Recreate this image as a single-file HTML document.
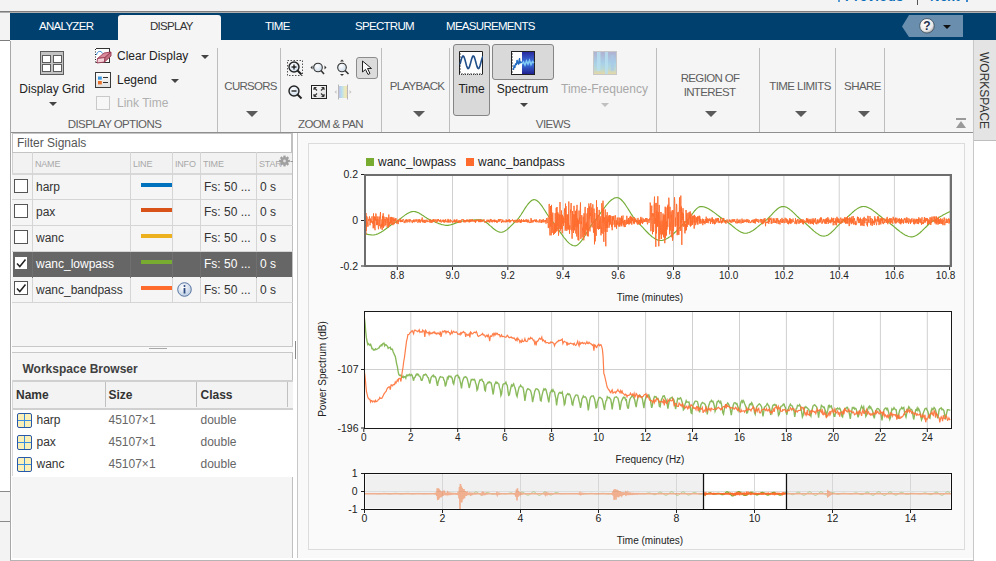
<!DOCTYPE html>
<html><head><meta charset="utf-8"><style>
html,body{margin:0;padding:0;width:996px;height:561px;overflow:hidden;background:#f5f5f5;}
body{position:relative;font-family:"Liberation Sans",sans-serif;}
.r{position:absolute;}
.t{position:absolute;white-space:nowrap;line-height:1.149;}
</style></head><body>
<div class="r" style="left:0px;top:0px;width:996px;height:11px;background:#f3f3f3;"></div>
<div class="t" style="left:836px;top:-9.8px;font-size:13px;color:#0b6fb8;font-weight:700;letter-spacing:0.5px">&lsaquo; Previous</div>
<div class="r" style="left:917px;top:0px;width:1px;height:5px;background:#555;"></div>
<div class="r" style="left:838px;top:0px;width:2px;height:2px;background:#5a9ad0;"></div>
<div class="r" style="left:966px;top:0px;width:2px;height:2px;background:#3a86c8;"></div>
<div class="t" style="left:930px;top:-9.8px;font-size:13px;color:#0b6fb8;font-weight:700;letter-spacing:0.5px">Next &rsaquo;</div>
<div class="r" style="left:0px;top:11px;width:996px;height:1px;background:#7d7d7d;"></div>
<div class="r" style="left:0px;top:12px;width:996px;height:1px;background:#b0b0b0;"></div>
<div class="r" style="left:0px;top:13px;width:10px;height:28px;background:#f3f3f3;"></div>
<div class="r" style="left:10px;top:13px;width:986px;height:27px;background:#00406f;"></div>
<div class="r" style="left:0px;top:40px;width:10px;height:1px;background:#7d7d7d;"></div>
<div class="r" style="left:0px;top:41px;width:10px;height:450px;background:#ffffff;"></div>
<div class="r" style="left:118px;top:15px;width:103px;height:26px;background:#f5f5f5;border-radius:3px 3px 0 0;"></div>
<div class="t" style="left:39px;top:19.6px;font-size:11.5px;color:#ffffff;font-weight:400;letter-spacing:-0.7px">ANALYZER</div>
<div class="t" style="left:150px;top:19.6px;font-size:11.5px;color:#333;font-weight:400;letter-spacing:-0.7px">DISPLAY</div>
<div class="t" style="left:265px;top:19.6px;font-size:11.5px;color:#ffffff;font-weight:400;letter-spacing:-0.7px">TIME</div>
<div class="t" style="left:355px;top:19.6px;font-size:11.5px;color:#ffffff;font-weight:400;letter-spacing:-0.7px">SPECTRUM</div>
<div class="t" style="left:446px;top:19.6px;font-size:11.5px;color:#ffffff;font-weight:400;letter-spacing:-0.7px">MEASUREMENTS</div>
<svg class="r" style="left:900px;top:13px" width="70" height="27"><polygon points="2,13.5 9,2 63,2 63,24 9,24" fill="#6a8fae"/><defs><radialGradient id="hg" cx="40%" cy="35%" r="70%"><stop offset="0" stop-color="#ffffff"/><stop offset="0.7" stop-color="#e8e8e8"/><stop offset="1" stop-color="#9a9a9a"/></radialGradient></defs><circle cx="27" cy="12.8" r="7.3" fill="url(#hg)" stroke="#3a4a5a" stroke-width="0.8"/><text x="27" y="17.3" text-anchor="middle" font-family="Liberation Sans" font-weight="700" font-size="12" fill="#1f3050">?</text><polygon points="43,12 51,12 47,16" fill="#111"/></svg>
<div class="r" style="left:10px;top:40px;width:963px;height:92px;background:#f5f5f5;"></div>
<div class="r" style="left:10px;top:41px;width:1px;height:520px;background:#a8a8a8;"></div>
<div class="r" style="left:11px;top:132px;width:962px;height:1px;background:#8f8f8f;"></div>
<div class="r" style="left:217px;top:48px;width:1px;height:84px;background:#bdbdbd;"></div>
<div class="r" style="left:280px;top:48px;width:1px;height:84px;background:#bdbdbd;"></div>
<div class="r" style="left:381px;top:48px;width:1px;height:84px;background:#bdbdbd;"></div>
<div class="r" style="left:449px;top:48px;width:1px;height:84px;background:#bdbdbd;"></div>
<div class="r" style="left:656px;top:48px;width:1px;height:84px;background:#bdbdbd;"></div>
<div class="r" style="left:759px;top:48px;width:1px;height:84px;background:#bdbdbd;"></div>
<div class="r" style="left:835px;top:48px;width:1px;height:84px;background:#bdbdbd;"></div>
<div class="r" style="left:884px;top:48px;width:1px;height:84px;background:#bdbdbd;"></div>
<svg class="r" style="left:40px;top:51px" width="24" height="24"><rect x="0.5" y="0.5" width="23" height="23" fill="#c2c2c2" stroke="#5c5c5c"/><rect x="2.5" y="4.5" width="8" height="7" fill="#fff" stroke="#5c5c5c"/><rect x="13.5" y="4.5" width="8" height="7" fill="#fff" stroke="#5c5c5c"/><rect x="2.5" y="13.5" width="8" height="7" fill="#fff" stroke="#5c5c5c"/><rect x="13.5" y="13.5" width="8" height="7" fill="#fff" stroke="#5c5c5c"/></svg>
<div class="t" style="left:-148px;width:400px;text-align:center;top:82.8px;font-size:12px;color:#222;font-weight:400;">Display Grid</div>
<div class="r" style="left:49.0px;top:102px;width:0;height:0;border-left:4.0px solid transparent;border-right:4.0px solid transparent;border-top:4px solid #444;"></div>
<svg class="r" style="left:95px;top:48px" width="17" height="17"><rect x="0.5" y="0.5" width="14" height="14" fill="#fff" stroke="#333"/><line x1="0.5" y1="0" x2="0.5" y2="15" stroke="#fff" stroke-width="1"/><line x1="0.5" y1="1" x2="0.5" y2="15" stroke="#222" stroke-dasharray="1,1.5"/><path d="M1.5,7 C2,3 6,2 7.5,5.5" fill="none" stroke="#3a8ad8" stroke-width="1"/><polygon points="9,5 16,4 10,9.5 2.5,10.5" fill="#d88a9a" stroke="#9a3a55" stroke-width="0.9" stroke-linejoin="round"/><polygon points="2.5,10.5 10,9.5 9.5,14 2,15" fill="#f4d0d8" stroke="#9a3a55" stroke-width="0.9" stroke-linejoin="round"/><polygon points="10,9.5 16,4 16,8 9.5,14" fill="#c07080" stroke="#9a3a55" stroke-width="0.9" stroke-linejoin="round"/></svg>
<div class="t" style="left:117px;top:50.3px;font-size:12px;color:#222;font-weight:400;">Clear Display</div>
<div class="r" style="left:201.0px;top:55px;width:0;height:0;border-left:4.0px solid transparent;border-right:4.0px solid transparent;border-top:4px solid #444;"></div>
<svg class="r" style="left:95px;top:72px" width="16" height="16"><defs><linearGradient id="lgg" x1="0" x2="0" y1="0" y2="1"><stop offset="0" stop-color="#ffffff"/><stop offset="1" stop-color="#e0e0e0"/></linearGradient></defs><rect x="0.5" y="0.5" width="15" height="15" fill="url(#lgg)" stroke="#3a3a3a"/><rect x="3" y="4.5" width="3.8" height="3.2" fill="#3d9ae0"/><rect x="3" y="9" width="3.8" height="3.4" fill="#e8702a"/><rect x="8" y="5" width="5" height="1" fill="#333"/><rect x="8" y="10" width="5" height="1" fill="#333"/></svg>
<div class="t" style="left:117px;top:74.0px;font-size:12px;color:#222;font-weight:400;">Legend</div>
<div class="r" style="left:171.0px;top:79px;width:0;height:0;border-left:4.0px solid transparent;border-right:4.0px solid transparent;border-top:4px solid #444;"></div>
<div class="r" style="left:96px;top:96px;width:14px;height:14px;background:#f7f7f7;border:1px solid #c9c9c9;box-sizing:border-box;"></div>
<div class="t" style="left:117px;top:97.0px;font-size:12px;color:#b0b0b0;font-weight:400;">Link Time</div>
<div class="t" style="left:-85.5px;width:400px;text-align:center;top:117.9px;font-size:11.5px;color:#5e5e5e;font-weight:400;letter-spacing:-0.6px">DISPLAY OPTIONS</div>
<div class="t" style="left:50.5px;width:400px;text-align:center;top:79.7px;font-size:11.5px;color:#5e5e5e;font-weight:400;letter-spacing:-0.75px">CURSORS</div>
<div class="r" style="left:246.0px;top:111px;width:0;height:0;border-left:6.0px solid transparent;border-right:6.0px solid transparent;border-top:6px solid #5a5a5a;"></div>
<svg class="r" style="left:287px;top:60px" width="17" height="17"><rect x="0.5" y="0.5" width="15" height="15" fill="none" stroke="#555" stroke-dasharray="1.5,1.5"/></svg>
<svg class="r" style="left:287px;top:60px" width="17" height="17"><defs><radialGradient id="mg28760" cx="40%" cy="35%" r="70%"><stop offset="0" stop-color="#ffffff"/><stop offset="1" stop-color="#c8d8e8"/></radialGradient></defs><circle cx="7" cy="7" r="5" fill="url(#mg28760)" stroke="#222" stroke-width="1.4"/><line x1="10.5" y1="10.5" x2="14.5" y2="14.5" stroke="#222" stroke-width="2"/><line x1="4.5" y1="7" x2="9.5" y2="7" stroke="#111" stroke-width="1.3"/><line x1="7" y1="4.5" x2="7" y2="9.5" stroke="#111" stroke-width="1.3"/></svg>
<svg class="r" style="left:310px;top:60px" width="17" height="17"><defs><radialGradient id="mgx" cx="40%" cy="35%" r="70%"><stop offset="0" stop-color="#ffffff"/><stop offset="1" stop-color="#c8d8e8"/></radialGradient></defs><circle cx="8" cy="7.5" r="4.3" fill="url(#mgx)" stroke="#333" stroke-width="1.1"/><line x1="11" y1="10.5" x2="14" y2="14" stroke="#333" stroke-width="1.6"/><polygon points="0.5,7.5 2.5,5.5 2.5,9.5" fill="#333"/><polygon points="16.5,7.5 14.5,5.5 14.5,9.5" fill="#333"/></svg>
<svg class="r" style="left:334px;top:59px" width="17" height="18"><defs><radialGradient id="mgy" cx="40%" cy="35%" r="70%"><stop offset="0" stop-color="#ffffff"/><stop offset="1" stop-color="#c8d8e8"/></radialGradient></defs><circle cx="8" cy="8.5" r="4.3" fill="url(#mgy)" stroke="#333" stroke-width="1.1"/><line x1="11" y1="11.5" x2="14.5" y2="15" stroke="#333" stroke-width="1.6"/><polygon points="8,0.5 6,2.5 10,2.5" fill="#333"/><polygon points="8,17 6,15 10,15" fill="#333"/></svg>
<div class="r" style="left:356px;top:57px;width:22px;height:22px;background:#dcdcdc;border:1px solid #8c8c8c;border-radius:3px;box-sizing:border-box"></div>
<svg class="r" style="left:361px;top:60px" width="14" height="16"><path d="M1.5,1 L1.5,12 L4.5,9.5 L7,14.5 L9,13.5 L6.5,8.5 L10.5,8.5 Z" fill="#fafafa" stroke="#222" stroke-width="1"/></svg>
<svg class="r" style="left:287px;top:84px" width="17" height="17"><defs><radialGradient id="mg28784" cx="40%" cy="35%" r="70%"><stop offset="0" stop-color="#ffffff"/><stop offset="1" stop-color="#c8d8e8"/></radialGradient></defs><circle cx="7" cy="7" r="5" fill="url(#mg28784)" stroke="#222" stroke-width="1.4"/><line x1="10.5" y1="10.5" x2="14.5" y2="14.5" stroke="#222" stroke-width="2"/><line x1="4.5" y1="7" x2="9.5" y2="7" stroke="#111" stroke-width="1.3"/></svg>
<svg class="r" style="left:311px;top:85px" width="16" height="14"><defs><linearGradient id="fitg" x1="0" x2="1" y1="0" y2="1"><stop offset="0" stop-color="#ffffff"/><stop offset="1" stop-color="#dcdcdc"/></linearGradient></defs><rect x="0.5" y="0.5" width="15" height="13" fill="url(#fitg)" stroke="#222"/><path d="M6,5.5 L3,2.5 M3,2.5 L3,5 M3,2.5 L5.5,2.5 M10,5.5 L13,2.5 M13,2.5 L10.5,2.5 M13,2.5 L13,5 M6,8.5 L3,11.5 M3,11.5 L3,9 M3,11.5 L5.5,11.5 M10,8.5 L13,11.5 M13,11.5 L13,9 M13,11.5 L10.5,11.5" stroke="#333" stroke-width="1.1"/></svg>
<svg class="r" style="left:334px;top:84px" width="18" height="16"><defs><linearGradient id="tfg" x1="0" x2="1"><stop offset="0" stop-color="#b8b0e0"/><stop offset="0.35" stop-color="#a8d8f0"/><stop offset="0.7" stop-color="#e8e8b0"/><stop offset="1" stop-color="#f0d8a0"/></linearGradient></defs><rect x="4.5" y="2" width="9" height="12" fill="url(#tfg)" opacity="0.8"/><line x1="4.5" y1="0.5" x2="4.5" y2="15.5" stroke="#b8b8b8"/><line x1="13.5" y1="0.5" x2="13.5" y2="15.5" stroke="#b8b8b8"/><polygon points="0.5,8 2.5,6 2.5,10" fill="#c8c8c8"/><polygon points="17.5,8 15.5,6 15.5,10" fill="#c8c8c8"/></svg>
<div class="t" style="left:130.5px;width:400px;text-align:center;top:117.9px;font-size:11.5px;color:#5e5e5e;font-weight:400;letter-spacing:-0.65px">ZOOM &amp; PAN</div>
<div class="t" style="left:217px;width:400px;text-align:center;top:79.7px;font-size:11.5px;color:#5e5e5e;font-weight:400;letter-spacing:-0.65px">PLAYBACK</div>
<div class="r" style="left:413.0px;top:111px;width:0;height:0;border-left:6.0px solid transparent;border-right:6.0px solid transparent;border-top:6px solid #5a5a5a;"></div>
<div class="r" style="left:453px;top:44px;width:37px;height:72px;background:#d9d9d9;border:1px solid #858585;border-radius:3px;box-sizing:border-box"></div>
<svg class="r" style="left:459px;top:51px" width="24" height="24"><rect x="0.5" y="0.5" width="23" height="23" fill="#fff"/><path d="M0.5,23.5 L0.5,0.5 L23.5,0.5 L23.5,23.5" fill="none" stroke="#222"/><line x1="0" y1="23.5" x2="24" y2="23.5" stroke="#444" stroke-dasharray="1,1"/><line x1="0.5" y1="3" x2="2" y2="3" stroke="#222" stroke-width="0.8"/><line x1="0.5" y1="6" x2="2" y2="6" stroke="#222" stroke-width="0.8"/><line x1="0.5" y1="9" x2="2" y2="9" stroke="#222" stroke-width="0.8"/><line x1="0.5" y1="12" x2="2" y2="12" stroke="#222" stroke-width="0.8"/><line x1="0.5" y1="15" x2="2" y2="15" stroke="#222" stroke-width="0.8"/><line x1="0.5" y1="18" x2="2" y2="18" stroke="#222" stroke-width="0.8"/><line x1="0.5" y1="21" x2="2" y2="21" stroke="#222" stroke-width="0.8"/><line x1="3" y1="23.5" x2="3" y2="22" stroke="#222" stroke-width="0.8"/><line x1="6" y1="23.5" x2="6" y2="22" stroke="#222" stroke-width="0.8"/><line x1="9" y1="23.5" x2="9" y2="22" stroke="#222" stroke-width="0.8"/><line x1="12" y1="23.5" x2="12" y2="22" stroke="#222" stroke-width="0.8"/><line x1="15" y1="23.5" x2="15" y2="22" stroke="#222" stroke-width="0.8"/><line x1="18" y1="23.5" x2="18" y2="22" stroke="#222" stroke-width="0.8"/><line x1="21" y1="23.5" x2="21" y2="22" stroke="#222" stroke-width="0.8"/><path d="M1.00,13.39 L1.50,11.49 L2.00,9.58 L2.50,7.82 L3.00,6.39 L3.50,5.43 L4.00,5.01 L4.50,5.19 L5.00,5.94 L5.50,7.20 L6.00,8.84 L6.50,10.72 L7.00,12.65 L7.50,14.45 L8.00,15.96 L8.50,17.02 L9.00,17.55 L9.50,17.49 L10.00,16.85 L10.50,15.69 L11.00,14.11 L11.50,12.27 L12.00,10.33 L12.50,8.49 L13.00,6.91 L13.50,5.75 L14.00,5.11 L14.50,5.05 L15.00,5.58 L15.50,6.64 L16.00,8.15 L16.50,9.95 L17.00,11.88 L17.50,13.76 L18.00,15.40 L18.50,16.66 L19.00,17.41 L19.50,17.59 L20.00,17.17 L20.50,16.21 L21.00,14.78 L21.50,13.02 L22.00,11.11 L22.50,9.21 L23.00,7.50 L23.50,6.16 L24.00,5.30" fill="none" stroke="#1f4e8a" stroke-width="1.6"/></svg>
<div class="t" style="left:271.5px;width:400px;text-align:center;top:82.6px;font-size:12px;color:#222;font-weight:400;">Time</div>
<div class="r" style="left:492px;top:44px;width:62px;height:36px;background:#d9d9d9;border:1px solid #858585;border-radius:3px;box-sizing:border-box"></div>
<svg class="r" style="left:511px;top:51px" width="24" height="24"><defs><linearGradient id="spg" x1="0" x2="0" y1="0" y2="1"><stop offset="0" stop-color="#2a2aa0"/><stop offset="0.45" stop-color="#3a70d8"/><stop offset="0.55" stop-color="#3a70d8"/><stop offset="1" stop-color="#202090"/></linearGradient></defs><rect x="0.5" y="0.5" width="23" height="23" fill="#fff" stroke="#222"/><rect x="11" y="1" width="12" height="22" fill="url(#spg)"/><path d="M11,13 L12.5,11 L14,14 L15.5,10 L17,13 L18.5,9.5 L20,13.5 L21.5,10.5 L23,12" stroke="#8ad8f8" stroke-width="1.6" fill="none" opacity="0.85"/><line x1="0.5" y1="3" x2="2" y2="3" stroke="#222" stroke-width="0.8"/><line x1="0.5" y1="6" x2="2" y2="6" stroke="#222" stroke-width="0.8"/><line x1="0.5" y1="9" x2="2" y2="9" stroke="#222" stroke-width="0.8"/><line x1="0.5" y1="12" x2="2" y2="12" stroke="#222" stroke-width="0.8"/><line x1="0.5" y1="15" x2="2" y2="15" stroke="#222" stroke-width="0.8"/><line x1="0.5" y1="18" x2="2" y2="18" stroke="#222" stroke-width="0.8"/><line x1="0.5" y1="21" x2="2" y2="21" stroke="#222" stroke-width="0.8"/><path d="M2.5,19 L3,15 L4,16 L4.5,13 L5.5,13.5 L6,9 L7,12.5 L7.5,13 L8.5,7 L9,12 L10,11 L11,11.5" fill="none" stroke="#1f6ac0" stroke-width="1.3"/></svg>
<div class="t" style="left:322.5px;width:400px;text-align:center;top:83.0px;font-size:12px;color:#222;font-weight:400;">Spectrum</div>
<div class="r" style="left:520.0px;top:103px;width:0;height:0;border-left:4.0px solid transparent;border-right:4.0px solid transparent;border-top:4px solid #444;"></div>
<svg class="r" style="left:593px;top:51px" width="24" height="24"><defs><linearGradient id="tfv" x1="0" x2="0" y1="0" y2="1"><stop offset="0" stop-color="#b0b0d0"/><stop offset="0.5" stop-color="#a8d0e8"/><stop offset="0.75" stop-color="#b8d8d8"/><stop offset="1" stop-color="#e8d8a0"/></linearGradient></defs><rect x="0.5" y="0.5" width="23" height="23" fill="url(#tfv)" stroke="#c8c8c8"/><rect x="4" y="1" width="3.5" height="19" fill="#b8e0f0" opacity="0.8"/><rect x="12" y="1" width="3" height="22" fill="#b8e0f0" opacity="0.8"/><rect x="18" y="4" width="3" height="16" fill="#a8c8e8" opacity="0.6"/></svg>
<div class="t" style="left:404.5px;width:400px;text-align:center;top:83.0px;font-size:12px;color:#a8a8a8;font-weight:400;">Time-Frequency</div>
<div class="r" style="left:601.0px;top:103px;width:0;height:0;border-left:4.0px solid transparent;border-right:4.0px solid transparent;border-top:4px solid #c0c0c0;"></div>
<div class="t" style="left:353px;width:400px;text-align:center;top:117.9px;font-size:11.5px;color:#5e5e5e;font-weight:400;letter-spacing:-0.55px">VIEWS</div>
<div class="t" style="left:510px;width:400px;text-align:center;top:72.4px;font-size:11.5px;color:#5e5e5e;font-weight:400;letter-spacing:-0.65px">REGION OF</div>
<div class="t" style="left:509.5px;width:400px;text-align:center;top:86.4px;font-size:11.5px;color:#5e5e5e;font-weight:400;letter-spacing:-0.65px">INTEREST</div>
<div class="r" style="left:705.0px;top:111px;width:0;height:0;border-left:6.0px solid transparent;border-right:6.0px solid transparent;border-top:6px solid #5a5a5a;"></div>
<div class="t" style="left:600px;width:400px;text-align:center;top:79.7px;font-size:11.5px;color:#5e5e5e;font-weight:400;letter-spacing:-0.55px">TIME LIMITS</div>
<div class="r" style="left:795.0px;top:111px;width:0;height:0;border-left:6.0px solid transparent;border-right:6.0px solid transparent;border-top:6px solid #5a5a5a;"></div>
<div class="t" style="left:662.5px;width:400px;text-align:center;top:79.7px;font-size:11.5px;color:#5e5e5e;font-weight:400;letter-spacing:-0.55px">SHARE</div>
<div class="r" style="left:858.0px;top:111px;width:0;height:0;border-left:6.0px solid transparent;border-right:6.0px solid transparent;border-top:6px solid #5a5a5a;"></div>
<div class="r" style="left:956px;top:118px;width:10px;height:2px;background:#9a9a9a;"></div>
<div class="r" style="left:956px;top:121px;width:0;height:0;border-left:5px solid transparent;border-right:5px solid transparent;border-bottom:7px solid #9a9a9a"></div>
<div class="r" style="left:973px;top:40px;width:23px;height:100px;background:#e4e4e4;border-left:1px solid #c8c8c8;box-sizing:border-box"></div>
<div class="r" style="left:973px;top:140px;width:23px;height:421px;background:#ffffff;border-left:1px solid #c8c8c8;box-sizing:border-box"></div>
<div class="r" style="left:974px;top:140px;width:22px;height:1px;background:#bdbdbd;"></div>
<div class="t" style="left:976px;top:52px;font-size:12px;color:#333;writing-mode:vertical-rl;letter-spacing:0px">WORKSPACE</div>
<div class="r" style="left:11px;top:133px;width:286px;height:428px;background:#f5f5f5;"></div>
<div class="r" style="left:11px;top:133px;width:1px;height:426px;background:#ffffff;"></div>
<div class="r" style="left:12px;top:133px;width:281px;height:20px;background:#ffffff;border:1px solid #c4c4c4;border-right:2px solid #c0c0c0;box-sizing:border-box"></div>
<div class="t" style="left:17px;top:136.8px;font-size:12px;color:#555;font-weight:400;">Filter Signals</div>
<div class="r" style="left:12px;top:153px;width:281px;height:21px;background:#f2f2f2;border-left:1px solid #d0d0d0;box-sizing:border-box"></div>
<div class="r" style="left:12px;top:173px;width:281px;height:2px;background:#d8d8d8;"></div>
<div class="r" style="left:32px;top:152px;width:1px;height:151px;background:#d5d5d5;"></div>
<div class="r" style="left:130px;top:152px;width:1px;height:151px;background:#d5d5d5;"></div>
<div class="r" style="left:172px;top:152px;width:1px;height:151px;background:#d5d5d5;"></div>
<div class="r" style="left:200px;top:152px;width:1px;height:151px;background:#d5d5d5;"></div>
<div class="r" style="left:256px;top:152px;width:1px;height:151px;background:#d5d5d5;"></div>
<div class="r" style="left:292px;top:133px;width:1px;height:427px;background:#c0c0c0;"></div>
<div class="t" style="left:35px;top:158.9px;font-size:9px;color:#a8a8a8;font-weight:400;letter-spacing:-0.2px">NAME</div>
<div class="t" style="left:133px;top:158.9px;font-size:9px;color:#a8a8a8;font-weight:400;letter-spacing:-0.2px">LINE</div>
<div class="t" style="left:175px;top:158.9px;font-size:9px;color:#a8a8a8;font-weight:400;letter-spacing:-0.2px">INFO</div>
<div class="t" style="left:203px;top:158.9px;font-size:9px;color:#a8a8a8;font-weight:400;letter-spacing:-0.2px">TIME</div>
<div class="t" style="left:259px;top:158.9px;font-size:9px;color:#a8a8a8;font-weight:400;letter-spacing:-0.2px">STAR</div>
<svg class="r" style="left:279px;top:155px" width="15" height="13"><g fill="#a0a0a0"><circle cx="5.5" cy="6" r="3.8"/><rect x="4.3" y="0.6" width="2.4" height="2.6" transform="rotate(0 5.5 6)"/><rect x="4.3" y="0.6" width="2.4" height="2.6" transform="rotate(45 5.5 6)"/><rect x="4.3" y="0.6" width="2.4" height="2.6" transform="rotate(90 5.5 6)"/><rect x="4.3" y="0.6" width="2.4" height="2.6" transform="rotate(135 5.5 6)"/><rect x="4.3" y="0.6" width="2.4" height="2.6" transform="rotate(180 5.5 6)"/><rect x="4.3" y="0.6" width="2.4" height="2.6" transform="rotate(225 5.5 6)"/><rect x="4.3" y="0.6" width="2.4" height="2.6" transform="rotate(270 5.5 6)"/><rect x="4.3" y="0.6" width="2.4" height="2.6" transform="rotate(315 5.5 6)"/></g><circle cx="5.5" cy="6" r="1.4" fill="#e0e0e0"/><line x1="11.5" y1="6.5" x2="14" y2="6.5" stroke="#999"/></svg>
<div class="r" style="left:13px;top:175px;width:279px;height:24px;background:#f5f5f5;"></div>
<div class="r" style="left:12px;top:199px;width:281px;height:1px;background:#d5d5d5;"></div>
<div class="r" style="left:32px;top:175px;width:1px;height:25px;background:#d5d5d5;"></div>
<div class="r" style="left:130px;top:175px;width:1px;height:25px;background:#d5d5d5;"></div>
<div class="r" style="left:172px;top:175px;width:1px;height:25px;background:#d5d5d5;"></div>
<div class="r" style="left:200px;top:175px;width:1px;height:25px;background:#d5d5d5;"></div>
<div class="r" style="left:256px;top:175px;width:1px;height:25px;background:#d5d5d5;"></div>
<div class="r" style="left:14px;top:179px;width:14px;height:14px;background:#ffffff;border:1px solid #555;box-sizing:border-box"></div>
<div class="t" style="left:36px;top:180.7px;font-size:12px;color:#333;font-weight:400;">harp</div>
<div class="r" style="left:141px;top:183px;width:31px;height:4px;background:#0072bd;"></div>
<div class="t" style="left:204px;top:181.2px;font-size:12px;color:#333;font-weight:400;">Fs: 50 ...</div>
<div class="t" style="left:260px;top:181.2px;font-size:12px;color:#333;font-weight:400;">0 s</div>
<div class="r" style="left:13px;top:200px;width:279px;height:25px;background:#f5f5f5;"></div>
<div class="r" style="left:12px;top:225px;width:281px;height:1px;background:#d5d5d5;"></div>
<div class="r" style="left:32px;top:200px;width:1px;height:26px;background:#d5d5d5;"></div>
<div class="r" style="left:130px;top:200px;width:1px;height:26px;background:#d5d5d5;"></div>
<div class="r" style="left:172px;top:200px;width:1px;height:26px;background:#d5d5d5;"></div>
<div class="r" style="left:200px;top:200px;width:1px;height:26px;background:#d5d5d5;"></div>
<div class="r" style="left:256px;top:200px;width:1px;height:26px;background:#d5d5d5;"></div>
<div class="r" style="left:14px;top:204px;width:14px;height:14px;background:#ffffff;border:1px solid #555;box-sizing:border-box"></div>
<div class="t" style="left:36px;top:205.7px;font-size:12px;color:#333;font-weight:400;">pax</div>
<div class="r" style="left:141px;top:208px;width:31px;height:4px;background:#d95319;"></div>
<div class="t" style="left:204px;top:206.2px;font-size:12px;color:#333;font-weight:400;">Fs: 50 ...</div>
<div class="t" style="left:260px;top:206.2px;font-size:12px;color:#333;font-weight:400;">0 s</div>
<div class="r" style="left:13px;top:226px;width:279px;height:25px;background:#f5f5f5;"></div>
<div class="r" style="left:12px;top:251px;width:281px;height:1px;background:#d5d5d5;"></div>
<div class="r" style="left:32px;top:226px;width:1px;height:26px;background:#d5d5d5;"></div>
<div class="r" style="left:130px;top:226px;width:1px;height:26px;background:#d5d5d5;"></div>
<div class="r" style="left:172px;top:226px;width:1px;height:26px;background:#d5d5d5;"></div>
<div class="r" style="left:200px;top:226px;width:1px;height:26px;background:#d5d5d5;"></div>
<div class="r" style="left:256px;top:226px;width:1px;height:26px;background:#d5d5d5;"></div>
<div class="r" style="left:14px;top:230px;width:14px;height:14px;background:#ffffff;border:1px solid #555;box-sizing:border-box"></div>
<div class="t" style="left:36px;top:231.7px;font-size:12px;color:#333;font-weight:400;">wanc</div>
<div class="r" style="left:141px;top:234px;width:31px;height:4px;background:#edb120;"></div>
<div class="t" style="left:204px;top:232.2px;font-size:12px;color:#333;font-weight:400;">Fs: 50 ...</div>
<div class="t" style="left:260px;top:232.2px;font-size:12px;color:#333;font-weight:400;">0 s</div>
<div class="r" style="left:13px;top:252px;width:279px;height:25px;background:#666666;"></div>
<div class="r" style="left:32px;top:252px;width:1px;height:26px;background:#707070;"></div>
<div class="r" style="left:130px;top:252px;width:1px;height:26px;background:#707070;"></div>
<div class="r" style="left:172px;top:252px;width:1px;height:26px;background:#707070;"></div>
<div class="r" style="left:200px;top:252px;width:1px;height:26px;background:#707070;"></div>
<div class="r" style="left:256px;top:252px;width:1px;height:26px;background:#707070;"></div>
<div class="r" style="left:14px;top:256px;width:14px;height:14px;background:#ffffff;border:1px solid #666;box-sizing:border-box"></div>
<svg class="r" style="left:15px;top:257px" width="12" height="12"><path d="M2,6.5 L4.8,9.5 L10.5,2.5" fill="none" stroke="#222" stroke-width="1.5"/></svg>
<div class="t" style="left:36px;top:257.7px;font-size:12px;color:#ffffff;font-weight:400;">wanc_lowpass</div>
<div class="r" style="left:141px;top:260px;width:31px;height:4px;background:#77ac30;"></div>
<div class="t" style="left:204px;top:258.2px;font-size:12px;color:#ffffff;font-weight:400;">Fs: 50 ...</div>
<div class="t" style="left:260px;top:258.2px;font-size:12px;color:#ffffff;font-weight:400;">0 s</div>
<div class="r" style="left:13px;top:278px;width:279px;height:24px;background:#f5f5f5;"></div>
<div class="r" style="left:12px;top:302px;width:281px;height:1px;background:#d5d5d5;"></div>
<div class="r" style="left:32px;top:278px;width:1px;height:25px;background:#d5d5d5;"></div>
<div class="r" style="left:130px;top:278px;width:1px;height:25px;background:#d5d5d5;"></div>
<div class="r" style="left:172px;top:278px;width:1px;height:25px;background:#d5d5d5;"></div>
<div class="r" style="left:200px;top:278px;width:1px;height:25px;background:#d5d5d5;"></div>
<div class="r" style="left:256px;top:278px;width:1px;height:25px;background:#d5d5d5;"></div>
<div class="r" style="left:14px;top:281px;width:14px;height:14px;background:#ffffff;border:1px solid #555;box-sizing:border-box"></div>
<svg class="r" style="left:15px;top:282px" width="12" height="12"><path d="M2,6.5 L4.8,9.5 L10.5,2.5" fill="none" stroke="#222" stroke-width="1.5"/></svg>
<div class="t" style="left:36px;top:283.7px;font-size:12px;color:#333;font-weight:400;">wanc_bandpass</div>
<div class="r" style="left:141px;top:286px;width:31px;height:4px;background:#ff6b2c;"></div>
<div class="t" style="left:204px;top:284.2px;font-size:12px;color:#333;font-weight:400;">Fs: 50 ...</div>
<div class="t" style="left:260px;top:284.2px;font-size:12px;color:#333;font-weight:400;">0 s</div>
<svg class="r" style="left:177px;top:282px" width="15" height="15"><defs><radialGradient id="ig" cx="40%" cy="35%" r="70%"><stop offset="0" stop-color="#ffffff"/><stop offset="1" stop-color="#b8c8e0"/></radialGradient></defs><circle cx="7.5" cy="7.5" r="6.8" fill="url(#ig)" stroke="#4a6a9a" stroke-width="0.9"/><rect x="6.6" y="6" width="1.8" height="5.5" fill="#2a4a80"/><circle cx="7.5" cy="4" r="1" fill="#2a4a80"/></svg>
<div class="r" style="left:12px;top:346px;width:281px;height:1px;background:#c8c8c8;"></div>
<div class="r" style="left:12px;top:347px;width:281px;height:5px;background:#f9f9f9;"></div>
<div class="r" style="left:12px;top:352px;width:281px;height:1px;background:#c8c8c8;"></div>
<div class="r" style="left:149px;top:348px;width:18px;height:1px;background:#a8a8a8;"></div>
<div class="r" style="left:293px;top:133px;width:4px;height:427px;background:#ffffff;"></div>
<div class="r" style="left:297px;top:133px;width:1px;height:428px;background:#c8c8c8;"></div>
<div class="r" style="left:295px;top:341px;width:1px;height:18px;background:#888;"></div>
<div class="t" style="left:22.5px;top:363.3px;font-size:12px;color:#404040;font-weight:700;">Workspace Browser</div>
<div class="r" style="left:12px;top:380px;width:281px;height:30px;background:#f3f3f3;border-top:2px solid #d0d0d0;border-bottom:2px solid #d0d0d0;box-sizing:border-box"></div>
<div class="r" style="left:105px;top:382px;width:1px;height:25px;background:#c0c0c0;"></div>
<div class="r" style="left:196px;top:382px;width:1px;height:25px;background:#c0c0c0;"></div>
<div class="r" style="left:287px;top:382px;width:1px;height:25px;background:#c0c0c0;"></div>
<div class="t" style="left:16px;top:388.7px;font-size:12px;color:#333;font-weight:700;">Name</div>
<div class="t" style="left:108.5px;top:388.7px;font-size:12px;color:#333;font-weight:700;">Size</div>
<div class="t" style="left:200.5px;top:388.7px;font-size:12px;color:#333;font-weight:700;">Class</div>
<div class="r" style="left:12px;top:410px;width:281px;height:67px;background:#ffffff;"></div>
<div class="r" style="left:12px;top:380px;width:1px;height:96px;background:#d8d8d8;"></div>
<svg class="r" style="left:17px;top:413px" width="15" height="15"><rect x="0.5" y="0.5" width="14" height="14" rx="1.5" fill="#fbf1b8" stroke="#2a58a8"/><line x1="7.5" y1="1" x2="7.5" y2="14" stroke="#3a8ee0"/><line x1="1" y1="7.5" x2="14" y2="7.5" stroke="#3a8ee0"/></svg>
<div class="t" style="left:36.5px;top:414.0px;font-size:12px;color:#333;font-weight:400;">harp</div>
<div class="t" style="left:108.5px;top:414.0px;font-size:12px;color:#666;font-weight:400;">45107×1</div>
<div class="t" style="left:200.5px;top:414.0px;font-size:12px;color:#666;font-weight:400;">double</div>
<svg class="r" style="left:17px;top:435px" width="15" height="15"><rect x="0.5" y="0.5" width="14" height="14" rx="1.5" fill="#fbf1b8" stroke="#2a58a8"/><line x1="7.5" y1="1" x2="7.5" y2="14" stroke="#3a8ee0"/><line x1="1" y1="7.5" x2="14" y2="7.5" stroke="#3a8ee0"/></svg>
<div class="t" style="left:36.5px;top:436.0px;font-size:12px;color:#333;font-weight:400;">pax</div>
<div class="t" style="left:108.5px;top:436.0px;font-size:12px;color:#666;font-weight:400;">45107×1</div>
<div class="t" style="left:200.5px;top:436.0px;font-size:12px;color:#666;font-weight:400;">double</div>
<svg class="r" style="left:17px;top:457px" width="15" height="15"><rect x="0.5" y="0.5" width="14" height="14" rx="1.5" fill="#fbf1b8" stroke="#2a58a8"/><line x1="7.5" y1="1" x2="7.5" y2="14" stroke="#3a8ee0"/><line x1="1" y1="7.5" x2="14" y2="7.5" stroke="#3a8ee0"/></svg>
<div class="t" style="left:36.5px;top:458.0px;font-size:12px;color:#333;font-weight:400;">wanc</div>
<div class="t" style="left:108.5px;top:458.0px;font-size:12px;color:#666;font-weight:400;">45107×1</div>
<div class="t" style="left:200.5px;top:458.0px;font-size:12px;color:#666;font-weight:400;">double</div>
<div class="r" style="left:0px;top:491px;width:10px;height:1px;background:#8a8a8a;"></div>
<div class="r" style="left:0px;top:492px;width:10px;height:29px;background:#f3f3f3;"></div>
<div class="r" style="left:0px;top:521px;width:10px;height:1px;background:#8a8a8a;"></div>
<div class="r" style="left:0px;top:522px;width:10px;height:39px;background:#f3f3f3;"></div>
<div class="r" style="left:298px;top:133px;width:675px;height:426px;background:#f9f9f9;"></div>
<div class="r" style="left:308px;top:143px;width:657px;height:407px;background:#fafafa;border:1px solid #dcdcdc;box-sizing:border-box"></div>
<div class="r" style="left:11px;top:558px;width:962px;height:2px;background:#ffffff;"></div>
<div class="r" style="left:10px;top:560px;width:964px;height:1px;background:#b5b5b5;"></div>
<svg class="r" style="left:0;top:0" width="996" height="561" font-family="Liberation Sans"><rect x="366" y="158" width="8" height="8" fill="#77ac30"/><text x="378" y="166" font-size="12" fill="#222">wanc_lowpass</text><rect x="466" y="158" width="8" height="8" fill="#ff6b2c"/><text x="478" y="166" font-size="12" fill="#222">wanc_bandpass</text><rect x="365" y="175" width="586" height="91" fill="#fff"/><line x1="397.3" y1="175" x2="397.3" y2="266" stroke="#d0d0d0" stroke-width="1"/><line x1="397.3" y1="266" x2="397.3" y2="270" stroke="#222" stroke-width="1"/><text x="397.3" y="279" font-size="10" text-anchor="middle" fill="#222">8.8</text><line x1="452.5" y1="175" x2="452.5" y2="266" stroke="#d0d0d0" stroke-width="1"/><line x1="452.5" y1="266" x2="452.5" y2="270" stroke="#222" stroke-width="1"/><text x="452.5" y="279" font-size="10" text-anchor="middle" fill="#222">9.0</text><line x1="507.8" y1="175" x2="507.8" y2="266" stroke="#d0d0d0" stroke-width="1"/><line x1="507.8" y1="266" x2="507.8" y2="270" stroke="#222" stroke-width="1"/><text x="507.8" y="279" font-size="10" text-anchor="middle" fill="#222">9.2</text><line x1="563.0" y1="175" x2="563.0" y2="266" stroke="#d0d0d0" stroke-width="1"/><line x1="563.0" y1="266" x2="563.0" y2="270" stroke="#222" stroke-width="1"/><text x="563.0" y="279" font-size="10" text-anchor="middle" fill="#222">9.4</text><line x1="618.2" y1="175" x2="618.2" y2="266" stroke="#d0d0d0" stroke-width="1"/><line x1="618.2" y1="266" x2="618.2" y2="270" stroke="#222" stroke-width="1"/><text x="618.2" y="279" font-size="10" text-anchor="middle" fill="#222">9.6</text><line x1="673.5" y1="175" x2="673.5" y2="266" stroke="#d0d0d0" stroke-width="1"/><line x1="673.5" y1="266" x2="673.5" y2="270" stroke="#222" stroke-width="1"/><text x="673.5" y="279" font-size="10" text-anchor="middle" fill="#222">9.8</text><line x1="728.7" y1="175" x2="728.7" y2="266" stroke="#d0d0d0" stroke-width="1"/><line x1="728.7" y1="266" x2="728.7" y2="270" stroke="#222" stroke-width="1"/><text x="728.7" y="279" font-size="10" text-anchor="middle" fill="#222">10.0</text><line x1="783.9" y1="175" x2="783.9" y2="266" stroke="#d0d0d0" stroke-width="1"/><line x1="783.9" y1="266" x2="783.9" y2="270" stroke="#222" stroke-width="1"/><text x="783.9" y="279" font-size="10" text-anchor="middle" fill="#222">10.2</text><line x1="839.2" y1="175" x2="839.2" y2="266" stroke="#d0d0d0" stroke-width="1"/><line x1="839.2" y1="266" x2="839.2" y2="270" stroke="#222" stroke-width="1"/><text x="839.2" y="279" font-size="10" text-anchor="middle" fill="#222">10.4</text><line x1="894.4" y1="175" x2="894.4" y2="266" stroke="#d0d0d0" stroke-width="1"/><line x1="894.4" y1="266" x2="894.4" y2="270" stroke="#222" stroke-width="1"/><text x="894.4" y="279" font-size="10" text-anchor="middle" fill="#222">10.6</text><line x1="949.6" y1="175" x2="949.6" y2="266" stroke="#d0d0d0" stroke-width="1"/><line x1="949.6" y1="266" x2="949.6" y2="270" stroke="#222" stroke-width="1"/><text x="945.6" y="279" font-size="10" text-anchor="middle" fill="#222">10.8</text><defs><clipPath id="c1"><rect x="365" y="175" width="586" height="91"/></clipPath><clipPath id="c2"><rect x="364.5" y="311.5" width="587" height="117"/></clipPath><clipPath id="c3"><rect x="364.5" y="473.5" width="587" height="36"/></clipPath></defs><g clip-path="url(#c1)"><path d="M365.0,233.3 L366.0,233.7 L367.0,234.1 L368.0,234.4 L369.0,234.6 L370.0,234.8 L371.0,234.9 L372.0,235.0 L373.0,235.0 L374.0,234.9 L375.0,234.7 L376.0,234.5 L377.0,234.1 L378.0,233.7 L379.0,233.2 L380.0,232.7 L381.0,232.2 L382.0,231.5 L383.0,230.9 L384.0,230.2 L385.0,229.5 L386.0,228.8 L387.0,228.0 L388.0,227.3 L389.0,226.5 L390.0,225.8 L391.0,225.0 L392.0,224.3 L393.0,223.6 L394.0,223.0 L395.0,222.4 L396.0,221.8 L397.0,221.1 L398.0,220.4 L399.0,219.7 L400.0,219.0 L401.0,218.2 L402.0,217.4 L403.0,216.6 L404.0,215.9 L405.0,215.1 L406.0,214.4 L407.0,213.8 L408.0,213.2 L409.0,212.7 L410.0,212.2 L411.0,211.9 L412.0,211.6 L413.0,211.5 L414.0,211.5 L415.0,211.6 L416.0,211.9 L417.0,212.2 L418.0,212.6 L419.0,213.1 L420.0,213.7 L421.0,214.3 L422.0,215.0 L423.0,215.6 L424.0,216.3 L425.0,217.0 L426.0,217.6 L427.0,218.3 L428.0,218.8 L429.0,219.4 L430.0,219.8 L431.0,220.2 L432.0,220.6 L433.0,221.1 L434.0,221.5 L435.0,221.9 L436.0,222.4 L437.0,222.8 L438.0,223.2 L439.0,223.6 L440.0,223.9 L441.0,224.3 L442.0,224.6 L443.0,224.8 L444.0,225.0 L445.0,225.2 L446.0,225.3 L447.0,225.3 L448.0,225.3 L449.0,225.1 L450.0,225.0 L451.0,224.7 L452.0,224.4 L453.0,224.1 L454.0,223.7 L455.0,223.4 L456.0,223.0 L457.0,222.6 L458.0,222.3 L459.0,221.9 L460.0,221.6 L461.0,221.4 L462.0,221.1 L463.0,221.0 L464.0,220.9 L465.0,220.8 L466.0,220.7 L467.0,220.6 L468.0,220.5 L469.0,220.4 L470.0,220.3 L471.0,220.2 L472.0,220.1 L473.0,220.1 L474.0,220.0 L475.0,219.9 L476.0,219.9 L477.0,219.8 L478.0,219.8 L479.0,219.8 L480.0,219.8 L481.0,219.9 L482.0,220.1 L483.0,220.5 L484.0,221.0 L485.0,221.6 L486.0,222.3 L487.0,223.0 L488.0,223.8 L489.0,224.7 L490.0,225.6 L491.0,226.4 L492.0,227.3 L493.0,228.2 L494.0,229.0 L495.0,229.7 L496.0,230.4 L497.0,231.0 L498.0,231.5 L499.0,231.9 L500.0,232.1 L501.0,232.2 L502.0,232.1 L503.0,231.9 L504.0,231.5 L505.0,230.9 L506.0,230.3 L507.0,229.6 L508.0,228.7 L509.0,227.8 L510.0,226.9 L511.0,225.9 L512.0,224.9 L513.0,223.9 L514.0,222.9 L515.0,221.9 L516.0,221.0 L517.0,220.0 L518.0,218.9 L519.0,217.6 L520.0,216.2 L521.0,214.7 L522.0,213.1 L523.0,211.6 L524.0,210.0 L525.0,208.4 L526.0,206.9 L527.0,205.5 L528.0,204.2 L529.0,203.0 L530.0,201.9 L531.0,201.0 L532.0,200.3 L533.0,199.9 L534.0,199.7 L535.0,199.8 L536.0,200.1 L537.0,200.7 L538.0,201.5 L539.0,202.4 L540.0,203.6 L541.0,204.8 L542.0,206.2 L543.0,207.7 L544.0,209.2 L545.0,210.8 L546.0,212.4 L547.0,214.0 L548.0,215.5 L549.0,217.0 L550.0,218.5 L551.0,219.8 L552.0,221.0 L553.0,222.2 L554.0,223.4 L555.0,224.8 L556.0,226.1 L557.0,227.5 L558.0,229.0 L559.0,230.4 L560.0,231.9 L561.0,233.3 L562.0,234.7 L563.0,236.1 L564.0,237.5 L565.0,238.7 L566.0,239.9 L567.0,241.1 L568.0,242.1 L569.0,243.1 L570.0,243.9 L571.0,244.6 L572.0,245.1 L573.0,245.5 L574.0,245.7 L575.0,245.8 L576.0,245.6 L577.0,245.2 L578.0,244.5 L579.0,243.7 L580.0,242.6 L581.0,241.5 L582.0,240.1 L583.0,238.7 L584.0,237.2 L585.0,235.5 L586.0,233.9 L587.0,232.2 L588.0,230.5 L589.0,228.8 L590.0,227.2 L591.0,225.6 L592.0,224.1 L593.0,222.7 L594.0,221.5 L595.0,220.3 L596.0,219.1 L597.0,217.8 L598.0,216.5 L599.0,215.2 L600.0,213.8 L601.0,212.4 L602.0,211.0 L603.0,209.6 L604.0,208.3 L605.0,207.0 L606.0,205.7 L607.0,204.5 L608.0,203.3 L609.0,202.2 L610.0,201.2 L611.0,200.3 L612.0,199.5 L613.0,198.9 L614.0,198.3 L615.0,197.9 L616.0,197.7 L617.0,197.6 L618.0,197.7 L619.0,198.1 L620.0,198.7 L621.0,199.5 L622.0,200.5 L623.0,201.6 L624.0,202.9 L625.0,204.2 L626.0,205.7 L627.0,207.2 L628.0,208.8 L629.0,210.4 L630.0,212.0 L631.0,213.6 L632.0,215.1 L633.0,216.6 L634.0,218.0 L635.0,219.2 L636.0,220.4 L637.0,221.4 L638.0,222.4 L639.0,223.4 L640.0,224.5 L641.0,225.6 L642.0,226.7 L643.0,227.7 L644.0,228.8 L645.0,229.9 L646.0,231.0 L647.0,232.0 L648.0,233.0 L649.0,234.0 L650.0,234.9 L651.0,235.8 L652.0,236.7 L653.0,237.4 L654.0,238.1 L655.0,238.7 L656.0,239.3 L657.0,239.7 L658.0,240.1 L659.0,240.3 L660.0,240.5 L661.0,240.5 L662.0,240.4 L663.0,240.2 L664.0,239.9 L665.0,239.6 L666.0,239.1 L667.0,238.6 L668.0,238.0 L669.0,237.3 L670.0,236.6 L671.0,235.8 L672.0,235.0 L673.0,234.1 L674.0,233.2 L675.0,232.3 L676.0,231.3 L677.0,230.3 L678.0,229.3 L679.0,228.3 L680.0,227.3 L681.0,226.3 L682.0,225.3 L683.0,224.3 L684.0,223.3 L685.0,222.4 L686.0,221.4 L687.0,220.5 L688.0,219.5 L689.0,218.3 L690.0,217.1 L691.0,215.7 L692.0,214.4 L693.0,213.0 L694.0,211.7 L695.0,210.5 L696.0,209.4 L697.0,208.4 L698.0,207.6 L699.0,207.0 L700.0,206.6 L701.0,206.5 L702.0,206.6 L703.0,206.7 L704.0,206.9 L705.0,207.2 L706.0,207.6 L707.0,208.0 L708.0,208.5 L709.0,209.1 L710.0,209.7 L711.0,210.3 L712.0,211.0 L713.0,211.7 L714.0,212.4 L715.0,213.1 L716.0,213.9 L717.0,214.7 L718.0,215.4 L719.0,216.2 L720.0,217.0 L721.0,217.7 L722.0,218.5 L723.0,219.2 L724.0,219.9 L725.0,220.5 L726.0,221.1 L727.0,221.8 L728.0,222.5 L729.0,223.2 L730.0,224.0 L731.0,224.8 L732.0,225.6 L733.0,226.5 L734.0,227.3 L735.0,228.1 L736.0,228.9 L737.0,229.6 L738.0,230.3 L739.0,231.0 L740.0,231.6 L741.0,232.1 L742.0,232.5 L743.0,232.9 L744.0,233.1 L745.0,233.2 L746.0,233.2 L747.0,233.1 L748.0,232.8 L749.0,232.5 L750.0,232.1 L751.0,231.6 L752.0,231.0 L753.0,230.4 L754.0,229.7 L755.0,229.0 L756.0,228.2 L757.0,227.4 L758.0,226.6 L759.0,225.8 L760.0,224.9 L761.0,224.1 L762.0,223.3 L763.0,222.5 L764.0,221.7 L765.0,221.0 L766.0,220.2 L767.0,219.4 L768.0,218.5 L769.0,217.5 L770.0,216.4 L771.0,215.4 L772.0,214.3 L773.0,213.2 L774.0,212.2 L775.0,211.2 L776.0,210.2 L777.0,209.3 L778.0,208.5 L779.0,207.8 L780.0,207.3 L781.0,206.9 L782.0,206.6 L783.0,206.5 L784.0,206.6 L785.0,206.8 L786.0,207.1 L787.0,207.6 L788.0,208.2 L789.0,208.8 L790.0,209.6 L791.0,210.4 L792.0,211.2 L793.0,212.2 L794.0,213.1 L795.0,214.1 L796.0,215.1 L797.0,216.1 L798.0,217.0 L799.0,218.0 L800.0,218.9 L801.0,219.8 L802.0,220.6 L803.0,221.3 L804.0,222.1 L805.0,222.9 L806.0,223.8 L807.0,224.7 L808.0,225.6 L809.0,226.5 L810.0,227.5 L811.0,228.4 L812.0,229.3 L813.0,230.2 L814.0,231.1 L815.0,231.9 L816.0,232.7 L817.0,233.4 L818.0,234.1 L819.0,234.7 L820.0,235.2 L821.0,235.6 L822.0,235.9 L823.0,236.0 L824.0,236.1 L825.0,236.0 L826.0,235.8 L827.0,235.4 L828.0,234.9 L829.0,234.2 L830.0,233.5 L831.0,232.7 L832.0,231.8 L833.0,230.8 L834.0,229.8 L835.0,228.8 L836.0,227.7 L837.0,226.7 L838.0,225.6 L839.0,224.6 L840.0,223.6 L841.0,222.7 L842.0,221.8 L843.0,221.0 L844.0,220.2 L845.0,219.4 L846.0,218.5 L847.0,217.6 L848.0,216.7 L849.0,215.7 L850.0,214.8 L851.0,213.8 L852.0,212.9 L853.0,212.0 L854.0,211.1 L855.0,210.3 L856.0,209.6 L857.0,208.9 L858.0,208.2 L859.0,207.7 L860.0,207.2 L861.0,206.9 L862.0,206.6 L863.0,206.5 L864.0,206.5 L865.0,206.6 L866.0,206.8 L867.0,207.1 L868.0,207.5 L869.0,208.0 L870.0,208.5 L871.0,209.1 L872.0,209.7 L873.0,210.4 L874.0,211.2 L875.0,211.9 L876.0,212.7 L877.0,213.5 L878.0,214.4 L879.0,215.2 L880.0,216.0 L881.0,216.8 L882.0,217.7 L883.0,218.4 L884.0,219.2 L885.0,219.9 L886.0,220.6 L887.0,221.3 L888.0,221.9 L889.0,222.6 L890.0,223.4 L891.0,224.2 L892.0,225.0 L893.0,225.8 L894.0,226.6 L895.0,227.5 L896.0,228.3 L897.0,229.2 L898.0,230.0 L899.0,230.8 L900.0,231.6 L901.0,232.3 L902.0,233.0 L903.0,233.7 L904.0,234.3 L905.0,234.9 L906.0,235.4 L907.0,235.8 L908.0,236.2 L909.0,236.5 L910.0,236.7 L911.0,236.8 L912.0,236.8 L913.0,236.7 L914.0,236.4 L915.0,236.0 L916.0,235.5 L917.0,234.9 L918.0,234.2 L919.0,233.5 L920.0,232.7 L921.0,231.8 L922.0,230.9 L923.0,229.9 L924.0,228.9 L925.0,227.9 L926.0,227.0 L927.0,226.0 L928.0,225.0 L929.0,224.1 L930.0,223.2 L931.0,222.4 L932.0,221.7 L933.0,221.0 L934.0,220.4 L935.0,219.8 L936.0,219.2 L937.0,218.6 L938.0,218.0 L939.0,217.4 L940.0,216.8 L941.0,216.2 L942.0,215.7 L943.0,215.1 L944.0,214.6 L945.0,214.1 L946.0,213.5 L947.0,213.0 L948.0,212.5 L949.0,212.0 L950.0,211.6 L951.0,211.1" fill="none" stroke="#74ad36" stroke-width="1.15"/><path d="M365.0,236.0 L365.2,233.0 L365.5,215.0 L365.8,235.0 L366.0,213.0 L366.2,231.0 L366.5,216.0 L366.8,227.0 L367.0,216.6 L367.2,221.7 L367.5,223.7 L367.8,223.6 L368.0,226.5 L368.2,221.7 L368.5,220.9 L368.8,219.2 L369.0,220.9 L369.2,217.8 L369.5,216.4 L369.8,220.6 L370.0,225.3 L370.2,223.5 L370.5,218.6 L370.8,223.0 L371.0,222.4 L371.2,220.7 L371.5,222.3 L371.8,218.7 L372.0,216.3 L372.2,220.6 L372.5,221.1 L372.8,223.8 L373.0,221.3 L373.2,228.3 L373.5,213.4 L373.8,227.6 L374.0,226.4 L374.2,221.1 L374.5,216.5 L374.8,228.1 L375.0,230.2 L375.2,217.0 L375.5,220.5 L375.8,213.5 L376.0,213.6 L376.2,215.9 L376.5,225.1 L376.8,219.5 L377.0,220.7 L377.2,216.4 L377.5,224.9 L377.8,219.1 L378.0,224.1 L378.2,226.3 L378.5,229.2 L378.8,224.5 L379.0,216.5 L379.2,226.1 L379.5,219.7 L379.8,217.5 L380.0,218.1 L380.2,215.3 L380.5,212.0 L380.8,228.6 L381.0,224.5 L381.2,227.1 L381.5,223.9 L381.8,226.3 L382.0,219.3 L382.2,229.9 L382.5,215.8 L382.8,225.9 L383.0,217.6 L383.2,213.3 L383.5,227.8 L383.8,216.4 L384.0,218.0 L384.2,217.8 L384.5,218.5 L384.8,226.3 L385.0,225.1 L385.2,219.0 L385.5,219.5 L385.8,225.1 L386.0,217.0 L386.2,218.3 L386.5,217.8 L386.8,223.6 L387.0,223.8 L387.2,227.3 L387.5,221.8 L387.8,217.6 L388.0,222.1 L388.2,219.4 L388.5,227.5 L388.8,214.5 L389.0,221.5 L389.2,225.7 L389.5,222.0 L389.8,224.9 L390.0,220.4 L390.2,217.3 L390.5,223.4 L390.8,220.1 L391.0,216.9 L391.2,223.5 L391.5,218.0 L391.8,217.0 L392.0,224.7 L392.2,220.4 L392.5,217.6 L392.8,218.1 L393.0,225.2 L393.2,219.1 L393.5,221.1 L393.8,217.5 L394.0,218.9 L394.2,224.2 L394.5,223.2 L394.8,219.1 L395.0,221.3 L395.2,218.4 L395.5,219.5 L395.8,220.7 L396.0,218.2 L396.2,223.1 L396.5,222.3 L396.8,223.6 L397.0,223.0 L397.2,223.1 L397.5,220.4 L397.8,219.8 L398.0,222.8 L398.2,224.1 L398.5,220.2 L398.8,222.0 L399.0,220.8 L399.2,220.9 L399.5,220.6 L399.8,219.1 L400.0,218.6 L400.2,219.6 L400.5,222.1 L400.8,219.5 L401.0,221.9 L401.2,220.2 L401.5,221.8 L401.8,221.6 L402.0,220.8 L402.2,220.4 L402.5,221.9 L402.8,219.5 L403.0,219.8 L403.2,219.1 L403.5,219.4 L403.8,220.7 L404.0,222.7 L404.2,222.1 L404.5,222.2 L404.8,221.4 L405.0,223.1 L405.2,219.8 L405.5,220.1 L405.8,221.5 L406.0,219.6 L406.2,221.3 L406.5,220.0 L406.8,219.3 L407.0,222.6 L407.2,220.5 L407.5,221.2 L407.8,220.0 L408.0,219.7 L408.2,221.9 L408.5,221.7 L408.8,221.6 L409.0,219.2 L409.2,219.3 L409.5,219.7 L409.8,222.4 L410.0,220.2 L410.2,219.3 L410.5,220.5 L410.8,220.9 L411.0,220.1 L411.2,221.6 L411.5,221.3 L411.8,221.3 L412.0,221.8 L412.2,223.0 L412.5,222.8 L412.8,220.4 L413.0,221.3 L413.2,220.1 L413.5,221.9 L413.8,219.5 L414.0,221.2 L414.2,222.3 L414.5,220.6 L414.8,220.8 L415.0,220.1 L415.2,219.4 L415.5,220.4 L415.8,221.7 L416.0,220.5 L416.2,221.3 L416.5,219.6 L416.8,220.5 L417.0,219.5 L417.2,221.6 L417.5,222.6 L417.8,222.2 L418.0,221.6 L418.2,219.5 L418.5,220.1 L418.8,222.4 L419.0,220.2 L419.2,219.2 L419.5,221.7 L419.8,219.7 L420.0,220.3 L420.2,222.8 L420.5,220.3 L420.8,219.8 L421.0,220.3 L421.2,221.5 L421.5,219.4 L421.8,219.7 L422.0,219.5 L422.2,217.5 L422.5,222.3 L422.8,220.1 L423.0,219.9 L423.2,220.3 L423.5,222.2 L423.8,221.2 L424.0,219.8 L424.2,222.9 L424.5,220.3 L424.8,220.6 L425.0,222.3 L425.2,222.9 L425.5,221.5 L425.8,219.8 L426.0,222.2 L426.2,221.9 L426.5,221.6 L426.8,220.1 L427.0,219.6 L427.2,221.8 L427.5,221.9 L427.8,220.7 L428.0,221.9 L428.2,221.8 L428.5,221.6 L428.8,221.4 L429.0,221.6 L429.2,219.7 L429.5,220.0 L429.8,222.5 L430.0,221.9 L430.2,219.3 L430.5,222.5 L430.8,221.6 L431.0,221.9 L431.2,222.0 L431.5,220.3 L431.8,223.0 L432.0,221.9 L432.2,220.3 L432.5,219.7 L432.8,222.2 L433.0,221.6 L433.2,219.7 L433.5,221.7 L433.8,219.0 L434.0,221.7 L434.2,220.0 L434.5,220.0 L434.8,219.8 L435.0,219.8 L435.2,220.6 L435.5,221.3 L435.8,219.4 L436.0,220.1 L436.2,222.4 L436.5,222.8 L436.8,220.7 L437.0,219.5 L437.2,220.0 L437.5,221.5 L437.8,221.9 L438.0,219.0 L438.2,220.1 L438.5,219.0 L438.8,221.0 L439.0,220.6 L439.2,220.4 L439.5,220.0 L439.8,221.7 L440.0,220.0 L440.2,222.2 L440.5,219.6 L440.8,219.7 L441.0,220.3 L441.2,221.4 L441.5,222.4 L441.8,221.3 L442.0,221.4 L442.2,219.9 L442.5,220.6 L442.8,221.7 L443.0,220.6 L443.2,219.6 L443.5,222.3 L443.8,220.0 L444.0,220.6 L444.2,221.5 L444.5,222.5 L444.8,219.9 L445.0,221.0 L445.2,222.2 L445.5,219.2 L445.8,219.6 L446.0,220.6 L446.2,221.9 L446.5,221.6 L446.8,220.9 L447.0,222.4 L447.2,222.2 L447.5,220.6 L447.8,221.6 L448.0,218.9 L448.2,222.7 L448.5,220.5 L448.8,221.9 L449.0,219.6 L449.2,221.6 L449.5,221.3 L449.8,221.4 L450.0,222.8 L450.2,222.1 L450.5,219.5 L450.8,221.2 L451.0,221.5 L451.2,221.0 L451.5,220.5 L451.8,220.6 L452.0,222.1 L452.2,221.7 L452.5,222.7 L452.8,221.5 L453.0,221.2 L453.2,221.0 L453.5,222.1 L453.8,222.3 L454.0,219.7 L454.2,221.2 L454.5,222.3 L454.8,219.5 L455.0,221.8 L455.2,220.8 L455.5,222.7 L455.8,220.9 L456.0,220.0 L456.2,220.8 L456.5,221.8 L456.8,219.2 L457.0,219.9 L457.2,222.2 L457.5,221.8 L457.8,222.2 L458.0,220.8 L458.2,220.5 L458.5,222.9 L458.8,220.7 L459.0,223.0 L459.2,220.9 L459.5,221.0 L459.8,220.3 L460.0,221.4 L460.2,222.7 L460.5,220.5 L460.8,221.5 L461.0,222.5 L461.2,221.2 L461.5,219.8 L461.8,219.3 L462.0,219.2 L462.2,219.8 L462.5,219.7 L462.8,219.4 L463.0,219.9 L463.2,219.2 L463.5,222.2 L463.8,222.0 L464.0,219.9 L464.2,221.8 L464.5,220.4 L464.8,220.5 L465.0,222.6 L465.2,220.2 L465.5,221.7 L465.8,220.9 L466.0,221.4 L466.2,220.6 L466.5,220.6 L466.8,219.5 L467.0,222.1 L467.2,220.1 L467.5,220.0 L467.8,219.7 L468.0,220.8 L468.2,221.5 L468.5,221.7 L468.8,220.1 L469.0,220.2 L469.2,222.4 L469.5,219.6 L469.8,222.1 L470.0,220.6 L470.2,219.7 L470.5,221.8 L470.8,219.6 L471.0,221.2 L471.2,220.6 L471.5,221.3 L471.8,221.7 L472.0,219.4 L472.2,220.8 L472.5,219.3 L472.8,221.5 L473.0,220.6 L473.2,220.3 L473.5,220.5 L473.8,221.5 L474.0,221.6 L474.2,219.9 L474.5,220.7 L474.8,221.8 L475.0,220.1 L475.2,222.1 L475.5,222.8 L475.8,220.1 L476.0,221.7 L476.2,221.2 L476.5,220.0 L476.8,219.5 L477.0,220.4 L477.2,220.2 L477.5,221.1 L477.8,219.9 L478.0,219.9 L478.2,219.8 L478.5,219.6 L478.8,222.1 L479.0,220.3 L479.2,222.1 L479.5,220.3 L479.8,221.6 L480.0,221.3 L480.2,219.0 L480.5,221.0 L480.8,222.2 L481.0,219.9 L481.2,221.8 L481.5,220.1 L481.8,220.0 L482.0,221.3 L482.2,220.2 L482.5,221.3 L482.8,221.8 L483.0,219.7 L483.2,220.2 L483.5,220.3 L483.8,220.0 L484.0,219.3 L484.2,220.4 L484.5,221.8 L484.8,222.7 L485.0,222.2 L485.2,222.3 L485.5,221.7 L485.8,221.0 L486.0,222.1 L486.2,221.3 L486.5,221.7 L486.8,220.2 L487.0,220.3 L487.2,219.7 L487.5,221.7 L487.8,221.9 L488.0,220.1 L488.2,221.1 L488.5,219.9 L488.8,221.8 L489.0,219.8 L489.2,222.4 L489.5,221.1 L489.8,222.4 L490.0,221.8 L490.2,219.2 L490.5,219.2 L490.8,221.3 L491.0,219.1 L491.2,221.2 L491.5,221.9 L491.8,220.5 L492.0,222.0 L492.2,222.4 L492.5,220.3 L492.8,220.1 L493.0,221.4 L493.2,220.2 L493.5,219.8 L493.8,221.3 L494.0,221.7 L494.2,220.0 L494.5,222.2 L494.8,219.6 L495.0,222.0 L495.2,220.4 L495.5,222.0 L495.8,221.2 L496.0,220.9 L496.2,220.3 L496.5,222.5 L496.8,220.7 L497.0,222.0 L497.2,222.4 L497.5,222.6 L497.8,220.7 L498.0,221.5 L498.2,219.9 L498.5,219.1 L498.8,221.7 L499.0,221.9 L499.2,221.8 L499.5,219.4 L499.8,221.1 L500.0,220.7 L500.2,219.4 L500.5,219.9 L500.8,220.0 L501.0,219.0 L501.2,221.9 L501.5,222.8 L501.8,221.3 L502.0,221.1 L502.2,222.1 L502.5,221.7 L502.8,219.6 L503.0,222.1 L503.2,221.6 L503.5,222.1 L503.8,222.2 L504.0,220.5 L504.2,221.3 L504.5,222.1 L504.8,222.0 L505.0,221.3 L505.2,221.1 L505.5,221.5 L505.8,222.4 L506.0,220.0 L506.2,219.4 L506.5,222.1 L506.8,220.4 L507.0,221.7 L507.2,221.4 L507.5,220.3 L507.8,222.1 L508.0,220.2 L508.2,220.4 L508.5,219.8 L508.8,221.6 L509.0,219.4 L509.2,219.9 L509.5,219.4 L509.8,222.5 L510.0,220.6 L510.2,220.0 L510.5,221.9 L510.8,222.1 L511.0,221.2 L511.2,220.3 L511.5,220.4 L511.8,220.9 L512.0,220.1 L512.2,220.2 L512.5,219.4 L512.8,220.7 L513.0,220.4 L513.2,220.0 L513.5,222.3 L513.8,220.9 L514.0,221.2 L514.2,220.3 L514.5,220.4 L514.8,221.7 L515.0,220.1 L515.2,219.8 L515.5,222.2 L515.8,221.3 L516.0,222.5 L516.2,222.5 L516.5,221.8 L516.8,221.6 L517.0,220.4 L517.2,222.6 L517.5,220.0 L517.8,219.1 L518.0,220.3 L518.2,222.2 L518.5,221.0 L518.8,220.1 L519.0,222.2 L519.2,221.9 L519.5,219.2 L519.8,219.7 L520.0,221.7 L520.2,222.7 L520.5,220.5 L520.8,222.8 L521.0,220.3 L521.2,222.4 L521.5,219.2 L521.8,221.5 L522.0,220.9 L522.2,221.2 L522.5,220.6 L522.8,220.3 L523.0,222.0 L523.2,221.9 L523.5,219.4 L523.8,220.0 L524.0,222.0 L524.2,220.3 L524.5,221.6 L524.8,220.5 L525.0,222.0 L525.2,219.9 L525.5,219.9 L525.8,219.8 L526.0,221.6 L526.2,219.5 L526.5,219.4 L526.8,222.1 L527.0,221.2 L527.2,220.7 L527.5,220.3 L527.8,222.4 L528.0,219.5 L528.2,222.3 L528.5,221.4 L528.8,220.3 L529.0,221.6 L529.2,222.6 L529.5,222.8 L529.8,221.9 L530.0,222.0 L530.2,223.0 L530.5,222.1 L530.8,221.6 L531.0,218.1 L531.2,222.5 L531.5,219.5 L531.8,220.6 L532.0,222.5 L532.2,220.6 L532.5,220.9 L532.8,221.5 L533.0,222.4 L533.2,220.0 L533.5,221.3 L533.8,220.1 L534.0,221.4 L534.2,219.9 L534.5,220.4 L534.8,219.5 L535.0,221.0 L535.2,220.8 L535.5,222.0 L535.8,219.7 L536.0,221.6 L536.2,222.3 L536.5,219.5 L536.8,221.2 L537.0,221.3 L537.2,220.7 L537.5,221.7 L537.8,221.3 L538.0,221.9 L538.2,222.5 L538.5,221.4 L538.8,220.5 L539.0,220.5 L539.2,220.5 L539.5,219.5 L539.8,222.5 L540.0,220.7 L540.2,219.8 L540.5,220.1 L540.8,219.7 L541.0,220.5 L541.2,223.0 L541.5,220.2 L541.8,221.1 L542.0,222.6 L542.2,220.1 L542.5,220.4 L542.8,221.8 L543.0,220.6 L543.2,219.0 L543.5,221.9 L543.8,222.1 L544.0,222.5 L544.2,220.7 L544.5,220.1 L544.8,220.5 L545.0,221.9 L545.2,220.0 L545.5,220.0 L545.8,222.3 L546.0,223.7 L546.2,222.0 L546.5,218.1 L546.8,219.7 L547.0,221.4 L547.2,222.5 L547.5,222.9 L547.8,221.3 L548.0,217.6 L548.2,227.9 L548.5,227.9 L548.8,222.0 L549.0,219.3 L549.2,203.9 L549.5,225.9 L549.8,229.7 L550.0,235.4 L550.2,219.8 L550.5,206.0 L550.8,226.9 L551.0,206.6 L551.2,235.3 L551.5,204.9 L551.8,222.0 L552.0,214.7 L552.2,232.9 L552.5,225.8 L552.8,212.6 L553.0,220.7 L553.2,228.2 L553.5,234.8 L553.8,226.9 L554.0,223.2 L554.2,228.1 L554.5,233.8 L554.8,223.4 L555.0,232.8 L555.2,213.1 L555.5,232.5 L555.8,224.3 L556.0,231.6 L556.2,207.8 L556.5,231.2 L556.8,224.5 L557.0,207.0 L557.2,226.3 L557.5,214.6 L557.8,212.2 L558.0,231.2 L558.2,213.5 L558.5,235.6 L558.8,231.3 L559.0,223.7 L559.2,214.5 L559.5,215.3 L559.8,228.9 L560.0,202.0 L560.2,223.6 L560.5,230.6 L560.8,217.8 L561.0,214.6 L561.2,227.8 L561.5,210.5 L561.8,229.0 L562.0,225.8 L562.2,233.3 L562.5,214.8 L562.8,224.0 L563.0,217.5 L563.2,216.5 L563.5,225.9 L563.8,218.2 L564.0,222.9 L564.2,215.0 L564.5,208.5 L564.8,214.1 L565.0,220.7 L565.2,230.7 L565.5,203.6 L565.8,229.0 L566.0,206.1 L566.2,213.2 L566.5,220.2 L566.8,230.9 L567.0,224.0 L567.2,214.4 L567.5,217.8 L567.8,229.6 L568.0,214.7 L568.2,227.3 L568.5,229.4 L568.8,201.5 L569.0,222.7 L569.2,224.2 L569.5,233.7 L569.8,225.4 L570.0,229.8 L570.2,228.2 L570.5,209.7 L570.8,212.7 L571.0,204.6 L571.2,203.0 L571.5,230.9 L571.8,230.9 L572.0,238.4 L572.2,238.7 L572.5,211.0 L572.8,228.0 L573.0,230.3 L573.2,214.3 L573.5,233.0 L573.8,229.8 L574.0,205.8 L574.2,213.3 L574.5,230.3 L574.8,214.5 L575.0,223.3 L575.2,226.5 L575.5,211.2 L575.8,233.5 L576.0,228.3 L576.2,210.3 L576.5,209.5 L576.8,236.5 L577.0,204.9 L577.2,227.1 L577.5,218.5 L577.8,232.0 L578.0,240.1 L578.2,239.2 L578.5,220.2 L578.8,240.5 L579.0,210.6 L579.2,220.0 L579.5,217.6 L579.8,223.8 L580.0,219.6 L580.2,208.5 L580.5,202.5 L580.8,238.9 L581.0,238.4 L581.2,221.5 L581.5,224.0 L581.8,215.1 L582.0,225.5 L582.2,237.5 L582.5,227.8 L582.8,230.5 L583.0,225.0 L583.2,216.7 L583.5,228.6 L583.8,240.3 L584.0,213.3 L584.2,222.0 L584.5,234.8 L584.8,216.9 L585.0,208.3 L585.2,206.9 L585.5,226.9 L585.8,235.6 L586.0,223.8 L586.2,228.4 L586.5,222.5 L586.8,230.3 L587.0,213.4 L587.2,227.6 L587.5,236.1 L587.8,208.0 L588.0,233.7 L588.2,236.4 L588.5,231.2 L588.8,203.5 L589.0,204.9 L589.2,218.8 L589.5,206.5 L589.8,227.0 L590.0,231.4 L590.2,213.1 L590.5,216.0 L590.8,203.0 L591.0,211.5 L591.2,218.3 L591.5,222.7 L591.8,207.5 L592.0,227.3 L592.2,227.4 L592.5,213.7 L592.8,204.3 L593.0,206.8 L593.2,225.4 L593.5,232.7 L593.8,223.3 L594.0,208.6 L594.2,219.3 L594.5,244.3 L594.8,213.0 L595.0,234.7 L595.2,241.4 L595.5,220.5 L595.8,222.1 L596.0,227.1 L596.2,235.8 L596.5,200.2 L596.8,220.6 L597.0,212.8 L597.2,207.1 L597.5,228.6 L597.8,228.8 L598.0,215.0 L598.2,220.7 L598.5,229.6 L598.8,225.5 L599.0,220.0 L599.2,209.9 L599.5,228.9 L599.8,220.0 L600.0,220.7 L600.2,228.5 L600.5,217.6 L600.8,216.3 L601.0,235.3 L601.2,227.6 L601.5,232.7 L601.8,203.2 L602.0,210.7 L602.2,208.8 L602.5,213.0 L602.8,233.7 L603.0,200.7 L603.2,222.6 L603.5,208.3 L603.8,241.8 L604.0,224.4 L604.2,219.4 L604.5,217.3 L604.8,226.8 L605.0,231.7 L605.2,209.4 L605.5,226.6 L605.8,246.3 L606.0,222.8 L606.2,215.3 L606.5,227.7 L606.8,220.6 L607.0,232.0 L607.2,212.2 L607.5,228.0 L607.8,218.1 L608.0,219.9 L608.2,220.0 L608.5,221.9 L608.8,215.6 L609.0,227.8 L609.2,215.7 L609.5,225.4 L609.8,215.2 L610.0,224.8 L610.2,215.5 L610.5,219.3 L610.8,223.8 L611.0,215.9 L611.2,218.9 L611.5,226.7 L611.8,224.2 L612.0,224.4 L612.2,230.2 L612.5,216.4 L612.8,225.1 L613.0,216.6 L613.2,220.1 L613.5,220.1 L613.8,215.9 L614.0,217.2 L614.2,224.2 L614.5,220.1 L614.8,227.2 L615.0,217.4 L615.2,215.2 L615.5,215.9 L615.8,219.9 L616.0,226.8 L616.2,220.2 L616.5,228.7 L616.8,223.0 L617.0,225.1 L617.2,217.6 L617.5,217.8 L617.8,223.9 L618.0,221.5 L618.2,225.2 L618.5,225.4 L618.8,226.5 L619.0,217.4 L619.2,224.2 L619.5,223.0 L619.8,226.6 L620.0,218.2 L620.2,223.7 L620.5,224.4 L620.8,222.5 L621.0,217.7 L621.2,225.7 L621.5,215.9 L621.8,226.3 L622.0,218.0 L622.2,223.4 L622.5,220.8 L622.8,218.3 L623.0,215.5 L623.2,224.2 L623.5,225.3 L623.8,220.7 L624.0,222.2 L624.2,227.1 L624.5,219.9 L624.8,221.3 L625.0,225.4 L625.2,227.0 L625.5,223.4 L625.8,221.4 L626.0,219.8 L626.2,224.5 L626.5,224.3 L626.8,215.8 L627.0,217.8 L627.2,219.5 L627.5,224.0 L627.8,220.4 L628.0,219.6 L628.2,222.7 L628.5,218.1 L628.8,224.3 L629.0,220.8 L629.2,224.3 L629.5,219.9 L629.8,217.2 L630.0,216.6 L630.2,223.3 L630.5,220.7 L630.8,215.8 L631.0,223.4 L631.2,221.9 L631.5,217.0 L631.8,224.7 L632.0,217.3 L632.2,218.7 L632.5,220.8 L632.8,217.8 L633.0,221.5 L633.2,221.4 L633.5,222.9 L633.8,219.1 L634.0,224.1 L634.2,217.1 L634.5,223.3 L634.8,220.4 L635.0,219.5 L635.2,221.8 L635.5,220.8 L635.8,218.5 L636.0,222.2 L636.2,221.0 L636.5,222.4 L636.8,220.1 L637.0,223.8 L637.2,223.7 L637.5,224.5 L637.8,218.8 L638.0,217.9 L638.2,219.8 L638.5,224.4 L638.8,219.9 L639.0,221.1 L639.2,224.0 L639.5,220.0 L639.8,223.4 L640.0,219.6 L640.2,219.7 L640.5,225.0 L640.8,216.9 L641.0,223.1 L641.2,219.0 L641.5,221.7 L641.8,222.7 L642.0,217.6 L642.2,221.8 L642.5,223.9 L642.8,220.7 L643.0,222.7 L643.2,220.0 L643.5,218.6 L643.8,219.6 L644.0,221.8 L644.2,219.5 L644.5,220.6 L644.8,221.9 L645.0,219.7 L645.2,221.8 L645.5,218.1 L645.8,219.6 L646.0,219.1 L646.2,218.8 L646.5,218.4 L646.8,222.0 L647.0,218.2 L647.2,222.8 L647.5,224.3 L647.8,222.6 L648.0,220.1 L648.2,219.0 L648.5,219.6 L648.8,221.2 L649.0,222.9 L649.2,222.2 L649.5,218.5 L649.8,220.0 L650.0,220.2 L650.2,202.6 L650.5,205.7 L650.8,231.2 L651.0,230.5 L651.2,224.2 L651.5,212.6 L651.8,205.6 L652.0,224.4 L652.2,226.5 L652.5,234.2 L652.8,213.1 L653.0,216.4 L653.2,213.6 L653.5,232.0 L653.8,229.8 L654.0,204.5 L654.2,203.7 L654.5,196.6 L654.8,223.9 L655.0,203.2 L655.2,223.2 L655.5,218.2 L655.8,246.8 L656.0,228.5 L656.2,202.9 L656.5,233.4 L656.8,210.7 L657.0,214.0 L657.2,219.5 L657.5,226.7 L657.8,196.3 L658.0,225.7 L658.2,217.8 L658.5,212.3 L658.8,246.3 L659.0,228.4 L659.2,204.9 L659.5,222.8 L659.8,239.4 L660.0,221.2 L660.2,234.4 L660.5,230.8 L660.8,212.1 L661.0,212.9 L661.2,212.4 L661.5,238.9 L661.8,223.8 L662.0,221.7 L662.2,220.4 L662.5,234.4 L662.8,220.3 L663.0,213.5 L663.2,226.4 L663.5,236.6 L663.8,215.5 L664.0,237.6 L664.2,214.6 L664.5,227.7 L664.8,243.2 L665.0,227.9 L665.2,206.7 L665.5,238.0 L665.8,213.0 L666.0,207.4 L666.2,217.1 L666.5,235.5 L666.8,221.1 L667.0,229.6 L667.2,215.4 L667.5,206.0 L667.8,227.0 L668.0,204.6 L668.2,209.1 L668.5,218.5 L668.8,197.7 L669.0,201.3 L669.2,209.7 L669.5,230.1 L669.8,234.4 L670.0,206.8 L670.2,230.7 L670.5,227.7 L670.8,220.5 L671.0,211.5 L671.2,217.6 L671.5,214.8 L671.8,237.3 L672.0,220.9 L672.2,210.1 L672.5,240.7 L672.8,239.8 L673.0,236.3 L673.2,210.2 L673.5,231.0 L673.8,221.7 L674.0,214.8 L674.2,206.1 L674.5,197.3 L674.8,201.4 L675.0,224.0 L675.2,226.9 L675.5,217.6 L675.8,225.9 L676.0,220.7 L676.2,210.8 L676.5,203.9 L676.8,205.5 L677.0,223.8 L677.2,235.2 L677.5,212.5 L677.8,234.0 L678.0,216.9 L678.2,226.0 L678.5,211.9 L678.8,234.9 L679.0,228.6 L679.2,214.4 L679.5,197.4 L679.8,211.5 L680.0,209.4 L680.2,231.0 L680.5,228.8 L680.8,195.6 L681.0,217.6 L681.2,223.1 L681.5,206.6 L681.8,244.9 L682.0,224.0 L682.2,219.3 L682.5,212.6 L682.8,220.1 L683.0,208.2 L683.2,226.7 L683.5,213.5 L683.8,224.1 L684.0,226.4 L684.2,226.6 L684.5,221.2 L684.8,233.0 L685.0,233.4 L685.2,228.8 L685.5,223.9 L685.8,230.8 L686.0,210.0 L686.2,213.6 L686.5,229.9 L686.8,213.3 L687.0,215.1 L687.2,227.0 L687.5,219.3 L687.8,224.2 L688.0,212.8 L688.2,218.3 L688.5,224.6 L688.8,220.1 L689.0,214.0 L689.2,212.1 L689.5,218.1 L689.8,215.5 L690.0,225.5 L690.2,211.4 L690.5,226.5 L690.8,220.8 L691.0,213.6 L691.2,225.7 L691.5,223.1 L691.8,217.4 L692.0,216.5 L692.2,217.9 L692.5,224.9 L692.8,215.9 L693.0,223.2 L693.2,215.5 L693.5,217.5 L693.8,217.1 L694.0,221.9 L694.2,228.6 L694.5,214.9 L694.8,222.0 L695.0,215.9 L695.2,225.2 L695.5,223.1 L695.8,219.8 L696.0,217.3 L696.2,218.9 L696.5,218.7 L696.8,222.5 L697.0,217.1 L697.2,224.5 L697.5,216.4 L697.8,224.0 L698.0,224.5 L698.2,221.4 L698.5,219.9 L698.8,216.5 L699.0,218.4 L699.2,215.7 L699.5,222.6 L699.8,216.3 L700.0,224.0 L700.2,218.8 L700.5,222.3 L700.8,219.3 L701.0,221.6 L701.2,221.0 L701.5,223.2 L701.8,223.4 L702.0,223.1 L702.2,219.3 L702.5,218.7 L702.8,225.2 L703.0,222.5 L703.2,219.6 L703.5,222.9 L703.8,219.2 L704.0,222.8 L704.2,223.3 L704.5,221.1 L704.8,223.2 L705.0,224.2 L705.2,222.9 L705.5,219.3 L705.8,220.6 L706.0,223.0 L706.2,216.7 L706.5,222.9 L706.8,219.3 L707.0,222.4 L707.2,222.7 L707.5,219.5 L707.8,218.3 L708.0,222.3 L708.2,223.2 L708.5,219.2 L708.8,220.9 L709.0,219.3 L709.2,219.4 L709.5,220.8 L709.8,218.3 L710.0,218.4 L710.2,222.4 L710.5,224.0 L710.8,219.3 L711.0,219.3 L711.2,222.2 L711.5,221.9 L711.8,221.2 L712.0,217.5 L712.2,221.8 L712.5,217.7 L712.8,224.0 L713.0,219.8 L713.2,219.1 L713.5,221.5 L713.8,223.2 L714.0,222.8 L714.2,219.6 L714.5,224.3 L714.8,222.3 L715.0,221.5 L715.2,223.9 L715.5,219.3 L715.8,218.4 L716.0,220.3 L716.2,219.1 L716.5,219.7 L716.8,222.5 L717.0,218.1 L717.2,218.5 L717.5,220.8 L717.8,218.2 L718.0,218.1 L718.2,222.4 L718.5,218.0 L718.8,220.9 L719.0,223.1 L719.2,222.5 L719.5,222.4 L719.8,221.1 L720.0,222.8 L720.2,222.0 L720.5,218.8 L720.8,218.1 L721.0,219.7 L721.2,220.8 L721.5,223.4 L721.8,220.9 L722.0,222.0 L722.2,222.3 L722.5,220.2 L722.8,222.6 L723.0,217.9 L723.2,218.9 L723.5,220.9 L723.8,218.2 L724.0,221.9 L724.2,222.1 L724.5,220.9 L724.8,222.4 L725.0,223.0 L725.2,223.0 L725.5,220.8 L725.8,222.8 L726.0,223.7 L726.2,220.6 L726.5,221.7 L726.8,220.7 L727.0,219.4 L727.2,219.7 L727.5,221.5 L727.8,222.2 L728.0,222.2 L728.2,222.0 L728.5,222.9 L728.8,222.0 L729.0,219.8 L729.2,220.5 L729.5,220.9 L729.8,219.5 L730.0,222.0 L730.2,220.5 L730.5,222.3 L730.8,221.4 L731.0,220.6 L731.2,222.5 L731.5,222.0 L731.8,222.5 L732.0,219.4 L732.2,221.3 L732.5,221.1 L732.8,219.7 L733.0,222.2 L733.2,219.3 L733.5,221.1 L733.8,220.7 L734.0,221.6 L734.2,219.5 L734.5,220.9 L734.8,219.3 L735.0,221.8 L735.2,221.0 L735.5,222.7 L735.8,222.1 L736.0,222.4 L736.2,223.4 L736.5,220.7 L736.8,219.7 L737.0,219.8 L737.2,218.8 L737.5,223.3 L737.8,222.2 L738.0,221.6 L738.2,223.0 L738.5,222.1 L738.8,219.7 L739.0,222.0 L739.2,223.2 L739.5,221.2 L739.8,220.0 L740.0,219.4 L740.2,219.7 L740.5,222.0 L740.8,222.7 L741.0,223.5 L741.2,222.1 L741.5,222.3 L741.8,220.9 L742.0,218.6 L742.2,221.2 L742.5,223.0 L742.8,220.1 L743.0,220.1 L743.2,220.4 L743.5,222.7 L743.8,222.2 L744.0,219.4 L744.2,220.0 L744.5,221.9 L744.8,222.1 L745.0,221.0 L745.2,221.9 L745.5,220.0 L745.8,219.7 L746.0,220.9 L746.2,222.0 L746.5,222.3 L746.8,219.2 L747.0,219.1 L747.2,222.0 L747.5,222.1 L747.8,220.3 L748.0,219.4 L748.2,221.3 L748.5,222.9 L748.8,220.8 L749.0,221.4 L749.2,219.9 L749.5,220.5 L749.8,221.5 L750.0,223.1 L750.2,221.8 L750.5,222.3 L750.8,222.9 L751.0,221.8 L751.2,222.2 L751.5,222.0 L751.8,220.2 L752.0,221.3 L752.2,221.6 L752.5,219.8 L752.8,220.8 L753.0,221.9 L753.2,222.9 L753.5,220.5 L753.8,222.9 L754.0,219.1 L754.2,219.2 L754.5,222.7 L754.8,221.2 L755.0,219.8 L755.2,223.6 L755.5,219.4 L755.8,219.6 L756.0,218.6 L756.2,220.3 L756.5,221.1 L756.8,219.0 L757.0,221.6 L757.2,222.0 L757.5,221.1 L757.8,221.8 L758.0,219.1 L758.2,220.0 L758.5,222.5 L758.8,222.8 L759.0,221.6 L759.2,221.6 L759.5,220.6 L759.8,220.3 L760.0,220.7 L760.2,219.0 L760.5,219.1 L760.8,222.2 L761.0,222.6 L761.2,221.0 L761.5,219.2 L761.8,222.5 L762.0,221.9 L762.2,223.6 L762.5,224.2 L762.8,219.4 L763.0,221.1 L763.2,223.7 L763.5,220.1 L763.8,220.1 L764.0,218.6 L764.2,220.4 L764.5,222.4 L764.8,219.0 L765.0,218.1 L765.2,220.7 L765.5,226.2 L765.8,222.9 L766.0,222.3 L766.2,222.5 L766.5,222.0 L766.8,222.9 L767.0,221.4 L767.2,223.1 L767.5,222.3 L767.8,222.2 L768.0,222.8 L768.2,218.6 L768.5,221.0 L768.8,223.8 L769.0,217.8 L769.2,220.8 L769.5,221.9 L769.8,218.1 L770.0,218.2 L770.2,219.7 L770.5,219.3 L770.8,219.8 L771.0,217.7 L771.2,223.6 L771.5,219.7 L771.8,223.5 L772.0,222.7 L772.2,223.1 L772.5,222.6 L772.8,221.4 L773.0,218.5 L773.2,219.6 L773.5,218.9 L773.8,222.9 L774.0,218.4 L774.2,219.2 L774.5,221.4 L774.8,222.7 L775.0,222.8 L775.2,221.4 L775.5,222.8 L775.8,220.6 L776.0,223.0 L776.2,218.2 L776.5,220.3 L776.8,219.6 L777.0,223.6 L777.2,218.3 L777.5,219.5 L777.8,218.6 L778.0,221.7 L778.2,220.3 L778.5,220.1 L778.8,224.1 L779.0,221.7 L779.2,220.7 L779.5,220.7 L779.8,223.0 L780.0,224.4 L780.2,222.5 L780.5,219.1 L780.8,222.1 L781.0,221.6 L781.2,221.9 L781.5,222.5 L781.8,221.1 L782.0,217.9 L782.2,223.0 L782.5,220.2 L782.8,222.3 L783.0,221.6 L783.2,219.1 L783.5,220.2 L783.8,222.3 L784.0,221.8 L784.2,223.2 L784.5,222.6 L784.8,218.8 L785.0,217.8 L785.2,218.3 L785.5,218.3 L785.8,221.4 L786.0,222.9 L786.2,220.7 L786.5,218.6 L786.8,222.1 L787.0,221.5 L787.2,219.3 L787.5,221.2 L787.8,224.0 L788.0,223.5 L788.2,220.9 L788.5,224.3 L788.8,221.8 L789.0,222.1 L789.2,219.8 L789.5,222.9 L789.8,218.1 L790.0,223.5 L790.2,218.8 L790.5,223.3 L790.8,219.3 L791.0,223.6 L791.2,219.4 L791.5,219.7 L791.8,222.2 L792.0,222.8 L792.2,220.4 L792.5,221.0 L792.8,221.3 L793.0,218.6 L793.2,221.8 L793.5,221.0 L793.8,221.1 L794.0,221.4 L794.2,222.3 L794.5,222.6 L794.8,223.2 L795.0,223.9 L795.2,223.0 L795.5,218.2 L795.8,221.8 L796.0,223.4 L796.2,220.4 L796.5,224.2 L796.8,223.6 L797.0,223.6 L797.2,221.0 L797.5,219.3 L797.8,220.6 L798.0,219.1 L798.2,222.4 L798.5,221.7 L798.8,221.6 L799.0,223.9 L799.2,220.5 L799.5,222.4 L799.8,222.6 L800.0,219.4 L800.2,220.2 L800.5,222.9 L800.8,220.0 L801.0,222.0 L801.2,220.3 L801.5,222.4 L801.8,219.1 L802.0,221.9 L802.2,222.4 L802.5,220.1 L802.8,224.1 L803.0,219.8 L803.2,219.3 L803.5,224.3 L803.8,221.2 L804.0,221.8 L804.2,222.2 L804.5,220.5 L804.8,221.1 L805.0,222.6 L805.2,222.7 L805.5,221.1 L805.8,221.0 L806.0,221.6 L806.2,220.1 L806.5,218.2 L806.8,222.7 L807.0,218.9 L807.2,219.2 L807.5,222.4 L807.8,218.4 L808.0,220.4 L808.2,219.7 L808.5,223.5 L808.8,219.9 L809.0,219.7 L809.2,222.3 L809.5,222.3 L809.8,219.1 L810.0,218.9 L810.2,224.1 L810.5,220.5 L810.8,223.4 L811.0,219.4 L811.2,222.1 L811.5,223.4 L811.8,221.6 L812.0,222.9 L812.2,218.5 L812.5,223.8 L812.8,221.8 L813.0,220.4 L813.2,221.1 L813.5,224.6 L813.8,218.4 L814.0,222.1 L814.2,220.3 L814.5,219.8 L814.8,222.5 L815.0,220.2 L815.2,220.0 L815.5,218.2 L815.8,223.6 L816.0,222.5 L816.2,223.4 L816.5,222.8 L816.8,224.3 L817.0,220.3 L817.2,219.7 L817.5,223.1 L817.8,219.4 L818.0,221.2 L818.2,223.5 L818.5,222.8 L818.8,220.7 L819.0,222.7 L819.2,219.7 L819.5,220.3 L819.8,222.3 L820.0,218.4 L820.2,222.4 L820.5,217.5 L820.8,218.1 L821.0,218.3 L821.2,220.4 L821.5,217.6 L821.8,220.7 L822.0,223.8 L822.2,220.7 L822.5,222.8 L822.8,221.9 L823.0,221.6 L823.2,219.1 L823.5,219.1 L823.8,221.3 L824.0,220.3 L824.2,222.4 L824.5,223.4 L824.8,219.4 L825.0,219.0 L825.2,219.1 L825.5,223.5 L825.8,221.4 L826.0,218.7 L826.2,224.0 L826.5,218.9 L826.8,218.2 L827.0,221.5 L827.2,220.1 L827.5,221.9 L827.8,217.2 L828.0,219.2 L828.2,223.9 L828.5,220.5 L828.8,218.6 L829.0,220.6 L829.2,222.8 L829.5,220.8 L829.8,220.2 L830.0,221.3 L830.2,220.2 L830.5,220.4 L830.8,223.2 L831.0,219.4 L831.2,222.2 L831.5,217.6 L831.8,217.8 L832.0,220.5 L832.2,221.8 L832.5,218.9 L832.8,218.5 L833.0,219.6 L833.2,225.3 L833.5,219.6 L833.8,217.9 L834.0,222.2 L834.2,221.9 L834.5,222.8 L834.8,221.1 L835.0,225.1 L835.2,224.6 L835.5,223.8 L835.8,218.3 L836.0,221.7 L836.2,219.6 L836.5,225.3 L836.8,222.4 L837.0,216.8 L837.2,221.3 L837.5,218.8 L837.8,222.5 L838.0,219.4 L838.2,218.4 L838.5,222.7 L838.8,220.6 L839.0,218.8 L839.2,222.6 L839.5,220.6 L839.8,221.0 L840.0,223.9 L840.2,219.4 L840.5,218.1 L840.8,217.6 L841.0,220.1 L841.2,223.5 L841.5,220.4 L841.8,218.7 L842.0,218.5 L842.2,218.5 L842.5,219.1 L842.8,222.9 L843.0,219.0 L843.2,220.3 L843.5,219.7 L843.8,218.7 L844.0,219.1 L844.2,218.9 L844.5,222.4 L844.8,217.2 L845.0,222.1 L845.2,217.6 L845.5,223.6 L845.8,221.7 L846.0,217.9 L846.2,221.6 L846.5,223.4 L846.8,221.2 L847.0,217.5 L847.2,223.3 L847.5,216.2 L847.8,223.6 L848.0,223.6 L848.2,220.3 L848.5,218.4 L848.8,218.9 L849.0,220.7 L849.2,226.1 L849.5,218.3 L849.8,217.4 L850.0,222.9 L850.2,217.8 L850.5,219.7 L850.8,221.7 L851.0,219.4 L851.2,224.2 L851.5,222.6 L851.8,216.6 L852.0,223.5 L852.2,219.2 L852.5,221.1 L852.8,222.9 L853.0,217.2 L853.2,216.0 L853.5,222.9 L853.8,224.6 L854.0,218.6 L854.2,219.8 L854.5,218.3 L854.8,221.0 L855.0,224.2 L855.2,222.7 L855.5,225.1 L855.8,221.1 L856.0,224.7 L856.2,224.8 L856.5,224.5 L856.8,222.8 L857.0,221.7 L857.2,218.8 L857.5,216.7 L857.8,220.5 L858.0,218.7 L858.2,217.0 L858.5,219.4 L858.8,222.9 L859.0,218.4 L859.2,223.1 L859.5,220.4 L859.8,220.4 L860.0,219.0 L860.2,220.8 L860.5,217.7 L860.8,225.7 L861.0,219.0 L861.2,221.3 L861.5,223.3 L861.8,225.3 L862.0,224.7 L862.2,219.5 L862.5,221.4 L862.8,225.6 L863.0,218.4 L863.2,218.9 L863.5,217.9 L863.8,224.6 L864.0,226.1 L864.2,216.8 L864.5,222.9 L864.8,222.6 L865.0,223.2 L865.2,221.2 L865.5,219.5 L865.8,218.2 L866.0,219.6 L866.2,220.6 L866.5,219.0 L866.8,219.5 L867.0,225.2 L867.2,222.0 L867.5,226.4 L867.8,215.8 L868.0,216.7 L868.2,216.3 L868.5,221.5 L868.8,219.7 L869.0,223.1 L869.2,219.9 L869.5,219.9 L869.8,219.4 L870.0,216.1 L870.2,217.6 L870.5,218.5 L870.8,225.2 L871.0,218.0 L871.2,223.4 L871.5,222.0 L871.8,222.7 L872.0,221.4 L872.2,225.9 L872.5,218.9 L872.8,223.4 L873.0,221.3 L873.2,220.9 L873.5,223.2 L873.8,220.7 L874.0,223.9 L874.2,225.0 L874.5,223.8 L874.8,216.3 L875.0,222.2 L875.2,218.6 L875.5,220.8 L875.8,220.2 L876.0,223.0 L876.2,223.1 L876.5,225.2 L876.8,222.7 L877.0,219.1 L877.2,221.1 L877.5,216.6 L877.8,216.5 L878.0,221.4 L878.2,221.8 L878.5,216.5 L878.8,218.6 L879.0,225.1 L879.2,219.7 L879.5,222.7 L879.8,222.7 L880.0,223.7 L880.2,218.1 L880.5,222.8 L880.8,224.4 L881.0,218.9 L881.2,221.0 L881.5,218.6 L881.8,217.5 L882.0,219.5 L882.2,223.1 L882.5,218.0 L882.8,223.0 L883.0,223.5 L883.2,222.5 L883.5,224.1 L883.8,222.1 L884.0,218.4 L884.2,218.6 L884.5,222.9 L884.8,222.0 L885.0,222.7 L885.2,220.8 L885.5,220.1 L885.8,219.5 L886.0,221.4 L886.2,218.6 L886.5,220.8 L886.8,223.0 L887.0,217.3 L887.2,216.9 L887.5,219.5 L887.8,224.2 L888.0,218.9 L888.2,219.3 L888.5,222.5 L888.8,221.2 L889.0,221.5 L889.2,219.3 L889.5,218.3 L889.8,222.2 L890.0,218.5 L890.2,218.7 L890.5,224.1 L890.8,220.5 L891.0,218.0 L891.2,222.8 L891.5,220.9 L891.8,220.6 L892.0,218.7 L892.2,221.0 L892.5,221.7 L892.8,223.8 L893.0,218.2 L893.2,216.8 L893.5,219.0 L893.8,220.0 L894.0,220.2 L894.2,220.6 L894.5,218.7 L894.8,222.7 L895.0,221.0 L895.2,221.4 L895.5,217.7 L895.8,223.6 L896.0,221.6 L896.2,221.8 L896.5,222.7 L896.8,217.8 L897.0,219.6 L897.2,219.5 L897.5,222.0 L897.8,222.3 L898.0,221.4 L898.2,218.7 L898.5,220.8 L898.8,219.6 L899.0,223.0 L899.2,223.1 L899.5,218.4 L899.8,221.1 L900.0,222.6 L900.2,223.9 L900.5,219.7 L900.8,224.3 L901.0,219.2 L901.2,223.2 L901.5,218.1 L901.8,222.4 L902.0,221.5 L902.2,220.2 L902.5,219.7 L902.8,219.6 L903.0,223.1 L903.2,219.8 L903.5,223.6 L903.8,220.8 L904.0,219.3 L904.2,218.5 L904.5,218.9 L904.8,220.0 L905.0,217.9 L905.2,222.7 L905.5,220.9 L905.8,219.5 L906.0,222.6 L906.2,223.2 L906.5,220.3 L906.8,217.3 L907.0,222.5 L907.2,220.3 L907.5,222.2 L907.8,220.9 L908.0,218.1 L908.2,221.1 L908.5,223.9 L908.8,221.9 L909.0,222.0 L909.2,218.7 L909.5,218.9 L909.8,219.1 L910.0,222.4 L910.2,220.2 L910.5,223.9 L910.8,219.7 L911.0,219.3 L911.2,222.6 L911.5,219.0 L911.8,218.8 L912.0,218.2 L912.2,219.5 L912.5,220.2 L912.8,220.9 L913.0,222.2 L913.2,219.5 L913.5,219.8 L913.8,224.1 L914.0,218.6 L914.2,223.8 L914.5,224.3 L914.8,223.1 L915.0,219.4 L915.2,222.9 L915.5,222.3 L915.8,220.3 L916.0,223.7 L916.2,218.8 L916.5,221.5 L916.8,221.3 L917.0,219.2 L917.2,221.7 L917.5,223.7 L917.8,219.3 L918.0,220.9 L918.2,218.9 L918.5,224.1 L918.8,217.3 L919.0,221.7 L919.2,222.3 L919.5,221.4 L919.8,219.9 L920.0,218.3 L920.2,223.1 L920.5,221.9 L920.8,218.9 L921.0,220.8 L921.2,220.8 L921.5,224.7 L921.8,220.2 L922.0,217.3 L922.2,221.3 L922.5,222.9 L922.8,224.1 L923.0,223.3 L923.2,222.0 L923.5,223.8 L923.8,220.0 L924.0,221.2 L924.2,218.1 L924.5,217.1 L924.8,222.6 L925.0,218.8 L925.2,222.4 L925.5,219.8 L925.8,217.9 L926.0,218.6 L926.2,221.2 L926.5,220.5 L926.8,218.3 L927.0,220.1 L927.2,218.0 L927.5,225.1 L927.8,219.6 L928.0,219.0 L928.2,219.2 L928.5,224.0 L928.8,220.7 L929.0,222.8 L929.2,220.1 L929.5,223.7 L929.8,223.3 L930.0,217.3 L930.2,222.8 L930.5,222.8 L930.8,225.0 L931.0,217.7 L931.2,223.2 L931.5,222.6 L931.8,217.4 L932.0,216.6 L932.2,218.7 L932.5,220.8 L932.8,221.3 L933.0,217.9 L933.2,217.0 L933.5,216.9 L933.8,216.6 L934.0,222.1 L934.2,222.0 L934.5,216.6 L934.8,219.9 L935.0,223.4 L935.2,221.1 L935.5,220.1 L935.8,222.7 L936.0,216.4 L936.2,224.4 L936.5,216.7 L936.8,223.5 L937.0,221.2 L937.2,222.6 L937.5,218.1 L937.8,219.6 L938.0,224.7 L938.2,220.0 L938.5,216.8 L938.8,223.4 L939.0,219.3 L939.2,224.0 L939.5,219.5 L939.8,223.6 L940.0,220.8 L940.2,221.7 L940.5,218.4 L940.8,223.6 L941.0,222.1 L941.2,219.6 L941.5,221.6 L941.8,223.9 L942.0,222.2 L942.2,218.6 L942.5,224.2 L942.8,221.0 L943.0,225.2 L943.2,224.1 L943.5,220.2 L943.8,220.9 L944.0,217.7 L944.2,218.1 L944.5,217.7 L944.8,225.2 L945.0,222.9 L945.2,221.9 L945.5,222.7 L945.8,221.3 L946.0,220.2 L946.2,218.6 L946.5,222.9 L946.8,222.8 L947.0,219.2 L947.2,220.4 L947.5,222.9 L947.8,220.8 L948.0,220.1 L948.2,218.9 L948.5,218.6 L948.8,220.2 L949.0,223.6 L949.2,218.7 L949.5,222.6 L949.8,219.6 L950.0,222.6 L950.2,221.2 L950.5,218.7 L950.8,224.8 L951.0,217.0" fill="none" stroke="#ff6b2c" stroke-width="1" stroke-linejoin="bevel" opacity="0.92"/></g><rect x="365" y="175" width="586" height="91" fill="none" stroke="#6e6e6e" stroke-width="2"/><line x1="361" y1="174.5" x2="364" y2="174.5" stroke="#222"/><text x="358" y="178.0" font-size="10.5" text-anchor="end" fill="#222">0.2</text><line x1="361" y1="220.5" x2="364" y2="220.5" stroke="#222"/><text x="358" y="224.0" font-size="10.5" text-anchor="end" fill="#222">0</text><line x1="361" y1="266" x2="364" y2="266" stroke="#222"/><text x="358" y="269.5" font-size="10.5" text-anchor="end" fill="#222">-0.2</text><text x="650" y="301" font-size="10" text-anchor="middle" fill="#222">Time (minutes)</text><rect x="364.5" y="311.5" width="587" height="117" fill="#fff"/><line x1="410.8" y1="311.5" x2="410.8" y2="428.5" stroke="#d0d0d0"/><line x1="457.7" y1="311.5" x2="457.7" y2="428.5" stroke="#d0d0d0"/><line x1="504.7" y1="311.5" x2="504.7" y2="428.5" stroke="#d0d0d0"/><line x1="551.6" y1="311.5" x2="551.6" y2="428.5" stroke="#d0d0d0"/><line x1="598.6" y1="311.5" x2="598.6" y2="428.5" stroke="#d0d0d0"/><line x1="645.6" y1="311.5" x2="645.6" y2="428.5" stroke="#d0d0d0"/><line x1="692.5" y1="311.5" x2="692.5" y2="428.5" stroke="#d0d0d0"/><line x1="739.5" y1="311.5" x2="739.5" y2="428.5" stroke="#d0d0d0"/><line x1="786.4" y1="311.5" x2="786.4" y2="428.5" stroke="#d0d0d0"/><line x1="833.4" y1="311.5" x2="833.4" y2="428.5" stroke="#d0d0d0"/><line x1="880.4" y1="311.5" x2="880.4" y2="428.5" stroke="#d0d0d0"/><line x1="927.3" y1="311.5" x2="927.3" y2="428.5" stroke="#d0d0d0"/><line x1="364.5" y1="369.5" x2="951.5" y2="369.5" stroke="#d0d0d0"/><g clip-path="url(#c2)"><path d="M364.3,317.4 L365.0,322.7 L365.7,331.5 L366.4,337.9 L367.1,341.6 L367.8,344.5 L368.5,343.6 L369.2,344.7 L369.9,345.2 L370.6,344.4 L371.3,346.2 L372.0,348.6 L372.7,348.5 L373.4,350.0 L374.1,349.6 L374.8,350.0 L375.5,348.8 L376.2,349.5 L376.9,349.2 L377.7,348.8 L378.4,348.0 L379.1,347.8 L379.8,346.2 L380.5,346.1 L381.2,344.9 L381.9,345.6 L382.6,344.0 L383.3,343.4 L384.0,343.2 L384.7,345.7 L385.4,344.6 L386.1,344.9 L386.8,345.8 L387.5,346.2 L388.2,348.3 L388.9,347.7 L389.6,347.6 L390.3,347.3 L391.0,349.4 L391.7,349.3 L392.4,349.3 L393.2,352.0 L393.9,353.5 L394.6,355.2 L395.3,356.4 L396.0,360.2 L396.7,364.1 L397.4,366.6 L398.1,371.3 L398.8,374.5 L399.5,375.4 L400.2,375.1 L400.9,375.1 L401.6,377.4 L402.3,377.3 L403.0,376.1 L403.7,377.5 L404.4,376.7 L405.1,376.7 L405.8,378.2 L406.5,375.1 L407.2,375.0 L407.9,375.8 L408.6,374.9 L409.4,374.3 L410.1,375.7 L410.8,375.1 L411.5,374.5 L412.2,375.6 L412.9,378.0 L413.6,380.7 L414.3,377.7 L415.0,377.2 L415.7,375.6 L416.4,374.2 L417.1,374.9 L417.8,374.0 L418.5,374.6 L419.2,376.2 L419.9,376.3 L420.6,378.1 L421.3,380.4 L422.0,380.4 L422.7,378.2 L423.4,375.1 L424.1,374.6 L424.8,375.0 L425.6,374.1 L426.3,374.6 L427.0,376.0 L427.7,377.4 L428.4,378.0 L429.1,380.8 L429.8,383.7 L430.5,380.3 L431.2,377.3 L431.9,376.5 L432.6,375.7 L433.3,375.2 L434.0,376.9 L434.7,376.3 L435.4,376.9 L436.1,378.8 L436.8,382.9 L437.5,385.8 L438.2,381.7 L438.9,379.7 L439.6,377.8 L440.3,376.7 L441.0,377.0 L441.8,377.1 L442.5,377.1 L443.2,377.6 L443.9,379.9 L444.6,381.2 L445.3,386.5 L446.0,384.7 L446.7,381.5 L447.4,377.6 L448.1,378.6 L448.8,376.0 L449.5,376.2 L450.2,376.9 L450.9,376.3 L451.6,377.5 L452.3,378.5 L453.0,383.0 L453.7,384.1 L454.4,380.3 L455.1,377.0 L455.8,375.9 L456.5,375.6 L457.3,375.1 L458.0,375.4 L458.7,377.6 L459.4,377.4 L460.1,381.1 L460.8,384.1 L461.5,388.3 L462.2,382.8 L462.9,380.3 L463.6,378.3 L464.3,377.1 L465.0,377.3 L465.7,376.7 L466.4,377.5 L467.1,378.3 L467.8,381.1 L468.5,384.1 L469.2,388.0 L469.9,385.4 L470.6,382.1 L471.3,379.5 L472.0,379.9 L472.7,379.3 L473.5,379.8 L474.2,379.2 L474.9,380.3 L475.6,383.0 L476.3,384.8 L477.0,390.3 L477.7,389.3 L478.4,384.8 L479.1,382.4 L479.8,380.1 L480.5,380.3 L481.2,379.3 L481.9,379.2 L482.6,381.3 L483.3,381.6 L484.0,383.7 L484.7,389.9 L485.4,390.8 L486.1,385.0 L486.8,384.1 L487.5,383.1 L488.2,382.1 L488.9,382.9 L489.7,381.9 L490.4,382.7 L491.1,382.9 L491.8,386.0 L492.5,390.7 L493.2,394.5 L493.9,389.4 L494.6,384.5 L495.3,383.4 L496.0,382.0 L496.7,383.2 L497.4,382.6 L498.1,383.6 L498.8,384.0 L499.5,387.9 L500.2,389.7 L500.9,395.4 L501.6,393.7 L502.3,387.9 L503.0,384.5 L503.7,383.9 L504.4,383.7 L505.1,383.6 L505.9,382.3 L506.6,384.6 L507.3,385.3 L508.0,391.3 L508.7,395.3 L509.4,394.9 L510.1,391.1 L510.8,388.0 L511.5,385.2 L512.2,386.2 L512.9,384.9 L513.6,383.9 L514.3,386.3 L515.0,387.8 L515.7,390.6 L516.4,394.7 L517.1,396.5 L517.8,392.6 L518.5,389.6 L519.2,387.0 L519.9,386.7 L520.6,385.3 L521.4,386.6 L522.1,387.1 L522.8,387.1 L523.5,389.8 L524.2,394.7 L524.9,401.0 L525.6,396.1 L526.3,391.9 L527.0,389.8 L527.7,388.8 L528.4,388.9 L529.1,389.4 L529.8,389.8 L530.5,390.5 L531.2,392.9 L531.9,396.2 L532.6,402.2 L533.3,398.7 L534.0,395.4 L534.7,391.4 L535.4,389.9 L536.1,388.7 L536.8,388.9 L537.6,389.3 L538.3,390.0 L539.0,391.5 L539.7,394.6 L540.4,400.3 L541.1,400.9 L541.8,396.3 L542.5,393.4 L543.2,390.6 L543.9,388.9 L544.6,389.9 L545.3,388.9 L546.0,389.7 L546.7,392.6 L547.4,395.2 L548.1,399.0 L548.8,402.4 L549.5,397.4 L550.2,392.6 L550.9,391.6 L551.6,390.2 L552.3,391.4 L553.0,389.8 L553.8,391.5 L554.5,391.9 L555.2,395.6 L555.9,398.7 L556.6,405.4 L557.3,400.0 L558.0,395.6 L558.7,393.5 L559.4,392.7 L560.1,392.4 L560.8,393.2 L561.5,393.1 L562.2,392.1 L562.9,395.7 L563.6,398.5 L564.3,404.8 L565.0,403.7 L565.7,398.0 L566.4,395.1 L567.1,394.4 L567.8,393.6 L568.5,394.7 L569.2,394.0 L570.0,394.8 L570.7,397.2 L571.4,399.2 L572.1,404.4 L572.8,405.1 L573.5,401.0 L574.2,398.3 L574.9,396.7 L575.6,395.3 L576.3,394.9 L577.0,395.1 L577.7,395.3 L578.4,397.6 L579.1,401.2 L579.8,403.4 L580.5,407.8 L581.2,404.6 L581.9,399.0 L582.6,397.9 L583.3,396.0 L584.0,397.0 L584.7,397.0 L585.5,396.9 L586.2,398.3 L586.9,400.2 L587.6,404.3 L588.3,410.4 L589.0,405.9 L589.7,400.4 L590.4,397.5 L591.1,396.5 L591.8,396.0 L592.5,396.1 L593.2,395.8 L593.9,397.4 L594.6,399.1 L595.3,402.9 L596.0,407.8 L596.7,407.3 L597.4,401.6 L598.1,400.3 L598.8,397.9 L599.5,397.4 L600.2,397.5 L600.9,398.0 L601.7,398.5 L602.4,400.0 L603.1,402.9 L603.8,406.8 L604.5,409.8 L605.2,404.6 L605.9,401.0 L606.6,400.4 L607.3,396.7 L608.0,397.4 L608.7,397.7 L609.4,397.6 L610.1,398.8 L610.8,399.6 L611.5,403.8 L612.2,409.4 L612.9,403.6 L613.6,401.1 L614.3,398.0 L615.0,397.1 L615.7,397.1 L616.4,396.9 L617.1,397.5 L617.9,398.1 L618.6,400.8 L619.3,404.3 L620.0,409.9 L620.7,405.8 L621.4,401.5 L622.1,399.9 L622.8,398.4 L623.5,397.3 L624.2,397.7 L624.9,397.4 L625.6,400.0 L626.3,399.7 L627.0,404.8 L627.7,408.0 L628.4,408.2 L629.1,403.0 L629.8,399.5 L630.5,398.2 L631.2,397.2 L631.9,396.1 L632.6,395.5 L633.4,397.5 L634.1,398.4 L634.8,400.3 L635.5,404.3 L636.2,407.1 L636.9,402.0 L637.6,399.3 L638.3,396.0 L639.0,395.8 L639.7,395.1 L640.4,396.4 L641.1,396.9 L641.8,396.9 L642.5,399.6 L643.2,403.9 L643.9,408.1 L644.6,402.4 L645.3,399.8 L646.0,397.1 L646.7,395.7 L647.4,396.5 L648.1,395.9 L648.8,395.0 L649.6,397.3 L650.3,399.2 L651.0,404.0 L651.7,407.8 L652.4,405.4 L653.1,401.7 L653.8,398.8 L654.5,396.5 L655.2,396.9 L655.9,396.6 L656.6,397.7 L657.3,398.9 L658.0,398.5 L658.7,401.7 L659.4,406.3 L660.1,406.8 L660.8,402.2 L661.5,399.6 L662.2,398.5 L662.9,396.3 L663.6,396.0 L664.3,395.8 L665.0,397.9 L665.8,399.3 L666.5,400.3 L667.2,404.4 L667.9,408.6 L668.6,404.4 L669.3,401.0 L670.0,398.5 L670.7,398.0 L671.4,397.7 L672.1,397.2 L672.8,399.1 L673.5,399.0 L674.2,400.6 L674.9,404.7 L675.6,409.0 L676.3,405.5 L677.0,402.2 L677.7,398.3 L678.4,398.6 L679.1,399.0 L679.8,398.2 L680.5,397.7 L681.2,399.1 L682.0,401.7 L682.7,404.8 L683.4,409.8 L684.1,409.0 L684.8,405.1 L685.5,403.0 L686.2,400.7 L686.9,402.2 L687.6,401.9 L688.3,402.2 L689.0,402.1 L689.7,405.4 L690.4,407.2 L691.1,412.9 L691.8,413.4 L692.5,407.6 L693.2,404.5 L693.9,403.8 L694.6,402.2 L695.3,401.1 L696.0,401.1 L696.7,401.3 L697.5,401.9 L698.2,404.7 L698.9,408.4 L699.6,412.4 L700.3,408.3 L701.0,404.3 L701.7,403.5 L702.4,402.5 L703.1,402.9 L703.8,403.2 L704.5,403.8 L705.2,404.5 L705.9,406.5 L706.6,409.3 L707.3,414.3 L708.0,409.5 L708.7,405.8 L709.4,403.7 L710.1,401.7 L710.8,401.4 L711.5,400.4 L712.2,401.8 L712.9,401.3 L713.7,403.5 L714.4,406.3 L715.1,411.3 L715.8,409.5 L716.5,405.0 L717.2,401.8 L717.9,401.4 L718.6,400.6 L719.3,401.8 L720.0,402.8 L720.7,401.5 L721.4,403.9 L722.1,407.9 L722.8,412.9 L723.5,414.2 L724.2,409.8 L724.9,406.9 L725.6,405.1 L726.3,404.9 L727.0,404.1 L727.7,403.0 L728.4,403.8 L729.1,405.4 L729.9,407.1 L730.6,411.2 L731.3,415.2 L732.0,410.3 L732.7,407.5 L733.4,404.6 L734.1,403.0 L734.8,402.7 L735.5,402.9 L736.2,404.1 L736.9,403.6 L737.6,406.0 L738.3,408.4 L739.0,411.1 L739.7,409.4 L740.4,404.6 L741.1,401.8 L741.8,400.7 L742.5,402.2 L743.2,400.5 L743.9,401.5 L744.6,403.7 L745.4,405.6 L746.1,407.5 L746.8,413.1 L747.5,412.8 L748.2,409.0 L748.9,406.8 L749.6,404.4 L750.3,403.8 L751.0,404.8 L751.7,402.8 L752.4,404.1 L753.1,406.1 L753.8,407.8 L754.5,412.2 L755.2,414.1 L755.9,410.6 L756.6,407.0 L757.3,405.9 L758.0,405.1 L758.7,404.2 L759.4,403.9 L760.1,404.5 L760.8,405.4 L761.6,406.9 L762.3,411.9 L763.0,416.3 L763.7,412.0 L764.4,407.3 L765.1,406.5 L765.8,406.2 L766.5,405.0 L767.2,403.7 L767.9,404.7 L768.6,405.4 L769.3,407.3 L770.0,410.2 L770.7,415.0 L771.4,412.1 L772.1,408.7 L772.8,405.7 L773.5,404.9 L774.2,405.1 L774.9,404.3 L775.6,405.3 L776.3,405.1 L777.0,407.2 L777.8,410.2 L778.5,415.4 L779.2,414.5 L779.9,411.6 L780.6,407.0 L781.3,406.0 L782.0,405.8 L782.7,405.4 L783.4,404.1 L784.1,404.2 L784.8,406.6 L785.5,407.6 L786.2,412.5 L786.9,414.7 L787.6,410.6 L788.3,409.0 L789.0,406.8 L789.7,405.6 L790.4,404.2 L791.1,405.3 L791.8,405.5 L792.5,406.5 L793.2,409.5 L794.0,411.1 L794.7,417.0 L795.4,412.9 L796.1,408.9 L796.8,408.2 L797.5,405.3 L798.2,405.8 L798.9,405.8 L799.6,404.7 L800.3,406.0 L801.0,408.1 L801.7,412.4 L802.4,417.0 L803.1,415.4 L803.8,411.4 L804.5,407.4 L805.2,407.6 L805.9,406.7 L806.6,407.6 L807.3,407.8 L808.0,408.9 L808.7,409.3 L809.5,412.0 L810.2,414.8 L810.9,416.2 L811.6,411.0 L812.3,409.1 L813.0,405.9 L813.7,405.6 L814.4,404.9 L815.1,405.1 L815.8,406.0 L816.5,406.6 L817.2,409.6 L817.9,412.6 L818.6,417.7 L819.3,412.2 L820.0,410.2 L820.7,409.0 L821.4,405.4 L822.1,406.1 L822.8,406.5 L823.5,407.5 L824.2,407.2 L824.9,409.5 L825.7,412.0 L826.4,417.1 L827.1,412.6 L827.8,410.2 L828.5,405.6 L829.2,405.2 L829.9,407.2 L830.6,406.3 L831.3,405.9 L832.0,408.6 L832.7,409.8 L833.4,412.9 L834.1,416.3 L834.8,416.3 L835.5,412.5 L836.2,408.8 L836.9,408.9 L837.6,408.1 L838.3,408.9 L839.0,409.0 L839.7,408.2 L840.4,409.4 L841.1,412.2 L841.9,416.2 L842.6,417.0 L843.3,413.0 L844.0,410.6 L844.7,408.8 L845.4,408.7 L846.1,408.1 L846.8,407.5 L847.5,407.4 L848.2,410.1 L848.9,411.6 L849.6,415.0 L850.3,418.9 L851.0,413.6 L851.7,411.0 L852.4,407.6 L853.1,408.0 L853.8,407.4 L854.5,409.0 L855.2,408.3 L855.9,408.6 L856.6,410.6 L857.3,414.0 L858.1,417.4 L858.8,414.9 L859.5,411.2 L860.2,410.6 L860.9,407.9 L861.6,406.1 L862.3,407.7 L863.0,408.8 L863.7,407.0 L864.4,411.2 L865.1,411.7 L865.8,416.4 L866.5,415.2 L867.2,411.6 L867.9,408.4 L868.6,407.2 L869.3,406.2 L870.0,408.3 L870.7,407.0 L871.4,408.5 L872.1,409.8 L872.8,411.8 L873.6,416.1 L874.3,418.3 L875.0,414.0 L875.7,411.5 L876.4,409.9 L877.1,408.6 L877.8,408.4 L878.5,408.7 L879.2,409.6 L879.9,411.2 L880.6,413.2 L881.3,415.7 L882.0,420.4 L882.7,415.2 L883.4,412.3 L884.1,409.5 L884.8,408.7 L885.5,408.0 L886.2,408.2 L886.9,409.7 L887.6,408.7 L888.3,411.3 L889.0,414.1 L889.8,419.3 L890.5,417.8 L891.2,412.8 L891.9,408.9 L892.6,409.7 L893.3,409.2 L894.0,407.7 L894.7,408.7 L895.4,409.5 L896.1,409.6 L896.8,414.2 L897.5,418.0 L898.2,418.2 L898.9,413.4 L899.6,410.8 L900.3,409.1 L901.0,408.9 L901.7,407.5 L902.4,408.7 L903.1,408.1 L903.8,407.5 L904.5,412.1 L905.2,414.7 L906.0,417.0 L906.7,413.4 L907.4,409.3 L908.1,409.0 L908.8,406.7 L909.5,407.6 L910.2,409.2 L910.9,409.4 L911.6,409.4 L912.3,411.1 L913.0,415.6 L913.7,419.5 L914.4,415.9 L915.1,412.9 L915.8,409.8 L916.5,410.1 L917.2,408.1 L917.9,410.4 L918.6,408.7 L919.3,410.1 L920.0,411.9 L920.7,415.7 L921.5,419.9 L922.2,418.2 L922.9,414.7 L923.6,412.1 L924.3,410.4 L925.0,408.7 L925.7,408.3 L926.4,408.2 L927.1,410.1 L927.8,411.2 L928.5,413.8 L929.2,417.7 L929.9,418.2 L930.6,413.7 L931.3,410.4 L932.0,408.5 L932.7,409.6 L933.4,409.1 L934.1,407.6 L934.8,408.4 L935.5,409.8 L936.2,412.7 L936.9,414.7 L937.7,418.4 L938.4,414.7 L939.1,409.8 L939.8,408.7 L940.5,408.3 L941.2,407.8 L941.9,409.7 L942.6,409.2 L943.3,409.7 L944.0,411.0 L944.7,415.3 L945.4,419.5 L946.1,415.7 L946.8,412.4 L947.5,409.7 L948.2,409.6 L948.9,409.9 L949.6,410.1 L950.3,410.0" fill="none" stroke="#7db34a" stroke-width="1.4" opacity="0.9"/><path d="M364.3,371.3 L365.0,376.0 L365.7,383.5 L366.4,391.1 L367.1,394.2 L367.8,397.0 L368.5,398.6 L369.2,399.2 L369.9,399.3 L370.6,402.0 L371.3,400.5 L372.0,400.8 L372.7,402.0 L373.4,401.2 L374.1,401.2 L374.8,402.1 L375.5,400.4 L376.2,401.6 L376.9,401.4 L377.7,400.6 L378.4,399.5 L379.1,399.2 L379.8,397.5 L380.5,398.4 L381.2,398.3 L381.9,398.2 L382.6,396.9 L383.3,395.4 L384.0,393.9 L384.7,393.2 L385.4,392.0 L386.1,391.5 L386.8,389.4 L387.5,388.0 L388.2,387.6 L388.9,386.9 L389.6,386.8 L390.3,389.7 L391.0,385.1 L391.7,385.0 L392.4,385.8 L393.2,384.8 L393.9,384.4 L394.6,384.5 L395.3,382.0 L396.0,383.0 L396.7,381.6 L397.4,380.0 L398.1,381.2 L398.8,378.5 L399.5,378.4 L400.2,378.6 L400.9,381.5 L401.6,376.5 L402.3,371.4 L403.0,367.5 L403.7,361.5 L404.4,357.8 L405.1,352.3 L405.8,346.8 L406.5,341.3 L407.2,338.6 L407.9,334.6 L408.6,334.6 L409.4,333.9 L410.1,332.5 L410.8,332.2 L411.5,331.2 L412.2,330.6 L412.9,332.0 L413.6,333.7 L414.3,330.3 L415.0,329.9 L415.7,330.6 L416.4,330.9 L417.1,331.1 L417.8,331.7 L418.5,331.0 L419.2,329.8 L419.9,332.5 L420.6,331.9 L421.3,331.8 L422.0,332.3 L422.7,330.1 L423.4,331.0 L424.1,330.9 L424.8,337.0 L425.6,330.3 L426.3,331.2 L427.0,333.0 L427.7,332.7 L428.4,332.3 L429.1,334.5 L429.8,332.2 L430.5,333.7 L431.2,333.1 L431.9,333.6 L432.6,332.8 L433.3,332.2 L434.0,333.0 L434.7,331.9 L435.4,333.5 L436.1,333.0 L436.8,334.2 L437.5,333.1 L438.2,332.9 L438.9,333.7 L439.6,334.3 L440.3,331.5 L441.0,336.8 L441.8,333.1 L442.5,331.1 L443.2,331.2 L443.9,332.1 L444.6,330.8 L445.3,331.0 L446.0,333.1 L446.7,331.5 L447.4,332.0 L448.1,331.3 L448.8,332.5 L449.5,332.5 L450.2,334.5 L450.9,333.7 L451.6,331.2 L452.3,333.2 L453.0,332.0 L453.7,331.2 L454.4,332.3 L455.1,332.4 L455.8,332.1 L456.5,332.0 L457.3,333.2 L458.0,334.4 L458.7,334.2 L459.4,333.8 L460.1,334.8 L460.8,332.7 L461.5,333.7 L462.2,332.2 L462.9,332.5 L463.6,331.5 L464.3,332.7 L465.0,332.6 L465.7,336.9 L466.4,334.1 L467.1,334.5 L467.8,335.4 L468.5,335.0 L469.2,333.8 L469.9,337.4 L470.6,332.0 L471.3,332.7 L472.0,334.1 L472.7,333.8 L473.5,332.8 L474.2,332.2 L474.9,332.4 L475.6,332.7 L476.3,331.6 L477.0,333.2 L477.7,335.7 L478.4,336.4 L479.1,336.0 L479.8,335.6 L480.5,335.3 L481.2,334.8 L481.9,334.3 L482.6,333.4 L483.3,335.1 L484.0,334.8 L484.7,335.2 L485.4,336.9 L486.1,336.2 L486.8,335.3 L487.5,336.4 L488.2,334.9 L488.9,337.0 L489.7,341.2 L490.4,335.9 L491.1,336.1 L491.8,336.4 L492.5,334.4 L493.2,333.5 L493.9,335.6 L494.6,333.7 L495.3,334.8 L496.0,333.1 L496.7,334.1 L497.4,333.5 L498.1,334.8 L498.8,334.5 L499.5,334.6 L500.2,336.8 L500.9,336.3 L501.6,334.9 L502.3,336.7 L503.0,336.5 L503.7,336.4 L504.4,337.0 L505.1,337.0 L505.9,337.3 L506.6,336.4 L507.3,335.3 L508.0,336.2 L508.7,337.2 L509.4,337.7 L510.1,337.2 L510.8,337.4 L511.5,337.1 L512.2,338.2 L512.9,337.8 L513.6,338.4 L514.3,338.1 L515.0,339.5 L515.7,340.3 L516.4,338.8 L517.1,340.5 L517.8,338.2 L518.5,339.6 L519.2,339.9 L519.9,342.4 L520.6,340.9 L521.4,342.1 L522.1,339.8 L522.8,341.4 L523.5,341.6 L524.2,341.0 L524.9,338.8 L525.6,341.0 L526.3,341.4 L527.0,341.6 L527.7,340.5 L528.4,338.3 L529.1,338.9 L529.8,339.2 L530.5,337.5 L531.2,338.5 L531.9,338.0 L532.6,339.1 L533.3,340.5 L534.0,340.2 L534.7,343.8 L535.4,342.2 L536.1,345.5 L536.8,341.3 L537.6,341.4 L538.3,340.4 L539.0,338.8 L539.7,338.2 L540.4,339.3 L541.1,339.0 L541.8,337.2 L542.5,340.7 L543.2,339.8 L543.9,340.6 L544.6,341.7 L545.3,340.9 L546.0,342.9 L546.7,342.5 L547.4,342.5 L548.1,342.8 L548.8,343.5 L549.5,342.9 L550.2,343.0 L550.9,341.8 L551.6,342.4 L552.3,342.1 L553.0,342.9 L553.8,343.3 L554.5,345.8 L555.2,343.8 L555.9,343.0 L556.6,342.6 L557.3,341.4 L558.0,341.6 L558.7,340.3 L559.4,340.7 L560.1,340.2 L560.8,340.3 L561.5,339.8 L562.2,339.0 L562.9,343.7 L563.6,342.1 L564.3,341.3 L565.0,341.9 L565.7,342.0 L566.4,342.4 L567.1,345.7 L567.8,343.0 L568.5,344.1 L569.2,344.2 L570.0,343.3 L570.7,343.1 L571.4,343.5 L572.1,343.8 L572.8,343.7 L573.5,344.8 L574.2,343.3 L574.9,344.6 L575.6,345.5 L576.3,344.9 L577.0,343.1 L577.7,341.3 L578.4,344.0 L579.1,345.9 L579.8,342.5 L580.5,344.0 L581.2,342.8 L581.9,343.3 L582.6,342.5 L583.3,343.6 L584.0,343.0 L584.7,342.9 L585.5,344.0 L586.2,343.2 L586.9,341.7 L587.6,343.4 L588.3,343.5 L589.0,342.3 L589.7,343.0 L590.4,343.7 L591.1,343.8 L591.8,344.5 L592.5,345.3 L593.2,344.6 L593.9,350.8 L594.6,344.8 L595.3,345.1 L596.0,347.1 L596.7,347.5 L597.4,345.5 L598.1,345.1 L598.8,344.2 L599.5,345.8 L600.2,345.1 L600.9,344.7 L601.7,346.6 L602.4,349.2 L603.1,356.6 L603.8,373.4 L604.5,375.2 L605.2,378.4 L605.9,381.4 L606.6,384.7 L607.3,387.4 L608.0,388.5 L608.7,389.9 L609.4,390.0 L610.1,392.2 L610.8,392.8 L611.5,391.0 L612.2,389.9 L612.9,393.1 L613.6,392.7 L614.3,392.1 L615.0,391.9 L615.7,393.0 L616.4,391.4 L617.1,391.1 L617.9,389.7 L618.6,391.3 L619.3,391.4 L620.0,392.7 L620.7,390.6 L621.4,392.6 L622.1,391.1 L622.8,393.4 L623.5,393.7 L624.2,394.3 L624.9,395.2 L625.6,394.1 L626.3,394.8 L627.0,396.8 L627.7,395.3 L628.4,395.4 L629.1,395.1 L629.8,394.7 L630.5,393.2 L631.2,394.6 L631.9,395.3 L632.6,394.1 L633.4,395.4 L634.1,393.4 L634.8,397.3 L635.5,395.9 L636.2,393.5 L636.9,394.2 L637.6,397.3 L638.3,395.8 L639.0,396.9 L639.7,395.4 L640.4,396.2 L641.1,397.4 L641.8,397.6 L642.5,396.5 L643.2,396.5 L643.9,395.2 L644.6,394.5 L645.3,394.5 L646.0,393.7 L646.7,396.9 L647.4,395.3 L648.1,397.5 L648.8,397.7 L649.6,400.1 L650.3,400.4 L651.0,400.6 L651.7,400.5 L652.4,402.7 L653.1,401.8 L653.8,400.1 L654.5,402.6 L655.2,400.3 L655.9,401.1 L656.6,398.4 L657.3,399.0 L658.0,399.3 L658.7,400.2 L659.4,402.3 L660.1,401.6 L660.8,401.8 L661.5,401.5 L662.2,401.6 L662.9,402.5 L663.6,398.9 L664.3,405.4 L665.0,399.9 L665.8,402.4 L666.5,403.3 L667.2,403.6 L667.9,399.7 L668.6,401.3 L669.3,400.2 L670.0,399.6 L670.7,400.8 L671.4,400.9 L672.1,400.5 L672.8,398.9 L673.5,401.7 L674.2,406.3 L674.9,403.9 L675.6,403.5 L676.3,403.7 L677.0,406.2 L677.7,406.3 L678.4,406.4 L679.1,403.1 L679.8,403.7 L680.5,405.4 L681.2,404.7 L682.0,406.5 L682.7,404.1 L683.4,406.2 L684.1,406.4 L684.8,408.1 L685.5,407.7 L686.2,406.2 L686.9,407.3 L687.6,408.6 L688.3,406.2 L689.0,408.1 L689.7,406.5 L690.4,406.5 L691.1,404.7 L691.8,405.7 L692.5,406.0 L693.2,408.3 L693.9,407.5 L694.6,408.5 L695.3,408.0 L696.0,409.8 L696.7,406.6 L697.5,406.8 L698.2,411.2 L698.9,407.2 L699.6,409.6 L700.3,409.3 L701.0,408.6 L701.7,409.1 L702.4,407.6 L703.1,412.9 L703.8,411.0 L704.5,410.3 L705.2,411.3 L705.9,406.5 L706.6,409.5 L707.3,411.2 L708.0,409.3 L708.7,408.0 L709.4,409.7 L710.1,408.8 L710.8,410.6 L711.5,408.3 L712.2,409.0 L712.9,409.3 L713.7,409.6 L714.4,408.9 L715.1,408.5 L715.8,408.9 L716.5,409.2 L717.2,408.4 L717.9,407.6 L718.6,407.3 L719.3,408.2 L720.0,408.7 L720.7,409.8 L721.4,408.4 L722.1,409.3 L722.8,407.1 L723.5,406.6 L724.2,406.7 L724.9,407.1 L725.6,404.2 L726.3,408.3 L727.0,405.2 L727.7,406.4 L728.4,406.2 L729.1,407.0 L729.9,407.5 L730.6,408.2 L731.3,407.6 L732.0,408.0 L732.7,408.2 L733.4,408.0 L734.1,409.2 L734.8,408.8 L735.5,407.2 L736.2,407.9 L736.9,409.5 L737.6,410.4 L738.3,408.2 L739.0,409.7 L739.7,411.4 L740.4,412.0 L741.1,409.8 L741.8,411.5 L742.5,411.0 L743.2,411.0 L743.9,410.7 L744.6,412.1 L745.4,410.6 L746.1,410.7 L746.8,408.0 L747.5,410.0 L748.2,409.3 L748.9,409.9 L749.6,409.1 L750.3,409.7 L751.0,410.9 L751.7,408.9 L752.4,408.5 L753.1,406.6 L753.8,408.0 L754.5,409.9 L755.2,412.2 L755.9,410.0 L756.6,408.4 L757.3,411.2 L758.0,409.3 L758.7,408.4 L759.4,412.2 L760.1,413.1 L760.8,412.2 L761.6,409.9 L762.3,409.6 L763.0,409.6 L763.7,409.0 L764.4,408.7 L765.1,409.8 L765.8,410.6 L766.5,408.5 L767.2,410.3 L767.9,411.0 L768.6,409.7 L769.3,409.0 L770.0,412.1 L770.7,412.6 L771.4,411.5 L772.1,413.3 L772.8,411.1 L773.5,408.3 L774.2,411.9 L774.9,407.7 L775.6,407.4 L776.3,406.1 L777.0,408.3 L777.8,409.4 L778.5,406.5 L779.2,408.7 L779.9,408.1 L780.6,411.0 L781.3,411.3 L782.0,411.5 L782.7,409.7 L783.4,410.2 L784.1,409.5 L784.8,409.4 L785.5,410.6 L786.2,411.7 L786.9,411.5 L787.6,409.8 L788.3,410.4 L789.0,410.7 L789.7,410.0 L790.4,407.7 L791.1,408.6 L791.8,410.2 L792.5,408.8 L793.2,408.5 L794.0,408.9 L794.7,410.7 L795.4,412.1 L796.1,411.1 L796.8,410.9 L797.5,411.9 L798.2,410.6 L798.9,410.3 L799.6,410.5 L800.3,410.5 L801.0,407.0 L801.7,407.4 L802.4,407.6 L803.1,409.0 L803.8,407.9 L804.5,412.3 L805.2,414.7 L805.9,413.1 L806.6,414.8 L807.3,410.2 L808.0,414.6 L808.7,414.6 L809.5,415.3 L810.2,411.2 L810.9,410.8 L811.6,412.6 L812.3,410.4 L813.0,411.4 L813.7,411.3 L814.4,412.3 L815.1,411.5 L815.8,413.6 L816.5,411.4 L817.2,409.0 L817.9,411.2 L818.6,410.5 L819.3,409.9 L820.0,410.0 L820.7,411.5 L821.4,412.5 L822.1,408.9 L822.8,414.5 L823.5,414.7 L824.2,411.9 L824.9,414.3 L825.7,413.6 L826.4,418.1 L827.1,415.5 L827.8,415.9 L828.5,413.4 L829.2,414.9 L829.9,411.2 L830.6,413.9 L831.3,411.2 L832.0,411.0 L832.7,409.5 L833.4,412.4 L834.1,411.6 L834.8,409.1 L835.5,412.0 L836.2,412.9 L836.9,412.0 L837.6,411.0 L838.3,414.6 L839.0,412.0 L839.7,416.7 L840.4,412.8 L841.1,412.2 L841.9,411.7 L842.6,413.9 L843.3,411.4 L844.0,414.1 L844.7,407.9 L845.4,410.5 L846.1,410.1 L846.8,411.6 L847.5,412.0 L848.2,410.6 L848.9,409.3 L849.6,411.8 L850.3,411.1 L851.0,410.9 L851.7,411.8 L852.4,412.8 L853.1,411.8 L853.8,412.8 L854.5,414.7 L855.2,414.1 L855.9,413.9 L856.6,412.1 L857.3,413.6 L858.1,412.0 L858.8,414.7 L859.5,411.1 L860.2,411.9 L860.9,413.3 L861.6,415.8 L862.3,411.7 L863.0,409.9 L863.7,413.3 L864.4,413.4 L865.1,411.3 L865.8,411.5 L866.5,409.6 L867.2,413.9 L867.9,412.9 L868.6,411.9 L869.3,414.3 L870.0,413.5 L870.7,415.1 L871.4,414.1 L872.1,415.0 L872.8,413.5 L873.6,413.1 L874.3,414.4 L875.0,413.9 L875.7,410.2 L876.4,413.4 L877.1,412.4 L877.8,411.3 L878.5,413.0 L879.2,414.0 L879.9,413.5 L880.6,411.2 L881.3,412.9 L882.0,412.5 L882.7,416.1 L883.4,411.3 L884.1,413.4 L884.8,416.4 L885.5,414.9 L886.2,415.9 L886.9,417.3 L887.6,415.5 L888.3,417.4 L889.0,415.3 L889.8,416.0 L890.5,412.3 L891.2,414.8 L891.9,413.6 L892.6,416.2 L893.3,414.4 L894.0,414.7 L894.7,414.8 L895.4,415.7 L896.1,413.9 L896.8,419.7 L897.5,416.2 L898.2,417.4 L898.9,414.6 L899.6,418.5 L900.3,418.3 L901.0,416.9 L901.7,417.5 L902.4,416.3 L903.1,416.1 L903.8,414.0 L904.5,414.2 L905.2,411.6 L906.0,411.8 L906.7,410.0 L907.4,412.2 L908.1,411.3 L908.8,409.7 L909.5,412.0 L910.2,410.3 L910.9,411.3 L911.6,413.0 L912.3,411.7 L913.0,412.4 L913.7,414.2 L914.4,414.6 L915.1,412.9 L915.8,413.3 L916.5,415.1 L917.2,413.9 L917.9,415.1 L918.6,414.9 L919.3,414.5 L920.0,414.0 L920.7,416.8 L921.5,417.0 L922.2,414.8 L922.9,416.9 L923.6,415.9 L924.3,418.0 L925.0,414.7 L925.7,422.3 L926.4,418.7 L927.1,419.4 L927.8,418.2 L928.5,416.0 L929.2,417.1 L929.9,414.3 L930.6,413.7 L931.3,413.8 L932.0,412.0 L932.7,414.6 L933.4,415.4 L934.1,410.5 L934.8,411.4 L935.5,417.7 L936.2,412.6 L936.9,414.6 L937.7,415.9 L938.4,417.1 L939.1,417.7 L939.8,422.3 L940.5,418.7 L941.2,416.8 L941.9,418.2 L942.6,421.2 L943.3,415.2 L944.0,418.2 L944.7,418.6 L945.4,418.0 L946.1,415.5 L946.8,417.0 L947.5,420.2 L948.2,419.7 L948.9,417.9 L949.6,419.7 L950.3,419.3" fill="none" stroke="#ff7035" stroke-width="1.2" opacity="0.9"/></g><rect x="364.5" y="311.5" width="587" height="117" fill="none" stroke="#1a1a1a" stroke-width="1"/><line x1="363.8" y1="428.5" x2="363.8" y2="432" stroke="#222"/><text x="363.8" y="441" font-size="10" text-anchor="middle" fill="#222">0</text><line x1="410.8" y1="428.5" x2="410.8" y2="432" stroke="#222"/><text x="410.8" y="441" font-size="10" text-anchor="middle" fill="#222">2</text><line x1="457.7" y1="428.5" x2="457.7" y2="432" stroke="#222"/><text x="457.7" y="441" font-size="10" text-anchor="middle" fill="#222">4</text><line x1="504.7" y1="428.5" x2="504.7" y2="432" stroke="#222"/><text x="504.7" y="441" font-size="10" text-anchor="middle" fill="#222">6</text><line x1="551.6" y1="428.5" x2="551.6" y2="432" stroke="#222"/><text x="551.6" y="441" font-size="10" text-anchor="middle" fill="#222">8</text><line x1="598.6" y1="428.5" x2="598.6" y2="432" stroke="#222"/><text x="598.6" y="441" font-size="10" text-anchor="middle" fill="#222">10</text><line x1="645.6" y1="428.5" x2="645.6" y2="432" stroke="#222"/><text x="645.6" y="441" font-size="10" text-anchor="middle" fill="#222">12</text><line x1="692.5" y1="428.5" x2="692.5" y2="432" stroke="#222"/><text x="692.5" y="441" font-size="10" text-anchor="middle" fill="#222">14</text><line x1="739.5" y1="428.5" x2="739.5" y2="432" stroke="#222"/><text x="739.5" y="441" font-size="10" text-anchor="middle" fill="#222">16</text><line x1="786.4" y1="428.5" x2="786.4" y2="432" stroke="#222"/><text x="786.4" y="441" font-size="10" text-anchor="middle" fill="#222">18</text><line x1="833.4" y1="428.5" x2="833.4" y2="432" stroke="#222"/><text x="833.4" y="441" font-size="10" text-anchor="middle" fill="#222">20</text><line x1="880.4" y1="428.5" x2="880.4" y2="432" stroke="#222"/><text x="880.4" y="441" font-size="10" text-anchor="middle" fill="#222">22</text><line x1="927.3" y1="428.5" x2="927.3" y2="432" stroke="#222"/><text x="927.3" y="441" font-size="10" text-anchor="middle" fill="#222">24</text><line x1="361" y1="369.5" x2="364" y2="369.5" stroke="#222"/><text x="358.5" y="373.3" font-size="10.5" text-anchor="end" fill="#222">-107</text><line x1="361" y1="428" x2="364" y2="428" stroke="#222"/><text x="358.5" y="431.8" font-size="10.5" text-anchor="end" fill="#222">-196</text><text x="650" y="463" font-size="10" text-anchor="middle" fill="#222">Frequency (Hz)</text><text transform="translate(325.5,369) rotate(-90)" font-size="10" text-anchor="middle" fill="#222">Power Spectrum (dB)</text><rect x="364.5" y="473.5" width="587" height="36" fill="#fff"/><rect x="365.5" y="474.5" width="337" height="34" fill="#f0f0f0"/><rect x="787.5" y="474.5" width="163" height="34" fill="#f0f0f0"/><line x1="442.5" y1="473.5" x2="442.5" y2="509.5" stroke="#d8d8d8"/><line x1="520.5" y1="473.5" x2="520.5" y2="509.5" stroke="#d8d8d8"/><line x1="598.5" y1="473.5" x2="598.5" y2="509.5" stroke="#d8d8d8"/><line x1="676.5" y1="473.5" x2="676.5" y2="509.5" stroke="#d8d8d8"/><line x1="754.5" y1="473.5" x2="754.5" y2="509.5" stroke="#d8d8d8"/><line x1="832.5" y1="473.5" x2="832.5" y2="509.5" stroke="#d8d8d8"/><line x1="910.5" y1="473.5" x2="910.5" y2="509.5" stroke="#d8d8d8"/><line x1="364.5" y1="491.5" x2="951.5" y2="491.5" stroke="#dcdcdc"/><g clip-path="url(#c3)"><g opacity="0.55"><path d="M364.5,493.6 L364.8,493.6 L365.0,493.6 L365.2,493.6 L365.5,493.6 L365.8,493.6 L366.0,493.6 L366.2,493.6 L366.5,493.6 L366.8,493.6 L367.0,493.6 L367.2,493.6 L367.5,493.6 L367.8,493.6 L368.0,493.6 L368.2,493.6 L368.5,493.6 L368.8,493.6 L369.0,493.6 L369.2,493.6 L369.5,493.6 L369.8,493.6 L370.0,493.6 L370.2,493.6 L370.5,493.6 L370.8,493.6 L371.0,493.5 L371.2,493.5 L371.5,493.5 L371.8,493.5 L372.0,493.5 L372.2,493.5 L372.5,493.5 L372.8,493.5 L373.0,493.5 L373.2,493.5 L373.5,493.5 L373.8,493.5 L374.0,493.5 L374.2,493.5 L374.5,493.5 L374.8,493.5 L375.0,493.6 L375.2,493.6 L375.5,493.6 L375.8,493.6 L376.0,493.6 L376.2,493.7 L376.5,493.7 L376.8,493.7 L377.0,493.7 L377.2,493.7 L377.5,493.7 L377.8,493.7 L378.0,493.8 L378.2,493.8 L378.5,493.8 L378.8,493.8 L379.0,493.8 L379.2,493.8 L379.5,493.7 L379.8,493.7 L380.0,493.7 L380.2,493.7 L380.5,493.7 L380.8,493.7 L381.0,493.6 L381.2,493.6 L381.5,493.6 L381.8,493.5 L382.0,493.5 L382.2,493.5 L382.5,493.5 L382.8,493.5 L383.0,493.4 L383.2,493.4 L383.5,493.4 L383.8,493.4 L384.0,493.4 L384.2,493.4 L384.5,493.4 L384.8,493.4 L385.0,493.4 L385.2,493.4 L385.5,493.4 L385.8,493.5 L386.0,493.5 L386.2,493.5 L386.5,493.5 L386.8,493.6 L387.0,493.6 L387.2,493.6 L387.5,493.7 L387.8,493.7 L388.0,493.7 L388.2,493.8 L388.5,493.8 L388.8,493.8 L389.0,493.8 L389.2,493.8 L389.5,493.8 L389.8,493.8 L390.0,493.8 L390.2,493.8 L390.5,493.8 L390.8,493.8 L391.0,493.8 L391.2,493.8 L391.5,493.8 L391.8,493.7 L392.0,493.7 L392.2,493.7 L392.5,493.6 L392.8,493.6 L393.0,493.6 L393.2,493.5 L393.5,493.5 L393.8,493.5 L394.0,493.4 L394.2,493.4 L394.5,493.4 L394.8,493.4 L395.0,493.3 L395.2,493.3 L395.5,493.3 L395.8,493.3 L396.0,493.3 L396.2,493.3 L396.5,493.4 L396.8,493.4 L397.0,493.4 L397.2,493.4 L397.5,493.5 L397.8,493.5 L398.0,493.5 L398.2,493.6 L398.5,493.6 L398.8,493.6 L399.0,493.7 L399.2,493.7 L399.5,493.7 L399.8,493.8 L400.0,493.8 L400.2,493.8 L400.5,493.8 L400.8,493.9 L401.0,493.9 L401.2,493.9 L401.5,493.9 L401.8,493.9 L402.0,493.9 L402.2,493.8 L402.5,493.8 L402.8,493.8 L403.0,493.8 L403.2,493.7 L403.5,493.7 L403.8,493.7 L404.0,493.6 L404.2,493.6 L404.5,493.6 L404.8,493.5 L405.0,493.5 L405.2,493.5 L405.5,493.4 L405.8,493.4 L406.0,493.4 L406.2,493.4 L406.5,493.4 L406.8,493.4 L407.0,493.4 L407.2,493.4 L407.5,493.4 L407.8,493.4 L408.0,493.4 L408.2,493.4 L408.5,493.4 L408.8,493.4 L409.0,493.5 L409.2,493.5 L409.5,493.5 L409.8,493.6 L410.0,493.6 L410.2,493.6 L410.5,493.7 L410.8,493.7 L411.0,493.7 L411.2,493.7 L411.5,493.8 L411.8,493.8 L412.0,493.8 L412.2,493.8 L412.5,493.8 L412.8,493.8 L413.0,493.8 L413.2,493.8 L413.5,493.8 L413.8,493.8 L414.0,493.8 L414.2,493.7 L414.5,493.7 L414.8,493.7 L415.0,493.7 L415.2,493.7 L415.5,493.6 L415.8,493.6 L416.0,493.6 L416.2,493.5 L416.5,493.5 L416.8,493.5 L417.0,493.5 L417.2,493.5 L417.5,493.5 L417.8,493.4 L418.0,493.4 L418.2,493.4 L418.5,493.4 L418.8,493.4 L419.0,493.4 L419.2,493.5 L419.5,493.5 L419.8,493.5 L420.0,493.5 L420.2,493.5 L420.5,493.5 L420.8,493.5 L421.0,493.6 L421.2,493.6 L421.5,493.6 L421.8,493.6 L422.0,493.6 L422.2,493.7 L422.5,493.7 L422.8,493.7 L423.0,493.7 L423.2,493.7 L423.5,493.7 L423.8,493.7 L424.0,493.7 L424.2,493.7 L424.5,493.7 L424.8,493.7 L425.0,493.7 L425.2,493.7 L425.5,493.7 L425.8,493.7 L426.0,493.7 L426.2,493.6 L426.5,493.6 L426.8,493.6 L427.0,493.6 L427.2,493.6 L427.5,493.6 L427.8,493.6 L428.0,493.6 L428.2,493.6 L428.5,493.6 L428.8,493.6 L429.0,493.6 L429.2,493.6 L429.5,493.6 L429.8,493.6 L430.0,493.6 L430.2,493.6 L430.5,493.6 L430.8,493.6 L431.0,493.6 L431.2,493.6 L431.5,493.6 L431.8,493.6 L432.0,493.6 L432.2,493.6 L432.5,493.6 L432.8,493.6 L433.0,493.6 L433.2,493.6 L433.5,493.6 L433.8,493.6 L434.0,493.6 L434.2,493.6 L434.5,493.6 L434.8,493.6 L435.0,493.6 L435.2,493.6 L435.5,493.6 L435.8,493.6 L436.0,493.6 L436.2,493.6 L436.5,493.6 L436.8,493.6 L437.0,493.6 L437.2,493.6 L437.5,493.6 L437.8,493.6 L438.0,493.6 L438.2,493.6 L438.5,493.6 L438.8,493.6 L439.0,493.6 L439.2,493.6 L439.5,493.6 L439.8,493.6 L440.0,493.5 L440.2,493.5 L440.5,493.5 L440.8,493.5 L441.0,493.5 L441.2,493.5 L441.5,493.5 L441.8,493.5 L442.0,493.5 L442.2,493.5 L442.5,493.5 L442.8,493.5 L443.0,493.5 L443.2,493.5 L443.5,493.5 L443.8,493.6 L444.0,493.6 L444.2,493.6 L444.5,493.6 L444.8,493.6 L445.0,493.6 L445.2,493.7 L445.5,493.7 L445.8,493.7 L446.0,493.7 L446.2,493.7 L446.5,493.7 L446.8,493.7 L447.0,493.8 L447.2,493.8 L447.5,493.8 L447.8,493.8 L448.0,493.8 L448.2,493.8 L448.5,493.7 L448.8,493.7 L449.0,493.7 L449.2,493.7 L449.5,493.7 L449.8,493.6 L450.0,493.6 L450.2,493.6 L450.5,493.6 L450.8,493.5 L451.0,493.5 L451.2,493.5 L451.5,493.5 L451.8,493.5 L452.0,493.4 L452.2,493.4 L452.5,493.4 L452.8,493.4 L453.0,493.4 L453.2,493.4 L453.5,493.4 L453.8,493.4 L454.0,493.4 L454.2,493.4 L454.5,493.4 L454.8,493.5 L455.0,493.5 L455.2,493.5 L455.5,493.5 L455.8,493.6 L456.0,493.6 L456.2,493.6 L456.5,493.7 L456.8,493.7 L457.0,493.7 L457.2,493.8 L457.5,493.8 L457.8,493.8 L458.0,493.8 L458.2,493.8 L458.5,493.8 L458.8,493.8 L459.0,493.8 L459.2,493.8 L459.5,493.8 L459.8,493.8 L460.0,493.8 L460.2,493.8 L460.5,493.8 L460.8,493.7 L461.0,493.7 L461.2,493.7 L461.5,493.6 L461.8,493.6 L462.0,493.6 L462.2,493.5 L462.5,493.5 L462.8,493.5 L463.0,493.4 L463.2,493.4 L463.5,493.4 L463.8,493.4 L464.0,493.3 L464.2,493.3 L464.5,493.3 L464.8,493.3 L465.0,493.3 L465.2,493.3 L465.5,493.4 L465.8,493.4 L466.0,493.4 L466.2,493.4 L466.5,493.5 L466.8,493.5 L467.0,493.5 L467.2,493.6 L467.5,493.6 L467.8,493.6 L468.0,493.7 L468.2,493.7 L468.5,493.7 L468.8,493.8 L469.0,493.8 L469.2,493.8 L469.5,493.8 L469.8,493.9 L470.0,493.9 L470.2,495.4 L470.5,495.4 L470.8,495.3 L471.0,495.3 L471.2,495.2 L471.5,495.0 L471.8,494.9 L472.0,494.7 L472.2,494.5 L472.5,494.3 L472.8,494.1 L473.0,493.8 L473.2,493.6 L473.5,493.4 L473.8,493.1 L474.0,492.9 L474.2,492.7 L474.5,492.5 L474.8,492.4 L475.0,492.2 L475.2,492.1 L475.5,492.0 L475.8,492.0 L476.0,491.9 L476.2,491.9 L476.5,492.0 L476.8,492.0 L477.0,492.1 L477.2,492.3 L477.5,492.4 L477.8,492.6 L478.0,492.8 L478.2,493.0 L478.5,493.2 L478.8,493.4 L479.0,493.6 L479.2,493.8 L479.5,494.0 L479.8,494.2 L480.0,494.4 L480.2,494.6 L480.5,494.7 L480.8,494.8 L481.0,494.9 L481.2,495.0 L481.5,495.0 L481.8,495.0 L482.0,495.0 L482.2,495.0 L482.5,494.9 L482.8,494.8 L483.0,494.7 L483.2,494.6 L483.5,494.5 L483.8,494.3 L484.0,494.1 L484.2,494.0 L484.5,493.8 L484.8,493.6 L485.0,493.4 L485.2,493.3 L485.5,493.1 L485.8,493.0 L486.0,492.8 L486.2,492.7 L486.5,492.6 L486.8,492.6 L487.0,492.5 L487.2,492.5 L487.5,492.5 L487.8,492.5 L488.0,492.5 L488.2,492.6 L488.5,492.7 L488.8,492.8 L489.0,492.9 L489.2,493.0 L489.5,493.1 L489.8,493.2 L490.0,493.3 L490.2,493.5 L490.5,493.6 L490.8,493.7 L491.0,493.8 L491.2,493.9 L491.5,494.0 L491.8,494.1 L492.0,494.2 L492.2,494.2 L492.5,494.3 L492.8,494.3 L493.0,494.3 L493.2,494.3 L493.5,494.3 L493.8,494.3 L494.0,494.2 L494.2,494.2 L494.5,494.1 L494.8,494.0 L495.0,494.0 L495.2,493.9 L495.5,493.8 L495.8,493.7 L496.0,493.7 L496.2,493.6 L496.5,493.5 L496.8,493.5 L497.0,493.4 L497.2,493.4 L497.5,493.4 L497.8,493.3 L498.0,493.3 L498.2,493.3 L498.5,493.3 L498.8,493.3 L499.0,493.3 L499.2,493.4 L499.5,493.4 L499.8,493.4 L500.0,493.4 L500.2,493.5 L500.5,493.5 L500.8,493.5 L501.0,493.5 L501.2,493.6 L501.5,493.6 L501.8,493.6 L502.0,493.6 L502.2,493.6 L502.5,493.6 L502.8,493.6 L503.0,493.6 L503.2,493.7 L503.5,493.7 L503.8,493.7 L504.0,493.7 L504.2,493.8 L504.5,493.8 L504.8,493.8 L505.0,493.8 L505.2,493.8 L505.5,493.9 L505.8,493.9 L506.0,493.9 L506.2,493.8 L506.5,493.8 L506.8,493.8 L507.0,493.8 L507.2,493.7 L507.5,493.7 L507.8,493.6 L508.0,493.5 L508.2,493.5 L508.5,493.4 L508.8,493.3 L509.0,493.3 L509.2,493.2 L509.5,493.1 L509.8,493.1 L510.0,493.0 L510.2,493.0 L510.5,492.9 L510.8,492.9 L511.0,492.9 L511.2,492.9 L511.5,492.9 L511.8,493.0 L512.0,493.0 L512.2,493.1 L512.5,493.2 L512.8,493.3 L513.0,493.4 L513.2,493.5 L513.5,493.6 L513.8,493.7 L514.0,493.8 L514.2,494.0 L514.5,494.1 L514.8,494.2 L515.0,494.3 L515.2,494.4 L515.5,494.5 L515.8,494.6 L516.0,494.6 L516.2,494.7 L516.5,494.7 L516.8,494.7 L517.0,494.7 L517.2,494.6 L517.5,494.5 L517.8,494.5 L518.0,494.3 L518.2,494.2 L518.5,494.1 L518.8,493.9 L519.0,493.8 L519.2,493.6 L519.5,493.4 L519.8,493.3 L520.0,493.1 L520.2,492.9 L520.5,492.8 L520.8,492.6 L521.0,492.5 L521.2,492.4 L521.5,492.3 L521.8,492.2 L522.0,492.2 L522.2,492.2 L522.5,492.2 L522.8,492.2 L523.0,492.3 L523.2,492.4 L523.5,492.5 L523.8,492.7 L524.0,492.8 L524.2,493.0 L524.5,493.2 L524.8,493.4 L525.0,493.6 L525.2,493.8 L525.5,494.0 L525.8,494.2 L526.0,494.4 L526.2,494.6 L526.5,494.8 L526.8,494.9 L527.0,495.0 L527.2,495.1 L527.5,495.2 L527.8,495.2 L528.0,495.3 L528.2,495.2 L528.5,495.2 L528.8,495.1 L529.0,495.0 L529.2,494.8 L529.5,494.7 L529.8,494.5 L530.0,494.3 L530.2,494.1 L530.5,493.8 L530.8,493.6 L531.0,493.4 L531.2,493.1 L531.5,492.9 L531.8,492.7 L532.0,492.5 L532.2,492.3 L532.5,492.2 L532.8,492.0 L533.0,491.9 L533.2,491.9 L533.5,491.8 L533.8,491.8 L534.0,491.9 L534.2,491.9 L534.5,492.0 L534.8,492.1 L535.0,492.3 L535.2,492.5 L535.5,492.7 L535.8,492.9 L536.0,493.1 L536.2,493.4 L536.5,493.6 L536.8,493.8 L537.0,494.1 L537.2,494.3 L537.5,494.5 L537.8,494.7 L538.0,494.9 L538.2,495.1 L538.5,495.2 L538.8,495.3 L539.0,495.4 L539.2,495.4 L539.5,495.4 L539.8,495.3 L540.0,495.3 L540.2,495.2 L540.5,495.0 L540.8,494.9 L541.0,494.7 L541.2,494.5 L541.5,494.3 L541.8,494.1 L542.0,493.8 L542.2,493.6 L542.5,493.4 L542.8,493.1 L543.0,492.9 L543.2,492.7 L543.5,492.5 L543.8,492.3 L544.0,492.2 L544.2,492.1 L544.5,492.0 L544.8,492.0 L545.0,491.9 L545.2,491.9 L545.5,492.0 L545.8,492.0 L546.0,492.1 L546.2,492.3 L546.5,492.4 L546.8,492.6 L547.0,492.8 L547.2,493.0 L547.5,493.2 L547.8,493.4 L548.0,493.6 L548.2,493.8 L548.5,494.0 L548.8,494.2 L549.0,494.4 L549.2,494.6 L549.5,494.7 L549.8,494.8 L550.0,494.9 L550.2,495.0 L550.5,495.0 L550.8,495.0 L551.0,495.0 L551.2,495.0 L551.5,494.9 L551.8,494.8 L552.0,494.7 L552.2,494.6 L552.5,494.5 L552.8,494.3 L553.0,494.1 L553.2,494.0 L553.5,493.8 L553.8,493.6 L554.0,493.4 L554.2,493.3 L554.5,493.1 L554.8,493.0 L555.0,492.8 L555.2,492.7 L555.5,492.6 L555.8,492.6 L556.0,492.5 L556.2,492.5 L556.5,492.5 L556.8,492.5 L557.0,492.5 L557.2,492.6 L557.5,492.7 L557.8,492.7 L558.0,492.9 L558.2,493.0 L558.5,493.1 L558.8,493.2 L559.0,493.3 L559.2,493.5 L559.5,493.6 L559.8,493.7 L560.0,493.6 L560.2,493.7 L560.5,493.7 L560.8,493.7 L561.0,493.7 L561.2,493.7 L561.5,493.7 L561.8,493.7 L562.0,493.7 L562.2,493.7 L562.5,493.7 L562.8,493.7 L563.0,493.7 L563.2,493.7 L563.5,493.7 L563.8,493.7 L564.0,493.7 L564.2,493.6 L564.5,493.6 L564.8,493.6 L565.0,493.6 L565.2,493.6 L565.5,493.6 L565.8,493.6 L566.0,493.6 L566.2,493.6 L566.5,493.6 L566.8,493.6 L567.0,493.6 L567.2,493.6 L567.5,493.6 L567.8,493.6 L568.0,493.6 L568.2,493.6 L568.5,493.6 L568.8,493.6 L569.0,493.6 L569.2,493.6 L569.5,493.6 L569.8,493.6 L570.0,493.6 L570.2,493.6 L570.5,493.6 L570.8,493.6 L571.0,493.6 L571.2,493.6 L571.5,493.6 L571.8,493.6 L572.0,493.6 L572.2,493.6 L572.5,493.6 L572.8,493.6 L573.0,493.6 L573.2,493.6 L573.5,493.6 L573.8,493.6 L574.0,493.6 L574.2,493.6 L574.5,493.6 L574.8,493.6 L575.0,493.6 L575.2,493.6 L575.5,493.6 L575.8,493.6 L576.0,493.6 L576.2,493.6 L576.5,493.6 L576.8,493.6 L577.0,493.6 L577.2,493.6 L577.5,493.6 L577.8,493.6 L578.0,493.5 L578.2,493.5 L578.5,493.5 L578.8,493.5 L579.0,493.5 L579.2,493.5 L579.5,493.5 L579.8,493.5 L580.0,493.5 L580.2,493.5 L580.5,493.5 L580.8,493.5 L581.0,493.5 L581.2,493.5 L581.5,493.5 L581.8,493.6 L582.0,493.6 L582.2,493.6 L582.5,493.6 L582.8,493.6 L583.0,493.6 L583.2,493.7 L583.5,493.7 L583.8,493.7 L584.0,493.7 L584.2,493.7 L584.5,493.7 L584.8,493.7 L585.0,493.8 L585.2,493.8 L585.5,493.8 L585.8,493.8 L586.0,493.8 L586.2,493.8 L586.5,493.7 L586.8,493.7 L587.0,493.7 L587.2,493.7 L587.5,493.7 L587.8,493.6 L588.0,493.6 L588.2,493.6 L588.5,493.6 L588.8,493.5 L589.0,493.5 L589.2,493.5 L589.5,493.5 L589.8,493.5 L590.0,493.4 L590.2,493.4 L590.5,493.4 L590.8,493.4 L591.0,493.4 L591.2,493.4 L591.5,493.4 L591.8,493.4 L592.0,493.4 L592.2,493.4 L592.5,493.4 L592.8,493.5 L593.0,493.5 L593.2,493.5 L593.5,493.5 L593.8,493.6 L594.0,493.6 L594.2,493.6 L594.5,493.7 L594.8,493.7 L595.0,493.7 L595.2,493.8 L595.5,493.8 L595.8,493.8 L596.0,493.8 L596.2,493.8 L596.5,493.8 L596.8,493.8 L597.0,493.8 L597.2,493.8 L597.5,493.8 L597.8,493.8 L598.0,493.8 L598.2,493.8 L598.5,493.8 L598.8,493.7 L599.0,493.7 L599.2,493.7 L599.5,493.6 L599.8,493.6 L600.0,493.6 L600.2,493.5 L600.5,493.5 L600.8,493.5 L601.0,493.4 L601.2,493.4 L601.5,493.4 L601.8,493.4 L602.0,493.3 L602.2,493.3 L602.5,493.3 L602.8,493.3 L603.0,493.3 L603.2,493.3 L603.5,493.4 L603.8,493.4 L604.0,493.4 L604.2,493.4 L604.5,493.5 L604.8,493.5 L605.0,493.5 L605.2,493.6 L605.5,493.6 L605.8,493.6 L606.0,493.7 L606.2,493.7 L606.5,493.7 L606.8,493.8 L607.0,493.8 L607.2,493.8 L607.5,493.8 L607.8,493.9 L608.0,493.9 L608.2,493.9 L608.5,493.9 L608.8,493.9 L609.0,493.9 L609.2,493.8 L609.5,493.8 L609.8,493.8 L610.0,493.8 L610.2,493.7 L610.5,493.7 L610.8,493.7 L611.0,493.6 L611.2,493.6 L611.5,493.6 L611.8,493.5 L612.0,493.5 L612.2,493.5 L612.5,493.4 L612.8,493.4 L613.0,493.4 L613.2,493.4 L613.5,493.4 L613.8,493.4 L614.0,493.3 L614.2,493.3 L614.5,493.4 L614.8,493.4 L615.0,493.4 L615.2,493.4 L615.5,493.4 L615.8,493.4 L616.0,493.5 L616.2,493.5 L616.5,493.5 L616.8,493.6 L617.0,493.6 L617.2,493.6 L617.5,493.7 L617.8,493.7 L618.0,493.7 L618.2,493.7 L618.5,493.8 L618.8,493.8 L619.0,493.8 L619.2,493.8 L619.5,493.8 L619.8,493.8 L620.0,493.8 L620.2,493.8 L620.5,493.8 L620.8,493.8 L621.0,493.8 L621.2,493.8 L621.5,493.7 L621.8,493.7 L622.0,493.7 L622.2,493.7 L622.5,493.6 L622.8,493.6 L623.0,493.6 L623.2,493.5 L623.5,493.5 L623.8,493.5 L624.0,493.5 L624.2,493.5 L624.5,493.5 L624.8,493.4 L625.0,493.4 L625.2,493.4 L625.5,493.4 L625.8,493.4 L626.0,493.4 L626.2,493.4 L626.5,493.5 L626.8,493.5 L627.0,493.5 L627.2,493.5 L627.5,493.5 L627.8,493.5 L628.0,493.6 L628.2,493.6 L628.5,493.6 L628.8,493.6 L629.0,493.6 L629.2,493.7 L629.5,493.7 L629.8,493.7 L630.0,493.7 L630.2,493.7 L630.5,493.7 L630.8,493.7 L631.0,493.7 L631.2,493.7 L631.5,493.7 L631.8,493.7 L632.0,493.7 L632.2,493.7 L632.5,493.7 L632.8,493.7 L633.0,493.7 L633.2,493.6 L633.5,493.6 L633.8,493.6 L634.0,493.6 L634.2,493.6 L634.5,493.6 L634.8,493.6 L635.0,493.6 L635.2,493.6 L635.5,493.6 L635.8,493.6 L636.0,493.6 L636.2,493.6 L636.5,493.6 L636.8,493.6 L637.0,493.6 L637.2,493.6 L637.5,493.6 L637.8,493.6 L638.0,493.6 L638.2,493.6 L638.5,493.6 L638.8,493.6 L639.0,493.6 L639.2,493.6 L639.5,493.6 L639.8,493.6 L640.0,493.6 L640.2,493.6 L640.5,493.6 L640.8,493.6 L641.0,493.6 L641.2,493.6 L641.5,493.7 L641.8,493.7 L642.0,493.7 L642.2,493.7 L642.5,493.8 L642.8,493.8 L643.0,493.8 L643.2,493.8 L643.5,493.8 L643.8,493.8 L644.0,493.8 L644.2,493.8 L644.5,493.8 L644.8,493.8 L645.0,493.7 L645.2,493.7 L645.5,493.7 L645.8,493.6 L646.0,493.5 L646.2,493.5 L646.5,493.4 L646.8,493.3 L647.0,493.3 L647.2,493.2 L647.5,493.1 L647.8,493.1 L648.0,493.0 L648.2,493.0 L648.5,493.0 L648.8,492.9 L649.0,492.9 L649.2,492.9 L649.5,493.0 L649.8,493.0 L650.0,493.0 L650.2,493.1 L650.5,493.2 L650.8,493.3 L651.0,493.4 L651.2,493.5 L651.5,493.6 L651.8,493.7 L652.0,493.8 L652.2,494.0 L652.5,494.1 L652.8,494.2 L653.0,494.3 L653.2,494.4 L653.5,494.5 L653.8,494.6 L654.0,494.6 L654.2,494.7 L654.5,494.7 L654.8,494.7 L655.0,494.6 L655.2,494.6 L655.5,494.5 L655.8,494.4 L656.0,494.3 L656.2,494.2 L656.5,494.1 L656.8,493.9 L657.0,493.8 L657.2,493.6 L657.5,493.4 L657.8,493.3 L658.0,493.1 L658.2,492.9 L658.5,492.8 L658.8,492.6 L659.0,492.5 L659.2,492.4 L659.5,492.3 L659.8,492.2 L660.0,492.2 L660.2,492.2 L660.5,492.2 L660.8,492.2 L661.0,492.3 L661.2,492.4 L661.5,492.5 L661.8,492.7 L662.0,492.8 L662.2,493.0 L662.5,493.2 L662.8,493.4 L663.0,493.6 L663.2,493.8 L663.5,494.0 L663.8,494.2 L664.0,494.4 L664.2,494.6 L664.5,494.8 L664.8,494.9 L665.0,495.0 L665.2,495.1 L665.5,495.2 L665.8,495.2 L666.0,495.2 L666.2,495.2 L666.5,495.2 L666.8,495.1 L667.0,495.0 L667.2,494.8 L667.5,494.7 L667.8,494.5 L668.0,494.3 L668.2,494.1 L668.5,493.8 L668.8,493.6 L669.0,493.4 L669.2,493.1 L669.5,492.9 L669.8,492.7 L670.0,492.5 L670.2,492.3 L670.5,492.2 L670.8,492.0 L671.0,491.9 L671.2,491.9 L671.5,491.8 L671.8,491.8 L672.0,491.9 L672.2,491.9 L672.5,492.0 L672.8,492.1 L673.0,492.3 L673.2,492.5 L673.5,492.7 L673.8,492.9 L674.0,493.1 L674.2,493.4 L674.5,493.6 L674.8,493.8 L675.0,494.1 L675.2,494.3 L675.5,494.5 L675.8,494.7 L676.0,494.9 L676.2,495.1 L676.5,495.2 L676.8,495.3 L677.0,495.4 L677.2,495.4 L677.5,495.4 L677.8,495.3 L678.0,495.3 L678.2,495.2 L678.5,495.1 L678.8,494.9 L679.0,494.7 L679.2,494.5 L679.5,494.3 L679.8,494.1 L680.0,493.8 L680.2,493.6 L680.5,493.4 L680.8,493.1 L681.0,492.9 L681.2,492.7 L681.5,492.5 L681.8,492.3 L682.0,492.2 L682.2,492.1 L682.5,492.0 L682.8,491.9 L683.0,491.9 L683.2,491.9 L683.5,492.0 L683.8,492.0 L684.0,492.1 L684.2,492.3 L684.5,492.4 L684.8,492.6 L685.0,492.8 L685.2,493.0 L685.5,493.2 L685.8,493.4 L686.0,493.6 L686.2,493.8 L686.5,494.0 L686.8,494.2 L687.0,494.4 L687.2,494.6 L687.5,494.7 L687.8,494.8 L688.0,494.9 L688.2,495.0 L688.5,495.0 L688.8,495.1 L689.0,495.0 L689.2,495.0 L689.5,494.9 L689.8,494.9 L690.0,494.7 L690.2,494.6 L690.5,494.5 L690.8,494.3 L691.0,494.1 L691.2,494.0 L691.5,493.8 L691.8,493.6 L692.0,493.4 L692.2,493.3 L692.5,493.1 L692.8,493.0 L693.0,492.8 L693.2,492.7 L693.5,492.6 L693.8,492.5 L694.0,492.5 L694.2,492.5 L694.5,492.5 L694.8,492.5 L695.0,492.5 L695.2,492.6 L695.5,492.6 L695.8,492.7 L696.0,492.8 L696.2,493.0 L696.5,493.1 L696.8,493.2 L697.0,493.3 L697.2,493.5 L697.5,493.6 L697.8,493.7 L698.0,493.8 L698.2,494.0 L698.5,494.1 L698.8,494.1 L699.0,494.2 L699.2,494.3 L699.5,494.3 L699.8,494.3 L700.0,494.3 L700.2,494.3 L700.5,494.3 L700.8,494.3 L701.0,494.2 L701.2,494.2 L701.5,494.1 L701.8,494.1 L702.0,494.0 L702.2,493.9 L702.5,493.8 L702.8,493.7 L703.0,493.7 L703.2,493.6 L703.5,493.5 L703.8,493.5 L704.0,493.4 L704.2,493.4 L704.5,493.3 L704.8,493.3 L705.0,493.3 L705.2,493.3 L705.5,493.3 L705.8,493.3 L706.0,493.3 L706.2,493.3 L706.5,493.4 L706.8,493.4 L707.0,493.4 L707.2,493.4 L707.5,493.5 L707.8,493.5 L708.0,493.5 L708.2,493.6 L708.5,493.6 L708.8,493.6 L709.0,493.6 L709.2,493.6 L709.5,493.6 L709.8,493.6 L710.0,493.6 L710.2,493.6 L710.5,493.7 L710.8,493.7 L711.0,493.7 L711.2,493.7 L711.5,493.8 L711.8,493.8 L712.0,493.8 L712.2,493.8 L712.5,493.8 L712.8,493.8 L713.0,493.8 L713.2,493.8 L713.5,493.8 L713.8,493.8 L714.0,493.7 L714.2,493.7 L714.5,493.7 L714.8,493.6 L715.0,493.5 L715.2,493.5 L715.5,493.4 L715.8,493.3 L716.0,493.3 L716.2,493.2 L716.5,493.1 L716.8,493.1 L717.0,493.0 L717.2,493.0 L717.5,493.0 L717.8,492.9 L718.0,492.9 L718.2,492.9 L718.5,493.0 L718.8,493.0 L719.0,493.1 L719.2,493.1 L719.5,493.2 L719.8,493.3 L720.0,493.4 L720.2,493.5 L720.5,493.6 L720.8,493.7 L721.0,493.8 L721.2,494.0 L721.5,494.1 L721.8,494.2 L722.0,494.3 L722.2,494.4 L722.5,494.5 L722.8,494.6 L723.0,494.6 L723.2,494.6 L723.5,494.7 L723.8,494.7 L724.0,494.6 L724.2,494.6 L724.5,494.5 L724.8,494.4 L725.0,494.3 L725.2,494.2 L725.5,494.1 L725.8,493.9 L726.0,493.8 L726.2,493.6 L726.5,493.4 L726.8,493.3 L727.0,493.1 L727.2,492.9 L727.5,492.8 L727.8,492.6 L728.0,492.5 L728.2,492.4 L728.5,492.3 L728.8,492.3 L729.0,492.2 L729.2,492.2 L729.5,492.2 L729.8,492.3 L730.0,492.3 L730.2,492.4 L730.5,492.5 L730.8,492.7 L731.0,492.8 L731.2,493.0 L731.5,493.2 L731.8,493.4 L732.0,493.6 L732.2,493.8 L732.5,494.0 L732.8,494.2 L733.0,494.4 L733.2,494.6 L733.5,494.8 L733.8,494.9 L734.0,495.0 L734.2,495.1 L734.5,495.2 L734.8,495.2 L735.0,495.2 L735.2,495.2 L735.5,495.2 L735.8,495.1 L736.0,495.0 L736.2,494.8 L736.5,494.7 L736.8,494.5 L737.0,494.3 L737.2,494.1 L737.5,493.8 L737.8,493.6 L738.0,493.4 L738.2,493.1 L738.5,492.9 L738.8,492.7 L739.0,492.5 L739.2,492.3 L739.5,492.2 L739.8,492.0 L740.0,491.9 L740.2,491.9 L740.5,491.8 L740.8,491.8 L741.0,491.9 L741.2,491.9 L741.5,492.0 L741.8,492.1 L742.0,492.3 L742.2,492.5 L742.5,492.7 L742.8,492.9 L743.0,493.1 L743.2,493.4 L743.5,493.6 L743.8,493.8 L744.0,494.1 L744.2,494.3 L744.5,494.5 L744.8,494.7 L745.0,494.9 L745.2,495.1 L745.5,495.2 L745.8,495.3 L746.0,495.4 L746.2,495.4 L746.5,495.4 L746.8,495.3 L747.0,495.3 L747.2,495.2 L747.5,495.1 L747.8,494.9 L748.0,494.7 L748.2,494.5 L748.5,494.3 L748.8,494.1 L749.0,493.8 L749.2,493.6 L749.5,493.4 L749.8,493.1 L750.0,492.9 L750.2,492.7 L750.5,492.5 L750.8,492.3 L751.0,492.2 L751.2,492.1 L751.5,492.0 L751.8,491.9 L752.0,491.9 L752.2,491.9 L752.5,492.0 L752.8,492.0 L753.0,492.1 L753.2,492.3 L753.5,492.4 L753.8,492.6 L754.0,492.8 L754.2,493.0 L754.5,493.2 L754.8,493.4 L755.0,493.6 L755.2,493.8 L755.5,494.0 L755.8,494.2 L756.0,494.4 L756.2,494.6 L756.5,494.7 L756.8,494.8 L757.0,494.9 L757.2,495.0 L757.5,495.0 L757.8,495.1 L758.0,495.1 L758.2,495.0 L758.5,494.9 L758.8,494.9 L759.0,494.7 L759.2,494.6 L759.5,494.5 L759.8,494.3 L760.0,494.1 L760.2,494.0 L760.5,493.8 L760.8,493.6 L761.0,493.4 L761.2,493.3 L761.5,493.1 L761.8,492.9 L762.0,492.8 L762.2,492.7 L762.5,492.6 L762.8,492.5 L763.0,492.5 L763.2,492.5 L763.5,492.5 L763.8,492.5 L764.0,492.5 L764.2,492.6 L764.5,492.6 L764.8,492.7 L765.0,492.8 L765.2,492.9 L765.5,493.1 L765.8,493.2 L766.0,493.3 L766.2,493.5 L766.5,493.6 L766.8,493.7 L767.0,493.8 L767.2,494.0 L767.5,494.1 L767.8,494.1 L768.0,494.2 L768.2,494.3 L768.5,494.3 L768.8,494.3 L769.0,494.4 L769.2,494.3 L769.5,494.3 L769.8,494.3 L770.0,494.3 L770.2,494.2 L770.5,494.1 L770.8,494.1 L771.0,494.0 L771.2,493.9 L771.5,493.8 L771.8,493.8 L772.0,493.7 L772.2,493.6 L772.5,493.5 L772.8,493.5 L773.0,493.4 L773.2,493.4 L773.5,493.3 L773.8,493.3 L774.0,493.3 L774.2,493.3 L774.5,493.3 L774.8,493.3 L775.0,493.3 L775.2,493.3 L775.5,493.3 L775.8,493.4 L776.0,493.4 L776.2,493.4 L776.5,493.5 L776.8,493.5 L777.0,493.5 L777.2,493.6 L777.5,493.6 L777.8,493.6 L778.0,493.6 L778.2,493.6 L778.5,493.6 L778.8,493.6 L779.0,493.6 L779.2,493.6 L779.5,493.6 L779.8,493.7 L780.0,493.7 L780.2,493.7 L780.5,493.7 L780.8,493.8 L781.0,493.8 L781.2,493.8 L781.5,493.8 L781.8,493.8 L782.0,493.8 L782.2,493.8 L782.5,493.8 L782.8,493.8 L783.0,493.7 L783.2,493.7 L783.5,493.7 L783.8,493.6 L784.0,493.5 L784.2,493.5 L784.5,493.4 L784.8,493.3 L785.0,493.3 L785.2,493.2 L785.5,493.2 L785.8,493.1 L786.0,493.0 L786.2,493.0 L786.5,493.0 L786.8,493.0 L787.0,493.0 L787.2,493.0 L787.5,493.0 L787.8,493.0 L788.0,493.1 L788.2,493.1 L788.5,493.2 L788.8,493.3 L789.0,493.4 L789.2,493.5 L789.5,493.6 L789.8,493.7 L790.0,493.8 L790.2,494.0 L790.5,494.1 L790.8,494.2 L791.0,494.3 L791.2,494.4 L791.5,494.5 L791.8,494.5 L792.0,494.6 L792.2,494.6 L792.5,494.7 L792.8,494.7 L793.0,494.6 L793.2,494.6 L793.5,494.5 L793.8,494.4 L794.0,494.3 L794.2,494.2 L794.5,494.1 L794.8,493.9 L795.0,493.8 L795.2,493.6 L795.5,493.4 L795.8,493.3 L796.0,493.1 L796.2,492.9 L796.5,492.8 L796.8,492.6 L797.0,492.5 L797.2,492.4 L797.5,492.3 L797.8,492.3 L798.0,492.2 L798.2,492.2 L798.5,492.2 L798.8,492.3 L799.0,492.3 L799.2,492.4 L799.5,492.5 L799.8,492.7 L800.0,492.8 L800.2,493.0 L800.5,493.2 L800.8,493.4 L801.0,493.6 L801.2,493.8 L801.5,494.0 L801.8,494.2 L802.0,494.4 L802.2,494.6 L802.5,494.8 L802.8,494.9 L803.0,495.0 L803.2,495.1 L803.5,495.2 L803.8,495.2 L804.0,495.2 L804.2,495.2 L804.5,495.2 L804.8,495.1 L805.0,495.0 L805.2,494.8 L805.5,494.7 L805.8,494.5 L806.0,494.3 L806.2,494.1 L806.5,493.8 L806.8,493.6 L807.0,493.4 L807.2,493.1 L807.5,492.9 L807.8,492.7 L808.0,492.5 L808.2,492.3 L808.5,492.2 L808.8,492.0 L809.0,491.9 L809.2,491.9 L809.5,491.8 L809.8,491.8 L810.0,491.9 L810.2,491.9 L810.5,492.0 L810.8,492.1 L811.0,492.3 L811.2,492.5 L811.5,492.7 L811.8,492.9 L812.0,493.1 L812.2,493.4 L812.5,493.6 L812.8,493.8 L813.0,494.1 L813.2,494.3 L813.5,494.5 L813.8,494.7 L814.0,494.9 L814.2,495.1 L814.5,495.2 L814.8,495.3 L815.0,495.4 L815.2,495.4 L815.5,495.4 L815.8,495.4 L816.0,495.3 L816.2,495.2 L816.5,495.1 L816.8,494.9 L817.0,494.7 L817.2,494.5 L817.5,494.3 L817.8,494.1 L818.0,493.8 L818.2,493.6 L818.5,493.4 L818.8,493.1 L819.0,492.9 L819.2,492.7 L819.5,492.5 L819.8,492.3 L820.0,492.2 L820.2,492.1 L820.5,492.0 L820.8,491.9 L821.0,491.9 L821.2,491.9 L821.5,492.0 L821.8,492.0 L822.0,492.1 L822.2,492.3 L822.5,492.4 L822.8,492.6 L823.0,492.8 L823.2,493.0 L823.5,493.2 L823.8,493.4 L824.0,493.6 L824.2,493.8 L824.5,494.0 L824.8,494.2 L825.0,494.4 L825.2,494.6 L825.5,494.7 L825.8,494.8 L826.0,494.9 L826.2,495.0 L826.5,495.1 L826.8,495.1 L827.0,495.1 L827.2,495.0 L827.5,495.0 L827.8,494.9 L828.0,494.8 L828.2,494.6 L828.5,494.5 L828.8,494.3 L829.0,494.1 L829.2,494.0 L829.5,493.8 L829.8,493.6 L830.0,493.4 L830.2,493.3 L830.5,493.1 L830.8,492.9 L831.0,492.8 L831.2,492.7 L831.5,492.6 L831.8,492.5 L832.0,492.5 L832.2,492.5 L832.5,492.4 L832.8,492.5 L833.0,492.5 L833.2,492.6 L833.5,492.6 L833.8,492.7 L834.0,492.8 L834.2,492.9 L834.5,493.1 L834.8,493.2 L835.0,493.3 L835.2,493.5 L835.5,493.6 L835.8,493.7 L836.0,493.8 L836.2,494.0 L836.5,494.1 L836.8,494.1 L837.0,494.2 L837.2,494.3 L837.5,494.3 L837.8,494.3 L838.0,494.4 L838.2,494.4 L838.5,494.3 L838.8,494.3 L839.0,494.3 L839.2,494.2 L839.5,494.1 L839.8,494.1 L840.0,494.0 L840.2,493.9 L840.5,493.8 L840.8,493.8 L841.0,493.7 L841.2,493.6 L841.5,493.5 L841.8,493.5 L842.0,493.4 L842.2,493.4 L842.5,493.3 L842.8,493.3 L843.0,493.3 L843.2,493.3 L843.5,493.3 L843.8,493.3 L844.0,493.3 L844.2,493.3 L844.5,493.3 L844.8,493.4 L845.0,493.4 L845.2,493.4 L845.5,493.5 L845.8,493.5 L846.0,493.5 L846.2,493.5 L846.5,493.6 L846.8,493.6 L847.0,493.6 L847.2,493.6 L847.5,493.6 L847.8,493.6 L848.0,493.6 L848.2,493.6 L848.5,493.6 L848.8,493.7 L849.0,493.7 L849.2,493.7 L849.5,493.7 L849.8,493.8 L850.0,493.8 L850.2,493.8 L850.5,493.8 L850.8,493.8 L851.0,493.8 L851.2,493.8 L851.5,493.8 L851.8,493.8 L852.0,493.7 L852.2,493.7 L852.5,493.7 L852.8,493.6 L853.0,493.5 L853.2,493.5 L853.5,493.4 L853.8,493.4 L854.0,493.3 L854.2,493.2 L854.5,493.2 L854.8,493.1 L855.0,493.1 L855.2,493.0 L855.5,493.0 L855.8,493.0 L856.0,493.0 L856.2,493.0 L856.5,493.0 L856.8,493.0 L857.0,493.1 L857.2,493.1 L857.5,493.2 L857.8,493.3 L858.0,493.4 L858.2,493.5 L858.5,493.6 L858.8,493.7 L859.0,493.8 L859.2,494.0 L859.5,494.1 L859.8,494.2 L860.0,494.3 L860.2,494.4 L860.5,494.5 L860.8,494.5 L861.0,494.6 L861.2,494.6 L861.5,494.6 L861.8,494.6 L862.0,494.6 L862.2,494.6 L862.5,494.5 L862.8,494.4 L863.0,494.3 L863.2,494.2 L863.5,494.1 L863.8,493.9 L864.0,493.8 L864.2,493.6 L864.5,493.4 L864.8,493.3 L865.0,493.1 L865.2,492.9 L865.5,492.8 L865.8,492.6 L866.0,492.5 L866.2,492.4 L866.5,492.3 L866.8,492.3 L867.0,492.2 L867.2,492.2 L867.5,492.2 L867.8,492.3 L868.0,492.3 L868.2,492.4 L868.5,492.5 L868.8,492.7 L869.0,492.8 L869.2,493.0 L869.5,493.2 L869.8,493.4 L870.0,493.6 L870.2,493.8 L870.5,494.0 L870.8,494.2 L871.0,494.4 L871.2,494.6 L871.5,494.8 L871.8,494.9 L872.0,495.0 L872.2,495.1 L872.5,495.2 L872.8,495.2 L873.0,495.2 L873.2,495.2 L873.5,495.2 L873.8,495.1 L874.0,495.0 L874.2,494.8 L874.5,494.7 L874.8,494.5 L875.0,494.3 L875.2,494.1 L875.5,493.8 L875.8,493.6 L876.0,493.4 L876.2,493.1 L876.5,492.9 L876.8,492.7 L877.0,492.5 L877.2,492.3 L877.5,492.2 L877.8,492.0 L878.0,491.9 L878.2,491.9 L878.5,491.8 L878.8,491.8 L879.0,491.9 L879.2,491.9 L879.5,492.0 L879.8,492.1 L880.0,492.3 L880.2,492.5 L880.5,492.7 L880.8,492.9 L881.0,493.1 L881.2,493.4 L881.5,493.6 L881.8,493.8 L882.0,494.1 L882.2,494.3 L882.5,494.5 L882.8,494.7 L883.0,494.9 L883.2,495.1 L883.5,495.2 L883.8,495.3 L884.0,495.4 L884.2,495.4 L884.5,495.4 L884.8,495.4 L885.0,495.3 L885.2,495.2 L885.5,495.1 L885.8,494.9 L886.0,494.7 L886.2,494.5 L886.5,494.3 L886.8,494.1 L887.0,493.8 L887.2,493.6 L887.5,493.4 L887.8,493.1 L888.0,492.9 L888.2,492.7 L888.5,492.5 L888.8,492.3 L889.0,492.2 L889.2,492.1 L889.5,492.0 L889.8,491.9 L890.0,491.9 L890.2,491.9 L890.5,492.0 L890.8,492.0 L891.0,492.1 L891.2,492.2 L891.5,492.4 L891.8,492.6 L892.0,492.8 L892.2,493.0 L892.5,493.2 L892.8,493.4 L893.0,493.6 L893.2,493.8 L893.5,494.0 L893.8,494.2 L894.0,494.4 L894.2,494.6 L894.5,494.7 L894.8,494.8 L895.0,494.9 L895.2,495.0 L895.5,495.1 L895.8,495.1 L896.0,495.1 L896.2,495.0 L896.5,495.0 L896.8,494.9 L897.0,494.8 L897.2,494.6 L897.5,494.5 L897.8,494.3 L898.0,494.1 L898.2,494.0 L898.5,493.8 L898.8,493.6 L899.0,493.4 L899.2,493.3 L899.5,493.1 L899.8,492.9 L900.0,492.8 L900.2,492.7 L900.5,492.6 L900.8,492.5 L901.0,492.5 L901.2,492.4 L901.5,492.4 L901.8,492.5 L902.0,492.5 L902.2,492.6 L902.5,492.6 L902.8,492.7 L903.0,492.8 L903.2,492.9 L903.5,493.1 L903.8,493.2 L904.0,493.3 L904.2,493.5 L904.5,493.6 L904.8,493.7 L905.0,493.9 L905.2,494.0 L905.5,494.1 L905.8,494.2 L906.0,494.2 L906.2,494.3 L906.5,494.3 L906.8,494.4 L907.0,494.4 L907.2,494.4 L907.5,494.3 L907.8,494.3 L908.0,494.3 L908.2,494.2 L908.5,494.1 L908.8,494.1 L909.0,494.0 L909.2,493.9 L909.5,493.8 L909.8,493.8 L910.0,493.7 L910.2,493.6 L910.5,493.5 L910.8,493.5 L911.0,493.4 L911.2,493.4 L911.5,493.3 L911.8,493.3 L912.0,493.3 L912.2,493.3 L912.5,493.3 L912.8,493.3 L913.0,493.3 L913.2,493.3 L913.5,493.3 L913.8,493.4 L914.0,493.4 L914.2,493.4 L914.5,493.5 L914.8,493.5 L915.0,493.5 L915.2,493.5 L915.5,493.6 L915.8,493.6 L916.0,493.6 L916.2,493.6 L916.5,493.6 L916.8,493.6 L917.0,493.6 L917.2,493.6 L917.5,493.6 L917.8,493.7 L918.0,493.7 L918.2,493.7 L918.5,493.7 L918.8,493.7 L919.0,493.8 L919.2,493.8 L919.5,493.8 L919.8,493.8 L920.0,493.8 L920.2,493.8 L920.5,493.8 L920.8,493.8 L921.0,493.7 L921.2,493.7 L921.5,493.7 L921.8,493.6 L922.0,493.5 L922.2,493.5 L922.5,493.4 L922.8,493.4 L923.0,493.3 L923.2,493.2 L923.5,493.2 L923.8,493.1 L924.0,493.1 L924.2,493.0 L924.5,493.0 L924.8,493.0 L925.0,493.0 L925.2,493.0 L925.5,493.0 L925.8,493.0 L926.0,493.1 L926.2,493.1 L926.5,493.2 L926.8,493.3 L927.0,493.4 L927.2,493.5 L927.5,493.6 L927.8,493.7 L928.0,493.8 L928.2,494.0 L928.5,494.1 L928.8,494.2 L929.0,494.3 L929.2,494.4 L929.5,494.5 L929.8,494.5 L930.0,494.6 L930.2,494.6 L930.5,494.6 L930.8,494.6 L931.0,494.6 L931.2,494.6 L931.5,494.5 L931.8,494.4 L932.0,494.3 L932.2,494.2 L932.5,494.1 L932.8,493.9 L933.0,493.8 L933.2,493.6 L933.5,493.4 L933.8,493.3 L934.0,493.1 L934.2,492.9 L934.5,492.8 L934.8,492.6 L935.0,492.5 L935.2,492.4 L935.5,492.3 L935.8,492.3 L936.0,492.2 L936.2,492.2 L936.5,492.2 L936.8,492.3 L937.0,492.3 L937.2,492.4 L937.5,492.5 L937.8,492.7 L938.0,492.8 L938.2,493.0 L938.5,493.2 L938.8,493.4 L939.0,493.6 L939.2,493.8 L939.5,494.0 L939.8,494.2 L940.0,494.4 L940.2,494.6 L940.5,494.8 L940.8,494.9 L941.0,495.0 L941.2,495.1 L941.5,495.2 L941.8,495.2 L942.0,495.2 L942.2,495.2 L942.5,495.2 L942.8,495.1 L943.0,495.0 L943.2,494.8 L943.5,494.7 L943.8,494.5 L944.0,494.3 L944.2,494.1 L944.5,493.8 L944.8,493.6 L945.0,493.4 L945.2,493.1 L945.5,492.9 L945.8,492.7 L946.0,492.5 L946.2,492.3 L946.5,492.2 L946.8,492.0 L947.0,491.9 L947.2,491.9 L947.5,491.8 L947.8,491.8 L948.0,491.9 L948.2,491.9 L948.5,492.0 L948.8,492.1 L949.0,492.3 L949.2,492.5 L949.5,492.7 L949.8,492.9 L950.0,493.1 L950.2,493.4 L950.5,493.6 L950.8,493.8" fill="none" stroke="#77ac30" stroke-width="1"/><path d="M364.5,493.8 L364.8,493.8 L365.0,493.8 L365.2,493.8 L365.5,493.8 L365.8,493.8 L366.0,493.8 L366.2,493.8 L366.5,493.8 L366.8,493.8 L367.0,493.8 L367.2,493.8 L367.5,493.8 L367.8,493.8 L368.0,493.8 L368.2,493.8 L368.5,493.8 L368.8,493.8 L369.0,493.8 L369.2,493.8 L369.5,493.8 L369.8,493.8 L370.0,493.8 L370.2,493.8 L370.5,493.8 L370.8,493.8 L371.0,493.8 L371.2,493.8 L371.5,493.8 L371.8,493.8 L372.0,493.8 L372.2,493.8 L372.5,493.8 L372.8,493.8 L373.0,493.8 L373.2,493.8 L373.5,493.8 L373.8,493.8 L374.0,493.8 L374.2,493.8 L374.5,493.8 L374.8,493.8 L375.0,493.8 L375.2,493.8 L375.5,493.8 L375.8,493.8 L376.0,493.8 L376.2,493.8 L376.5,493.8 L376.8,493.8 L377.0,493.8 L377.2,493.8 L377.5,493.8 L377.8,493.8 L378.0,493.8 L378.2,493.8 L378.5,493.8 L378.8,493.8 L379.0,493.8 L379.2,493.8 L379.5,493.8 L379.8,493.8 L380.0,493.8 L380.2,493.8 L380.5,493.8 L380.8,493.8 L381.0,493.8 L381.2,493.8 L381.5,493.8 L381.8,493.8 L382.0,493.8 L382.2,493.8 L382.5,493.8 L382.8,493.8 L383.0,493.8 L383.2,493.8 L383.5,493.8 L383.8,493.8 L384.0,493.8 L384.2,493.8 L384.5,493.8 L384.8,493.8 L385.0,493.8 L385.2,493.8 L385.5,493.8 L385.8,493.8 L386.0,493.8 L386.2,493.8 L386.5,493.8 L386.8,493.8 L387.0,493.8 L387.2,493.8 L387.5,493.8 L387.8,493.8 L388.0,493.8 L388.2,493.8 L388.5,493.8 L388.8,493.8 L389.0,493.8 L389.2,493.8 L389.5,493.8 L389.8,493.8 L390.0,493.8 L390.2,493.8 L390.5,493.8 L390.8,493.8 L391.0,493.8 L391.2,493.8 L391.5,493.8 L391.8,493.8 L392.0,493.8 L392.2,493.8 L392.5,493.8 L392.8,493.8 L393.0,493.8 L393.2,493.8 L393.5,493.8 L393.8,493.8 L394.0,493.8 L394.2,493.8 L394.5,493.8 L394.8,493.8 L395.0,493.8 L395.2,493.8 L395.5,493.8 L395.8,493.8 L396.0,493.8 L396.2,493.8 L396.5,493.8 L396.8,493.8 L397.0,493.8 L397.2,493.8 L397.5,493.8 L397.8,493.8 L398.0,493.8 L398.2,493.8 L398.5,493.8 L398.8,493.8 L399.0,493.8 L399.2,493.8 L399.5,493.8 L399.8,493.8 L400.0,493.8 L400.2,493.8 L400.5,493.8 L400.8,493.8 L401.0,493.8 L401.2,493.8 L401.5,493.8 L401.8,493.8 L402.0,493.8 L402.2,493.8 L402.5,493.8 L402.8,493.8 L403.0,493.8 L403.2,493.8 L403.5,493.8 L403.8,493.8 L404.0,493.8 L404.2,493.8 L404.5,493.8 L404.8,493.8 L405.0,493.8 L405.2,493.8 L405.5,493.8 L405.8,493.8 L406.0,493.8 L406.2,493.8 L406.5,493.8 L406.8,493.8 L407.0,493.8 L407.2,493.8 L407.5,493.8 L407.8,493.8 L408.0,493.8 L408.2,493.8 L408.5,493.8 L408.8,493.8 L409.0,493.8 L409.2,493.8 L409.5,493.8 L409.8,493.8 L410.0,493.8 L410.2,493.8 L410.5,493.8 L410.8,493.8 L411.0,493.8 L411.2,493.8 L411.5,493.8 L411.8,493.8 L412.0,493.8 L412.2,493.8 L412.5,493.8 L412.8,493.8 L413.0,493.8 L413.2,493.8 L413.5,493.8 L413.8,493.8 L414.0,493.8 L414.2,493.8 L414.5,493.8 L414.8,493.8 L415.0,493.8 L415.2,493.8 L415.5,493.8 L415.8,493.8 L416.0,493.8 L416.2,493.8 L416.5,493.8 L416.8,493.8 L417.0,493.8 L417.2,493.8 L417.5,493.8 L417.8,493.8 L418.0,493.8 L418.2,493.8 L418.5,493.8 L418.8,493.8 L419.0,493.8 L419.2,493.8 L419.5,493.8 L419.8,493.8 L420.0,493.8 L420.2,493.8 L420.5,493.8 L420.8,493.8 L421.0,493.8 L421.2,493.8 L421.5,493.8 L421.8,493.8 L422.0,493.8 L422.2,493.8 L422.5,493.8 L422.8,493.8 L423.0,493.8 L423.2,493.8 L423.5,493.8 L423.8,493.8 L424.0,493.8 L424.2,493.8 L424.5,493.8 L424.8,493.8 L425.0,493.8 L425.2,493.8 L425.5,493.8 L425.8,493.8 L426.0,493.8 L426.2,493.8 L426.5,493.8 L426.8,493.8 L427.0,493.8 L427.2,493.8 L427.5,493.8 L427.8,493.8 L428.0,493.8 L428.2,493.8 L428.5,493.8 L428.8,493.8 L429.0,493.8 L429.2,493.8 L429.5,493.8 L429.8,493.8 L430.0,493.8 L430.2,493.8 L430.5,493.8 L430.8,493.8 L431.0,493.8 L431.2,493.8 L431.5,493.8 L431.8,493.8 L432.0,493.8 L432.2,493.8 L432.5,493.8 L432.8,493.8 L433.0,493.8 L433.2,493.8 L433.5,493.8 L433.8,493.8 L434.0,493.8 L434.2,493.8 L434.5,493.7 L434.8,493.8 L435.0,493.9 L435.2,493.8 L435.5,493.5 L435.8,494.0 L436.0,494.1 L436.2,493.3 L436.5,493.3 L436.8,495.8 L437.0,494.5 L437.2,488.2 L437.5,495.8 L437.8,500.1 L438.0,491.3 L438.2,488.2 L438.5,499.2 L438.8,498.1 L439.0,488.9 L439.2,494.7 L439.5,498.3 L439.8,492.7 L440.0,490.2 L440.2,495.7 L440.5,495.6 L440.8,491.5 L441.0,492.2 L441.2,497.2 L441.5,493.5 L441.8,491.4 L442.0,494.1 L442.2,496.2 L442.5,492.3 L442.8,491.9 L443.0,496.0 L443.2,494.6 L443.5,491.7 L443.8,494.0 L444.0,494.9 L444.2,493.2 L444.5,492.5 L444.8,494.5 L445.0,494.6 L445.2,493.2 L445.5,493.3 L445.8,494.7 L446.0,494.0 L446.2,492.9 L446.5,493.9 L446.8,494.4 L447.0,493.5 L447.2,493.1 L447.5,494.3 L447.8,494.0 L448.0,493.2 L448.2,493.8 L448.5,494.2 L448.8,493.6 L449.0,493.4 L449.2,494.1 L449.5,494.0 L449.8,493.6 L450.0,493.7 L450.2,494.2 L450.5,493.8 L450.8,493.4 L451.0,493.9 L451.2,494.0 L451.5,493.6 L451.8,493.7 L452.0,494.0 L452.2,493.8 L452.5,493.6 L452.8,493.9 L453.0,493.9 L453.2,493.8 L453.5,493.7 L453.8,493.8 L454.0,493.9 L454.2,493.7 L454.5,493.8 L454.8,493.9 L455.0,493.8 L455.2,493.7 L455.5,493.8 L455.8,493.9 L456.0,493.7 L456.2,493.8 L456.5,493.9 L456.8,493.8 L457.0,493.7 L457.2,494.0 L457.5,493.8 L457.8,493.2 L458.0,494.0 L458.2,495.0 L458.5,493.0 L458.8,492.0 L459.0,498.5 L459.2,495.4 L459.5,487.0 L459.8,497.6 L460.0,509.4 L460.2,487.5 L460.5,483.9 L460.8,497.4 L461.0,501.9 L461.2,486.0 L461.5,493.0 L461.8,502.5 L462.0,495.5 L462.2,487.8 L462.5,493.8 L462.8,499.5 L463.0,489.6 L463.2,491.2 L463.5,498.6 L463.8,496.4 L464.0,489.0 L464.2,494.2 L464.5,498.1 L464.8,493.2 L465.0,491.1 L465.2,495.1 L465.5,495.0 L465.8,491.7 L466.0,492.8 L466.2,495.8 L466.5,494.3 L466.8,492.4 L467.0,494.2 L467.2,495.0 L467.5,492.8 L467.8,493.3 L468.0,495.1 L468.2,494.4 L468.5,492.8 L468.8,493.8 L469.0,494.5 L469.2,493.5 L469.5,493.2 L469.8,494.1 L470.0,494.3 L470.2,493.3 L470.5,493.6 L470.8,494.3 L471.0,493.7 L471.2,493.5 L471.5,493.9 L471.8,494.1 L472.0,493.7 L472.2,493.6 L472.5,494.1 L472.8,493.8 L473.0,493.6 L473.2,493.8 L473.5,493.9 L473.8,493.7 L474.0,493.6 L474.2,493.9 L474.5,493.9 L474.8,493.7 L475.0,493.8 L475.2,493.9 L475.5,493.8 L475.8,493.7 L476.0,493.8 L476.2,493.9 L476.5,493.8 L476.8,493.7 L477.0,493.8 L477.2,493.8 L477.5,493.7 L477.8,493.8 L478.0,493.8 L478.2,493.8 L478.5,493.8 L478.8,493.8 L479.0,493.8 L479.2,493.8 L479.5,493.8 L479.8,493.8 L480.0,493.8 L480.2,493.8 L480.5,493.9 L480.8,493.7 L481.0,493.7 L481.2,494.3 L481.5,493.7 L481.8,492.9 L482.0,494.6 L482.2,495.3 L482.5,492.9 L482.8,493.3 L483.0,494.7 L483.2,494.1 L483.5,493.2 L483.8,493.8 L484.0,494.2 L484.2,493.7 L484.5,493.5 L484.8,494.0 L485.0,494.1 L485.2,493.7 L485.5,493.7 L485.8,494.0 L486.0,493.8 L486.2,493.6 L486.5,493.9 L486.8,493.9 L487.0,493.8 L487.2,493.7 L487.5,493.9 L487.8,493.8 L488.0,493.8 L488.2,493.8 L488.5,493.8 L488.8,493.8 L489.0,493.8 L489.2,493.8 L489.5,493.8 L489.8,493.8 L490.0,493.8 L490.2,493.8 L490.5,493.8 L490.8,493.8 L491.0,493.8 L491.2,493.8 L491.5,493.8 L491.8,493.8 L492.0,493.8 L492.2,493.8 L492.5,493.8 L492.8,493.8 L493.0,493.8 L493.2,493.8 L493.5,493.8 L493.8,493.8 L494.0,493.8 L494.2,493.8 L494.5,493.8 L494.8,493.8 L495.0,493.8 L495.2,493.8 L495.5,493.8 L495.8,493.7 L496.0,493.7 L496.2,494.1 L496.5,493.9 L496.8,493.2 L497.0,494.0 L497.2,494.6 L497.5,493.4 L497.8,493.6 L498.0,494.2 L498.2,494.0 L498.5,493.5 L498.8,493.8 L499.0,494.0 L499.2,493.8 L499.5,493.6 L499.8,493.9 L500.0,493.9 L500.2,493.7 L500.5,493.8 L500.8,493.9 L501.0,493.8 L501.2,493.8 L501.5,493.8 L501.8,493.8 L502.0,493.8 L502.2,493.8 L502.5,493.8 L502.8,493.8 L503.0,493.8 L503.2,493.8 L503.5,493.8 L503.8,493.8 L504.0,493.8 L504.2,493.8 L504.5,493.8 L504.8,493.8 L505.0,493.8 L505.2,493.8 L505.5,493.8 L505.8,493.8 L506.0,493.8 L506.2,493.8 L506.5,493.8 L506.8,493.8 L507.0,493.8 L507.2,493.8 L507.5,493.8 L507.8,493.8 L508.0,493.8 L508.2,493.8 L508.5,493.8 L508.8,493.8 L509.0,493.8 L509.2,493.8 L509.5,493.8 L509.8,493.8 L510.0,493.8 L510.2,493.8 L510.5,493.8 L510.8,493.8 L511.0,493.8 L511.2,493.8 L511.5,493.8 L511.8,493.8 L512.0,493.8 L512.2,493.8 L512.5,493.8 L512.8,493.8 L513.0,493.8 L513.2,493.8 L513.5,493.8 L513.8,493.8 L514.0,493.7 L514.2,493.9 L514.5,493.8 L514.8,493.6 L515.0,493.9 L515.2,494.3 L515.5,493.3 L515.8,493.0 L516.0,496.1 L516.2,496.1 L516.5,489.5 L516.8,493.3 L517.0,500.6 L517.2,492.3 L517.5,488.2 L517.8,496.8 L518.0,495.9 L518.2,491.2 L518.5,492.5 L518.8,495.4 L519.0,494.3 L519.2,492.2 L519.5,494.1 L519.8,494.6 L520.0,493.2 L520.2,493.4 L520.5,494.2 L520.8,494.0 L521.0,493.5 L521.2,493.8 L521.5,494.1 L521.8,493.7 L522.0,493.6 L522.2,493.9 L522.5,493.9 L522.8,493.7 L523.0,493.8 L523.2,493.9 L523.5,493.8 L523.8,493.8 L524.0,493.8 L524.2,493.8 L524.5,493.8 L524.8,493.8 L525.0,493.8 L525.2,493.8 L525.5,493.8 L525.8,493.8 L526.0,493.8 L526.2,493.8 L526.5,493.8 L526.8,493.8 L527.0,493.8 L527.2,493.8 L527.5,493.8 L527.8,493.8 L528.0,493.8 L528.2,493.8 L528.5,493.8 L528.8,493.8 L529.0,493.8 L529.2,493.8 L529.5,493.8 L529.8,493.8 L530.0,493.8 L530.2,493.8 L530.5,493.8 L530.8,493.8 L531.0,493.8 L531.2,493.8 L531.5,493.8 L531.8,493.8 L532.0,493.8 L532.2,493.8 L532.5,493.8 L532.8,493.8 L533.0,493.8 L533.2,493.8 L533.5,493.8 L533.8,493.8 L534.0,493.8 L534.2,493.8 L534.5,493.8 L534.8,493.8 L535.0,493.8 L535.2,493.8 L535.5,493.8 L535.8,493.8 L536.0,493.8 L536.2,493.8 L536.5,493.8 L536.8,493.8 L537.0,493.8 L537.2,493.8 L537.5,493.8 L537.8,493.8 L538.0,493.8 L538.2,493.8 L538.5,493.8 L538.8,493.8 L539.0,493.8 L539.2,493.8 L539.5,493.8 L539.8,493.8 L540.0,493.8 L540.2,493.8 L540.5,493.8 L540.8,493.8 L541.0,493.8 L541.2,493.8 L541.5,493.8 L541.8,493.8 L542.0,493.8 L542.2,493.8 L542.5,493.8 L542.8,493.8 L543.0,493.8 L543.2,493.8 L543.5,493.8 L543.8,493.7 L544.0,493.7 L544.2,494.0 L544.5,493.8 L544.8,493.3 L545.0,493.8 L545.2,494.4 L545.5,493.2 L545.8,493.4 L546.0,494.4 L546.2,494.2 L546.5,493.3 L546.8,493.8 L547.0,494.3 L547.2,493.7 L547.5,493.5 L547.8,493.9 L548.0,494.0 L548.2,493.5 L548.5,493.8 L548.8,494.0 L549.0,493.8 L549.2,493.6 L549.5,493.9 L549.8,493.9 L550.0,493.7 L550.2,493.7 L550.5,493.9 L550.8,493.8 L551.0,493.7 L551.2,493.8 L551.5,493.9 L551.8,493.8 L552.0,493.7 L552.2,493.9 L552.5,493.9 L552.8,493.8 L553.0,493.8 L553.2,493.8 L553.5,493.8 L553.8,493.8 L554.0,493.8 L554.2,493.8 L554.5,493.8 L554.8,493.8 L555.0,493.8 L555.2,493.8 L555.5,493.8 L555.8,493.8 L556.0,493.8 L556.2,493.8 L556.5,493.8 L556.8,493.8 L557.0,493.8 L557.2,493.8 L557.5,493.8 L557.8,493.8 L558.0,493.8 L558.2,493.8 L558.5,493.8 L558.8,493.8 L559.0,493.8 L559.2,493.8 L559.5,493.8 L559.8,493.8 L560.0,493.8 L560.2,493.8 L560.5,493.8 L560.8,493.8 L561.0,493.8 L561.2,493.8 L561.5,493.8 L561.8,493.8 L562.0,493.8 L562.2,493.8 L562.5,493.8 L562.8,493.8 L563.0,493.8 L563.2,493.8 L563.5,493.8 L563.8,493.8 L564.0,493.8 L564.2,493.8 L564.5,493.8 L564.8,493.8 L565.0,493.8 L565.2,493.8 L565.5,493.8 L565.8,493.8 L566.0,493.8 L566.2,493.8 L566.5,493.8 L566.8,493.8 L567.0,493.8 L567.2,493.8 L567.5,493.8 L567.8,493.8 L568.0,493.8 L568.2,493.8 L568.5,493.8 L568.8,493.8 L569.0,493.8 L569.2,493.8 L569.5,493.8 L569.8,493.8 L570.0,493.8 L570.2,493.8 L570.5,493.8 L570.8,493.8 L571.0,493.8 L571.2,493.8 L571.5,493.8 L571.8,493.8 L572.0,493.8 L572.2,493.8 L572.5,493.8 L572.8,493.8 L573.0,493.8 L573.2,493.8 L573.5,493.8 L573.8,493.8 L574.0,493.8 L574.2,493.8 L574.5,493.8 L574.8,493.8 L575.0,493.8 L575.2,493.8 L575.5,493.8 L575.8,493.8 L576.0,493.8 L576.2,493.8 L576.5,493.8 L576.8,493.8 L577.0,493.8 L577.2,493.8 L577.5,493.8 L577.8,493.8 L578.0,493.8 L578.2,493.8 L578.5,493.8 L578.8,493.7 L579.0,493.8 L579.2,494.1 L579.5,493.9 L579.8,493.3 L580.0,494.3 L580.2,494.4 L580.5,493.3 L580.8,493.5 L581.0,494.2 L581.2,493.9 L581.5,493.5 L581.8,493.8 L582.0,494.0 L582.2,493.8 L582.5,493.6 L582.8,493.9 L583.0,493.9 L583.2,493.7 L583.5,493.8 L583.8,493.9 L584.0,493.8 L584.2,493.7 L584.5,493.8 L584.8,493.8 L585.0,493.8 L585.2,493.8 L585.5,493.8 L585.8,493.8 L586.0,493.8 L586.2,493.8 L586.5,493.8 L586.8,493.8 L587.0,493.8 L587.2,493.8 L587.5,493.8 L587.8,493.8 L588.0,493.8 L588.2,493.8 L588.5,493.8 L588.8,493.8 L589.0,493.8 L589.2,493.8 L589.5,493.8 L589.8,493.8 L590.0,493.8 L590.2,493.8 L590.5,493.8 L590.8,493.8 L591.0,493.8 L591.2,493.8 L591.5,493.8 L591.8,493.8 L592.0,493.8 L592.2,493.8 L592.5,493.8 L592.8,493.8 L593.0,493.8 L593.2,493.8 L593.5,493.8 L593.8,493.8 L594.0,493.8 L594.2,493.8 L594.5,493.8 L594.8,493.8 L595.0,493.8 L595.2,493.8 L595.5,493.8 L595.8,493.8 L596.0,493.8 L596.2,493.8 L596.5,493.8 L596.8,493.8 L597.0,493.8 L597.2,493.8 L597.5,493.8 L597.8,493.8 L598.0,493.8 L598.2,493.8 L598.5,493.8 L598.8,493.8 L599.0,493.8 L599.2,493.8 L599.5,493.8 L599.8,493.8 L600.0,493.8 L600.2,493.8 L600.5,493.8 L600.8,493.8 L601.0,493.8 L601.2,493.8 L601.5,493.8 L601.8,493.8 L602.0,493.8 L602.2,493.8 L602.5,493.8 L602.8,493.8 L603.0,493.8 L603.2,493.8 L603.5,493.8 L603.8,493.8 L604.0,493.8 L604.2,493.8 L604.5,493.8 L604.8,493.8 L605.0,493.8 L605.2,493.8 L605.5,493.8 L605.8,493.8 L606.0,493.8 L606.2,493.8 L606.5,493.8 L606.8,493.8 L607.0,493.8 L607.2,493.8 L607.5,493.8 L607.8,493.8 L608.0,493.8 L608.2,493.8 L608.5,493.8 L608.8,493.8 L609.0,493.8 L609.2,493.8 L609.5,493.8 L609.8,493.8 L610.0,493.8 L610.2,493.8 L610.5,493.8 L610.8,493.8 L611.0,493.8 L611.2,493.8 L611.5,493.9 L611.8,493.7 L612.0,493.6 L612.2,494.0 L612.5,494.2 L612.8,492.9 L613.0,493.2 L613.2,495.8 L613.5,493.9 L613.8,490.1 L614.0,496.7 L614.2,499.9 L614.5,489.3 L614.8,490.5 L615.0,497.4 L615.2,495.4 L615.5,489.2 L615.8,494.8 L616.0,499.7 L616.2,492.8 L616.5,490.9 L616.8,495.4 L617.0,495.9 L617.2,489.8 L617.5,492.3 L617.8,497.2 L618.0,495.0 L618.2,490.6 L618.5,494.6 L618.8,497.1 L619.0,491.9 L619.2,491.3 L619.5,495.6 L619.8,494.9 L620.0,491.0 L620.2,493.1 L620.5,496.2 L620.8,493.2 L621.0,492.4 L621.2,494.6 L621.5,495.2 L621.8,492.1 L622.0,493.4 L622.2,495.6 L622.5,493.6 L622.8,492.4 L623.0,494.5 L623.2,495.1 L623.5,493.1 L623.8,493.0 L624.0,494.7 L624.2,494.1 L624.5,492.7 L624.8,494.0 L625.0,494.8 L625.2,493.7 L625.5,493.0 L625.8,494.5 L626.0,494.2 L626.2,493.2 L626.5,493.7 L626.8,494.4 L627.0,494.0 L627.2,493.1 L627.5,494.1 L627.8,494.3 L628.0,493.4 L628.2,493.5 L628.5,494.2 L628.8,494.0 L629.0,493.3 L629.2,493.7 L629.5,494.1 L629.8,493.6 L630.0,493.5 L630.2,494.0 L630.5,494.1 L630.8,493.5 L631.0,493.7 L631.2,494.1 L631.5,493.8 L631.8,493.6 L632.0,493.8 L632.2,494.0 L632.5,493.7 L632.8,493.6 L633.0,494.0 L633.2,493.8 L633.5,493.6 L633.8,493.8 L634.0,494.0 L634.2,493.7 L634.5,493.7 L634.8,493.9 L635.0,493.9 L635.2,493.7 L635.5,493.8 L635.8,493.9 L636.0,493.8 L636.2,493.7 L636.5,493.8 L636.8,493.9 L637.0,493.7 L637.2,493.7 L637.5,493.9 L637.8,493.8 L638.0,493.7 L638.2,493.8 L638.5,493.9 L638.8,493.8 L639.0,493.7 L639.2,493.8 L639.5,493.8 L639.8,493.8 L640.0,493.8 L640.2,493.9 L640.5,493.8 L640.8,493.8 L641.0,493.8 L641.2,493.8 L641.5,493.8 L641.8,493.8 L642.0,493.8 L642.2,493.8 L642.5,493.8 L642.8,493.8 L643.0,493.8 L643.2,493.8 L643.5,493.8 L643.8,493.8 L644.0,493.8 L644.2,493.8 L644.5,493.8 L644.8,493.8 L645.0,493.8 L645.2,493.8 L645.5,493.8 L645.8,493.8 L646.0,493.8 L646.2,493.8 L646.5,493.8 L646.8,493.8 L647.0,493.8 L647.2,493.8 L647.5,493.8 L647.8,493.8 L648.0,493.8 L648.2,493.8 L648.5,493.8 L648.8,493.8 L649.0,493.8 L649.2,493.8 L649.5,493.8 L649.8,493.8 L650.0,493.8 L650.2,493.8 L650.5,493.8 L650.8,493.8 L651.0,493.8 L651.2,493.8 L651.5,493.8 L651.8,493.8 L652.0,493.8 L652.2,493.8 L652.5,493.8 L652.8,493.8 L653.0,493.8 L653.2,493.8 L653.5,493.8 L653.8,493.8 L654.0,493.8 L654.2,493.8 L654.5,493.8 L654.8,493.8 L655.0,493.8 L655.2,493.8 L655.5,493.8 L655.8,493.8 L656.0,493.8 L656.2,493.8 L656.5,493.8 L656.8,493.8 L657.0,493.8 L657.2,493.8 L657.5,493.8 L657.8,493.8 L658.0,493.8 L658.2,493.8 L658.5,493.8 L658.8,493.8 L659.0,493.8 L659.2,493.8 L659.5,493.8 L659.8,493.8 L660.0,493.8 L660.2,493.8 L660.5,493.8 L660.8,493.8 L661.0,493.8 L661.2,493.8 L661.5,493.8 L661.8,493.8 L662.0,493.8 L662.2,493.8 L662.5,493.8 L662.8,493.8 L663.0,493.8 L663.2,493.8 L663.5,493.8 L663.8,493.8 L664.0,493.8 L664.2,493.8 L664.5,493.8 L664.8,493.8 L665.0,493.8 L665.2,493.8 L665.5,493.8 L665.8,493.8 L666.0,493.8 L666.2,493.8 L666.5,493.8 L666.8,493.8 L667.0,493.8 L667.2,493.8 L667.5,493.8 L667.8,493.8 L668.0,493.8 L668.2,493.8 L668.5,493.8 L668.8,493.8 L669.0,493.8 L669.2,493.8 L669.5,493.8 L669.8,493.8 L670.0,493.8 L670.2,493.8 L670.5,493.8 L670.8,493.8 L671.0,493.8 L671.2,493.8 L671.5,493.8 L671.8,493.8 L672.0,493.8 L672.2,493.8 L672.5,493.8 L672.8,493.8 L673.0,493.8 L673.2,493.8 L673.5,493.8 L673.8,493.8 L674.0,493.8 L674.2,493.8 L674.5,493.8 L674.8,493.8 L675.0,493.8 L675.2,493.8 L675.5,493.8 L675.8,493.8 L676.0,493.8 L676.2,493.8 L676.5,493.8 L676.8,493.8 L677.0,493.8 L677.2,493.8 L677.5,493.8 L677.8,493.8 L678.0,493.8 L678.2,493.8 L678.5,493.8 L678.8,493.8 L679.0,493.8 L679.2,493.8 L679.5,493.8 L679.8,493.8 L680.0,493.8 L680.2,493.8 L680.5,493.8 L680.8,493.8 L681.0,493.8 L681.2,493.8 L681.5,493.8 L681.8,493.8 L682.0,493.8 L682.2,493.8 L682.5,493.8 L682.8,493.8 L683.0,493.8 L683.2,493.8 L683.5,493.8 L683.8,493.8 L684.0,493.8 L684.2,493.8 L684.5,493.8 L684.8,493.8 L685.0,493.8 L685.2,493.8 L685.5,493.8 L685.8,493.8 L686.0,493.8 L686.2,493.8 L686.5,493.8 L686.8,493.8 L687.0,493.8 L687.2,493.8 L687.5,493.8 L687.8,493.8 L688.0,493.8 L688.2,493.8 L688.5,493.8 L688.8,493.8 L689.0,493.8 L689.2,493.8 L689.5,493.8 L689.8,493.8 L690.0,493.8 L690.2,493.8 L690.5,493.8 L690.8,493.8 L691.0,493.8 L691.2,493.8 L691.5,493.8 L691.8,493.8 L692.0,493.8 L692.2,493.8 L692.5,493.8 L692.8,493.8 L693.0,493.8 L693.2,493.8 L693.5,493.8 L693.8,493.8 L694.0,493.8 L694.2,493.8 L694.5,493.8 L694.8,493.8 L695.0,493.8 L695.2,493.8 L695.5,493.8 L695.8,493.8 L696.0,493.8 L696.2,493.8 L696.5,493.8 L696.8,493.8 L697.0,493.8 L697.2,493.8 L697.5,493.8 L697.8,493.8 L698.0,493.8 L698.2,493.8 L698.5,493.8 L698.8,493.8 L699.0,493.8 L699.2,493.8 L699.5,493.8 L699.8,493.8 L700.0,493.8 L700.2,493.8 L700.5,493.8 L700.8,493.8 L701.0,493.8 L701.2,493.8 L701.5,493.8 L701.8,493.8 L702.0,493.8 L702.2,493.8 L702.5,493.8 L702.8,493.8 L703.0,493.8 L703.2,493.8 L703.5,493.8 L703.8,493.8 L704.0,493.8 L704.2,493.8 L704.5,493.8 L704.8,493.8 L705.0,493.8 L705.2,493.8 L705.5,493.8 L705.8,493.8 L706.0,493.8 L706.2,493.8 L706.5,493.8 L706.8,493.8 L707.0,493.8 L707.2,493.8 L707.5,493.8 L707.8,493.8 L708.0,493.8 L708.2,493.8 L708.5,493.8 L708.8,493.8 L709.0,493.8 L709.2,493.8 L709.5,493.8 L709.8,493.8 L710.0,493.8 L710.2,493.8 L710.5,493.8 L710.8,493.8 L711.0,493.8 L711.2,493.8 L711.5,493.8 L711.8,493.8 L712.0,493.8 L712.2,493.8 L712.5,493.8 L712.8,493.8 L713.0,493.8 L713.2,493.8 L713.5,493.8 L713.8,493.8 L714.0,493.8 L714.2,493.8 L714.5,493.8 L714.8,493.8 L715.0,493.8 L715.2,493.8 L715.5,493.8 L715.8,493.8 L716.0,493.8 L716.2,493.8 L716.5,493.8 L716.8,493.8 L717.0,493.8 L717.2,493.8 L717.5,493.8 L717.8,493.8 L718.0,493.8 L718.2,493.8 L718.5,493.8 L718.8,493.8 L719.0,493.8 L719.2,493.8 L719.5,493.8 L719.8,493.8 L720.0,493.8 L720.2,493.8 L720.5,493.8 L720.8,493.8 L721.0,493.8 L721.2,493.8 L721.5,493.8 L721.8,493.8 L722.0,493.8 L722.2,493.8 L722.5,493.8 L722.8,493.8 L723.0,493.8 L723.2,493.8 L723.5,493.8 L723.8,493.8 L724.0,493.8 L724.2,493.8 L724.5,493.8 L724.8,493.8 L725.0,493.8 L725.2,493.8 L725.5,493.8 L725.8,493.8 L726.0,493.8 L726.2,493.8 L726.5,493.8 L726.8,493.8 L727.0,493.8 L727.2,493.8 L727.5,493.8 L727.8,493.8 L728.0,493.8 L728.2,493.8 L728.5,493.8 L728.8,493.8 L729.0,493.8 L729.2,493.8 L729.5,493.8 L729.8,493.8 L730.0,493.8 L730.2,493.8 L730.5,493.8 L730.8,493.8 L731.0,493.8 L731.2,493.8 L731.5,493.8 L731.8,493.8 L732.0,493.8 L732.2,493.8 L732.5,493.8 L732.8,493.8 L733.0,493.8 L733.2,493.8 L733.5,493.8 L733.8,493.8 L734.0,493.8 L734.2,493.8 L734.5,493.8 L734.8,493.8 L735.0,493.8 L735.2,493.8 L735.5,493.8 L735.8,493.8 L736.0,493.8 L736.2,493.8 L736.5,493.8 L736.8,493.8 L737.0,493.8 L737.2,493.8 L737.5,493.8 L737.8,493.8 L738.0,493.8 L738.2,493.8 L738.5,493.8 L738.8,493.8 L739.0,493.8 L739.2,493.8 L739.5,493.8 L739.8,493.8 L740.0,493.8 L740.2,493.8 L740.5,493.8 L740.8,493.8 L741.0,493.8 L741.2,493.8 L741.5,493.8 L741.8,493.8 L742.0,493.8 L742.2,493.8 L742.5,493.8 L742.8,493.8 L743.0,493.8 L743.2,493.8 L743.5,493.8 L743.8,493.8 L744.0,493.8 L744.2,493.8 L744.5,493.8 L744.8,493.8 L745.0,493.8 L745.2,493.8 L745.5,493.8 L745.8,493.8 L746.0,493.8 L746.2,493.8 L746.5,493.8 L746.8,493.8 L747.0,493.8 L747.2,493.8 L747.5,493.8 L747.8,493.8 L748.0,493.8 L748.2,493.8 L748.5,493.8 L748.8,493.8 L749.0,493.8 L749.2,493.8 L749.5,493.8 L749.8,493.8 L750.0,493.8 L750.2,493.8 L750.5,493.8 L750.8,493.8 L751.0,493.8 L751.2,493.8 L751.5,493.8 L751.8,493.8 L752.0,493.8 L752.2,493.8 L752.5,493.8 L752.8,493.8 L753.0,493.8 L753.2,493.8 L753.5,493.8 L753.8,493.8 L754.0,493.8 L754.2,493.8 L754.5,493.8 L754.8,493.8 L755.0,493.8 L755.2,493.8 L755.5,493.8 L755.8,493.8 L756.0,493.8 L756.2,493.8 L756.5,493.8 L756.8,493.8 L757.0,493.8 L757.2,493.8 L757.5,493.8 L757.8,493.8 L758.0,493.8 L758.2,493.8 L758.5,493.8 L758.8,493.8 L759.0,493.8 L759.2,493.8 L759.5,493.8 L759.8,493.8 L760.0,493.8 L760.2,493.8 L760.5,493.8 L760.8,493.8 L761.0,493.8 L761.2,493.8 L761.5,493.8 L761.8,493.8 L762.0,493.8 L762.2,493.8 L762.5,493.8 L762.8,493.8 L763.0,493.8 L763.2,493.8 L763.5,493.8 L763.8,493.8 L764.0,493.8 L764.2,493.8 L764.5,493.8 L764.8,493.8 L765.0,493.8 L765.2,493.8 L765.5,493.8 L765.8,493.8 L766.0,493.8 L766.2,493.8 L766.5,493.8 L766.8,493.8 L767.0,493.8 L767.2,493.8 L767.5,493.8 L767.8,493.8 L768.0,493.8 L768.2,493.8 L768.5,493.8 L768.8,493.8 L769.0,493.8 L769.2,493.8 L769.5,493.8 L769.8,493.8 L770.0,493.8 L770.2,493.8 L770.5,493.8 L770.8,493.8 L771.0,493.8 L771.2,493.8 L771.5,493.8 L771.8,493.8 L772.0,493.8 L772.2,493.8 L772.5,493.8 L772.8,493.8 L773.0,493.8 L773.2,493.8 L773.5,493.8 L773.8,493.8 L774.0,493.8 L774.2,493.8 L774.5,493.8 L774.8,493.8 L775.0,493.8 L775.2,493.8 L775.5,493.8 L775.8,493.8 L776.0,493.8 L776.2,493.8 L776.5,493.8 L776.8,493.8 L777.0,493.8 L777.2,493.8 L777.5,493.8 L777.8,493.8 L778.0,493.8 L778.2,493.8 L778.5,493.8 L778.8,493.8 L779.0,493.8 L779.2,493.8 L779.5,493.8 L779.8,493.8 L780.0,493.8 L780.2,493.8 L780.5,493.8 L780.8,493.8 L781.0,493.8 L781.2,493.8 L781.5,493.8 L781.8,493.8 L782.0,493.8 L782.2,493.8 L782.5,493.8 L782.8,493.8 L783.0,493.8 L783.2,493.8 L783.5,493.8 L783.8,493.8 L784.0,493.8 L784.2,493.8 L784.5,493.8 L784.8,493.8 L785.0,493.8 L785.2,493.8 L785.5,493.8 L785.8,493.8 L786.0,493.8 L786.2,493.8 L786.5,493.8 L786.8,493.8 L787.0,493.8 L787.2,493.8 L787.5,493.8 L787.8,493.8 L788.0,493.8 L788.2,493.8 L788.5,493.8 L788.8,493.8 L789.0,493.8 L789.2,493.8 L789.5,493.8 L789.8,493.8 L790.0,493.8 L790.2,493.8 L790.5,493.8 L790.8,493.8 L791.0,493.8 L791.2,493.8 L791.5,493.8 L791.8,493.8 L792.0,493.8 L792.2,493.8 L792.5,493.8 L792.8,493.8 L793.0,493.8 L793.2,493.8 L793.5,493.8 L793.8,493.8 L794.0,493.8 L794.2,493.8 L794.5,493.8 L794.8,493.8 L795.0,493.8 L795.2,493.8 L795.5,493.8 L795.8,493.8 L796.0,493.8 L796.2,493.8 L796.5,493.8 L796.8,493.8 L797.0,493.8 L797.2,493.8 L797.5,493.8 L797.8,493.8 L798.0,493.8 L798.2,493.8 L798.5,493.8 L798.8,493.8 L799.0,493.8 L799.2,493.8 L799.5,493.8 L799.8,493.8 L800.0,493.8 L800.2,493.8 L800.5,493.8 L800.8,493.8 L801.0,493.8 L801.2,493.8 L801.5,493.8 L801.8,493.8 L802.0,493.8 L802.2,493.8 L802.5,493.8 L802.8,493.8 L803.0,493.8 L803.2,493.8 L803.5,493.8 L803.8,493.8 L804.0,493.8 L804.2,493.8 L804.5,493.8 L804.8,493.8 L805.0,493.8 L805.2,493.8 L805.5,493.8 L805.8,493.8 L806.0,493.8 L806.2,493.8 L806.5,493.8 L806.8,493.8 L807.0,493.8 L807.2,493.8 L807.5,493.8 L807.8,493.8 L808.0,493.8 L808.2,493.8 L808.5,493.8 L808.8,493.8 L809.0,493.8 L809.2,493.8 L809.5,493.8 L809.8,493.8 L810.0,493.8 L810.2,493.8 L810.5,493.8 L810.8,493.8 L811.0,493.8 L811.2,493.8 L811.5,493.8 L811.8,493.8 L812.0,493.8 L812.2,493.8 L812.5,493.8 L812.8,493.8 L813.0,493.8 L813.2,493.8 L813.5,493.8 L813.8,493.8 L814.0,493.8 L814.2,493.8 L814.5,493.8 L814.8,493.8 L815.0,493.8 L815.2,493.8 L815.5,493.8 L815.8,493.8 L816.0,493.8 L816.2,493.8 L816.5,493.8 L816.8,493.8 L817.0,493.8 L817.2,493.8 L817.5,493.8 L817.8,493.8 L818.0,493.8 L818.2,493.8 L818.5,493.8 L818.8,493.8 L819.0,493.8 L819.2,493.8 L819.5,493.8 L819.8,493.8 L820.0,493.8 L820.2,493.8 L820.5,493.8 L820.8,493.8 L821.0,493.8 L821.2,493.8 L821.5,493.8 L821.8,493.8 L822.0,493.8 L822.2,493.8 L822.5,493.8 L822.8,493.8 L823.0,493.8 L823.2,493.8 L823.5,493.8 L823.8,493.8 L824.0,493.8 L824.2,493.8 L824.5,493.8 L824.8,493.8 L825.0,493.8 L825.2,493.8 L825.5,493.8 L825.8,493.8 L826.0,493.8 L826.2,493.8 L826.5,493.8 L826.8,493.8 L827.0,493.8 L827.2,493.8 L827.5,493.8 L827.8,493.8 L828.0,493.8 L828.2,493.8 L828.5,493.8 L828.8,493.8 L829.0,493.8 L829.2,493.8 L829.5,493.8 L829.8,493.8 L830.0,493.8 L830.2,493.8 L830.5,493.8 L830.8,493.8 L831.0,493.8 L831.2,493.8 L831.5,493.8 L831.8,493.8 L832.0,493.8 L832.2,493.8 L832.5,493.8 L832.8,493.8 L833.0,493.8 L833.2,493.8 L833.5,493.8 L833.8,493.8 L834.0,493.8 L834.2,493.8 L834.5,493.8 L834.8,493.8 L835.0,493.8 L835.2,493.8 L835.5,493.8 L835.8,493.8 L836.0,493.8 L836.2,493.8 L836.5,493.8 L836.8,493.8 L837.0,493.8 L837.2,493.8 L837.5,493.8 L837.8,493.8 L838.0,493.8 L838.2,493.8 L838.5,493.8 L838.8,493.8 L839.0,493.8 L839.2,493.8 L839.5,493.8 L839.8,493.8 L840.0,493.8 L840.2,493.8 L840.5,493.8 L840.8,493.8 L841.0,493.8 L841.2,493.8 L841.5,493.8 L841.8,493.8 L842.0,493.8 L842.2,493.8 L842.5,493.8 L842.8,493.8 L843.0,493.8 L843.2,493.8 L843.5,493.8 L843.8,493.8 L844.0,493.8 L844.2,493.8 L844.5,493.8 L844.8,493.8 L845.0,493.8 L845.2,493.8 L845.5,493.8 L845.8,493.8 L846.0,493.8 L846.2,493.8 L846.5,493.8 L846.8,493.8 L847.0,493.8 L847.2,493.8 L847.5,493.8 L847.8,493.8 L848.0,493.8 L848.2,493.8 L848.5,493.8 L848.8,493.8 L849.0,493.8 L849.2,493.8 L849.5,493.8 L849.8,493.8 L850.0,493.8 L850.2,493.8 L850.5,493.8 L850.8,493.8 L851.0,493.8 L851.2,493.8 L851.5,493.8 L851.8,493.8 L852.0,493.8 L852.2,493.8 L852.5,493.8 L852.8,493.8 L853.0,493.8 L853.2,493.8 L853.5,493.8 L853.8,493.8 L854.0,493.8 L854.2,493.8 L854.5,493.8 L854.8,493.8 L855.0,493.8 L855.2,493.8 L855.5,493.8 L855.8,493.8 L856.0,493.8 L856.2,493.8 L856.5,493.8 L856.8,493.8 L857.0,493.8 L857.2,493.8 L857.5,493.8 L857.8,493.8 L858.0,493.8 L858.2,493.8 L858.5,493.8 L858.8,493.8 L859.0,493.8 L859.2,493.8 L859.5,493.8 L859.8,493.8 L860.0,493.8 L860.2,493.8 L860.5,493.8 L860.8,493.8 L861.0,493.8 L861.2,493.8 L861.5,493.8 L861.8,493.8 L862.0,493.8 L862.2,493.8 L862.5,493.8 L862.8,493.8 L863.0,493.8 L863.2,493.8 L863.5,493.8 L863.8,493.8 L864.0,493.8 L864.2,493.8 L864.5,493.8 L864.8,493.8 L865.0,493.8 L865.2,493.8 L865.5,493.8 L865.8,493.8 L866.0,493.8 L866.2,493.8 L866.5,493.8 L866.8,493.8 L867.0,493.8 L867.2,493.8 L867.5,493.8 L867.8,493.8 L868.0,493.8 L868.2,493.8 L868.5,493.8 L868.8,493.8 L869.0,493.8 L869.2,493.8 L869.5,493.8 L869.8,493.8 L870.0,493.8 L870.2,493.8 L870.5,493.8 L870.8,493.8 L871.0,493.8 L871.2,493.8 L871.5,493.8 L871.8,493.8 L872.0,493.8 L872.2,493.8 L872.5,493.8 L872.8,493.8 L873.0,493.8 L873.2,493.8 L873.5,493.8 L873.8,493.8 L874.0,493.8 L874.2,493.8 L874.5,493.8 L874.8,493.8 L875.0,493.8 L875.2,493.8 L875.5,493.8 L875.8,493.8 L876.0,493.8 L876.2,493.8 L876.5,493.8 L876.8,493.8 L877.0,493.8 L877.2,493.8 L877.5,493.8 L877.8,493.8 L878.0,493.8 L878.2,493.8 L878.5,493.8 L878.8,493.8 L879.0,493.8 L879.2,493.8 L879.5,493.8 L879.8,493.8 L880.0,493.8 L880.2,493.8 L880.5,493.8 L880.8,493.8 L881.0,493.8 L881.2,493.8 L881.5,493.8 L881.8,493.8 L882.0,493.8 L882.2,493.8 L882.5,493.8 L882.8,493.8 L883.0,493.8 L883.2,493.8 L883.5,493.8 L883.8,493.8 L884.0,493.8 L884.2,493.8 L884.5,493.8 L884.8,493.8 L885.0,493.8 L885.2,493.8 L885.5,493.8 L885.8,493.8 L886.0,493.8 L886.2,493.8 L886.5,493.8 L886.8,493.8 L887.0,493.8 L887.2,493.8 L887.5,493.8 L887.8,493.8 L888.0,493.8 L888.2,493.8 L888.5,493.8 L888.8,493.8 L889.0,493.8 L889.2,493.8 L889.5,493.8 L889.8,493.8 L890.0,493.8 L890.2,493.8 L890.5,493.8 L890.8,493.8 L891.0,493.8 L891.2,493.8 L891.5,493.8 L891.8,493.8 L892.0,493.8 L892.2,493.8 L892.5,493.8 L892.8,493.8 L893.0,493.8 L893.2,493.8 L893.5,493.8 L893.8,493.8 L894.0,493.8 L894.2,493.8 L894.5,493.8 L894.8,493.8 L895.0,493.8 L895.2,493.8 L895.5,493.8 L895.8,493.8 L896.0,493.8 L896.2,493.8 L896.5,493.8 L896.8,493.8 L897.0,493.8 L897.2,493.8 L897.5,493.8 L897.8,493.8 L898.0,493.8 L898.2,493.8 L898.5,493.8 L898.8,493.8 L899.0,493.8 L899.2,493.8 L899.5,493.8 L899.8,493.8 L900.0,493.8 L900.2,493.8 L900.5,493.8 L900.8,493.8 L901.0,493.8 L901.2,493.8 L901.5,493.8 L901.8,493.8 L902.0,493.8 L902.2,493.8 L902.5,493.8 L902.8,493.8 L903.0,493.8 L903.2,493.8 L903.5,493.8 L903.8,493.8 L904.0,493.8 L904.2,493.8 L904.5,493.8 L904.8,493.8 L905.0,493.8 L905.2,493.8 L905.5,493.8 L905.8,493.8 L906.0,493.8 L906.2,493.8 L906.5,493.8 L906.8,493.8 L907.0,493.8 L907.2,493.8 L907.5,493.8 L907.8,493.8 L908.0,493.8 L908.2,493.8 L908.5,493.8 L908.8,493.8 L909.0,493.8 L909.2,493.8 L909.5,493.8 L909.8,493.8 L910.0,493.8 L910.2,493.8 L910.5,493.8 L910.8,493.8 L911.0,493.8 L911.2,493.8 L911.5,493.8 L911.8,493.8 L912.0,493.8 L912.2,493.8 L912.5,493.8 L912.8,493.8 L913.0,493.8 L913.2,493.8 L913.5,493.8 L913.8,493.8 L914.0,493.8 L914.2,493.8 L914.5,493.8 L914.8,493.8 L915.0,493.8 L915.2,493.8 L915.5,493.8 L915.8,493.8 L916.0,493.8 L916.2,493.8 L916.5,493.8 L916.8,493.8 L917.0,493.8 L917.2,493.8 L917.5,493.8 L917.8,493.8 L918.0,493.8 L918.2,493.8 L918.5,493.8 L918.8,493.8 L919.0,493.8 L919.2,493.8 L919.5,493.8 L919.8,493.8 L920.0,493.8 L920.2,493.8 L920.5,493.8 L920.8,493.8 L921.0,493.8 L921.2,493.8 L921.5,493.8 L921.8,493.8 L922.0,493.8 L922.2,493.8 L922.5,493.8 L922.8,493.8 L923.0,493.8 L923.2,493.8 L923.5,493.8 L923.8,493.8 L924.0,493.8 L924.2,493.8 L924.5,493.8 L924.8,493.8 L925.0,493.8 L925.2,493.8 L925.5,493.8 L925.8,493.8 L926.0,493.8 L926.2,493.8 L926.5,493.8 L926.8,493.8 L927.0,493.8 L927.2,493.8 L927.5,493.8 L927.8,493.8 L928.0,493.8 L928.2,493.8 L928.5,493.8 L928.8,493.8 L929.0,493.8 L929.2,493.8 L929.5,493.8 L929.8,493.8 L930.0,493.8 L930.2,493.8 L930.5,493.8 L930.8,493.8 L931.0,493.8 L931.2,493.8 L931.5,493.8 L931.8,493.8 L932.0,493.8 L932.2,493.8 L932.5,493.8 L932.8,493.8 L933.0,493.8 L933.2,493.8 L933.5,493.8 L933.8,493.8 L934.0,493.8 L934.2,493.8 L934.5,493.8 L934.8,493.8 L935.0,493.8 L935.2,493.8 L935.5,493.8 L935.8,493.8 L936.0,493.8 L936.2,493.8 L936.5,493.8 L936.8,493.8 L937.0,493.8 L937.2,493.8 L937.5,493.8 L937.8,493.8 L938.0,493.8 L938.2,493.8 L938.5,493.8 L938.8,493.8 L939.0,493.8 L939.2,493.8 L939.5,493.8 L939.8,493.8 L940.0,493.8 L940.2,493.8 L940.5,493.8 L940.8,493.8 L941.0,493.8 L941.2,493.8 L941.5,493.8 L941.8,493.8 L942.0,493.8 L942.2,493.8 L942.5,493.8 L942.8,493.8 L943.0,493.8 L943.2,493.8 L943.5,493.8 L943.8,493.8 L944.0,493.8 L944.2,493.8 L944.5,493.8 L944.8,493.8 L945.0,493.8 L945.2,493.8 L945.5,493.8 L945.8,493.8 L946.0,493.8 L946.2,493.8 L946.5,493.8 L946.8,493.8 L947.0,493.8 L947.2,493.8 L947.5,493.8 L947.8,493.8 L948.0,493.8 L948.2,493.8 L948.5,493.8 L948.8,493.8 L949.0,493.8 L949.2,493.8 L949.5,493.8 L949.8,493.8 L950.0,493.8 L950.2,493.8 L950.5,493.8 L950.8,493.8" fill="none" stroke="#f07a40" stroke-width="1.6"/><polygon points="827,489.5 833,493.7 827,498" fill="#f07a40"/></g></g><defs><clipPath id="c4"><rect x="704" y="474" width="82" height="35"/></clipPath></defs><g clip-path="url(#c4)"><path d="M703.1,494.8 L703.3,494.8 L703.4,494.9 L703.6,494.9 L703.7,494.9 L703.8,494.9 L704.0,495.0 L704.1,495.0 L704.3,495.0 L704.4,495.0 L704.5,494.9 L704.7,494.9 L704.8,494.9 L705.0,494.8 L705.1,494.8 L705.3,494.8 L705.4,494.7 L705.5,494.6 L705.7,494.6 L705.8,494.5 L706.0,494.5 L706.1,494.4 L706.2,494.3 L706.4,494.3 L706.5,494.2 L706.7,494.1 L706.8,494.1 L707.0,494.0 L707.1,493.9 L707.2,493.9 L707.4,493.8 L707.5,493.8 L707.7,493.7 L707.8,493.7 L707.9,493.6 L708.1,493.5 L708.2,493.4 L708.4,493.4 L708.5,493.3 L708.6,493.2 L708.8,493.2 L708.9,493.1 L709.1,493.1 L709.2,493.0 L709.4,493.0 L709.5,492.9 L709.6,492.9 L709.8,492.9 L709.9,492.8 L710.1,492.8 L710.2,492.9 L710.3,492.9 L710.5,492.9 L710.6,492.9 L710.8,493.0 L710.9,493.0 L711.0,493.1 L711.2,493.2 L711.3,493.2 L711.5,493.3 L711.6,493.3 L711.8,493.4 L711.9,493.5 L712.0,493.5 L712.2,493.6 L712.3,493.6 L712.5,493.6 L712.6,493.7 L712.7,493.7 L712.9,493.7 L713.0,493.8 L713.2,493.8 L713.3,493.9 L713.4,493.9 L713.6,493.9 L713.7,494.0 L713.9,494.0 L714.0,494.0 L714.2,494.0 L714.3,494.1 L714.4,494.1 L714.6,494.1 L714.7,494.1 L714.9,494.1 L715.0,494.1 L715.1,494.1 L715.3,494.0 L715.4,494.0 L715.6,494.0 L715.7,493.9 L715.8,493.9 L716.0,493.9 L716.1,493.8 L716.3,493.8 L716.4,493.8 L716.6,493.8 L716.7,493.7 L716.8,493.7 L717.0,493.7 L717.1,493.7 L717.3,493.7 L717.4,493.7 L717.5,493.7 L717.7,493.7 L717.8,493.6 L718.0,493.6 L718.1,493.6 L718.2,493.6 L718.4,493.6 L718.5,493.6 L718.7,493.6 L718.8,493.6 L719.0,493.6 L719.1,493.6 L719.2,493.6 L719.4,493.6 L719.5,493.6 L719.7,493.6 L719.8,493.7 L719.9,493.7 L720.1,493.8 L720.2,493.8 L720.4,493.9 L720.5,494.0 L720.6,494.0 L720.8,494.1 L720.9,494.2 L721.1,494.3 L721.2,494.3 L721.4,494.4 L721.5,494.5 L721.6,494.5 L721.8,494.6 L721.9,494.6 L722.1,494.7 L722.2,494.7 L722.3,494.7 L722.5,494.7 L722.6,494.7 L722.8,494.6 L722.9,494.6 L723.0,494.5 L723.2,494.5 L723.3,494.4 L723.5,494.3 L723.6,494.2 L723.8,494.1 L723.9,494.1 L724.0,494.0 L724.2,493.9 L724.3,493.8 L724.5,493.7 L724.6,493.6 L724.7,493.5 L724.9,493.4 L725.0,493.3 L725.2,493.1 L725.3,493.0 L725.5,492.9 L725.6,492.7 L725.7,492.6 L725.9,492.4 L726.0,492.3 L726.2,492.2 L726.3,492.1 L726.4,492.0 L726.6,491.9 L726.7,491.8 L726.9,491.8 L727.0,491.8 L727.1,491.8 L727.3,491.8 L727.4,491.9 L727.6,491.9 L727.7,492.0 L727.9,492.1 L728.0,492.2 L728.1,492.4 L728.3,492.5 L728.4,492.6 L728.6,492.8 L728.7,492.9 L728.8,493.1 L729.0,493.2 L729.1,493.3 L729.3,493.5 L729.4,493.6 L729.5,493.7 L729.7,493.8 L729.8,493.9 L730.0,494.0 L730.1,494.2 L730.3,494.3 L730.4,494.4 L730.5,494.5 L730.7,494.7 L730.8,494.8 L731.0,494.9 L731.1,495.1 L731.2,495.2 L731.4,495.3 L731.5,495.4 L731.7,495.5 L731.8,495.6 L731.9,495.7 L732.1,495.8 L732.2,495.8 L732.4,495.9 L732.5,495.9 L732.7,495.9 L732.8,495.9 L732.9,495.9 L733.1,495.9 L733.2,495.8 L733.4,495.7 L733.5,495.6 L733.6,495.5 L733.8,495.4 L733.9,495.3 L734.1,495.2 L734.2,495.0 L734.3,494.9 L734.5,494.7 L734.6,494.6 L734.8,494.4 L734.9,494.3 L735.1,494.1 L735.2,494.0 L735.3,493.9 L735.5,493.7 L735.6,493.6 L735.8,493.5 L735.9,493.4 L736.0,493.3 L736.2,493.2 L736.3,493.1 L736.5,492.9 L736.6,492.8 L736.7,492.7 L736.9,492.6 L737.0,492.4 L737.2,492.3 L737.3,492.2 L737.5,492.1 L737.6,492.0 L737.7,491.9 L737.9,491.8 L738.0,491.8 L738.2,491.7 L738.3,491.7 L738.4,491.6 L738.6,491.6 L738.7,491.6 L738.9,491.6 L739.0,491.6 L739.1,491.7 L739.3,491.8 L739.4,491.9 L739.6,492.0 L739.7,492.1 L739.9,492.2 L740.0,492.3 L740.1,492.5 L740.3,492.6 L740.4,492.7 L740.6,492.9 L740.7,493.0 L740.8,493.2 L741.0,493.3 L741.1,493.4 L741.3,493.5 L741.4,493.6 L741.6,493.7 L741.7,493.8 L741.8,493.9 L742.0,494.0 L742.1,494.1 L742.3,494.2 L742.4,494.3 L742.5,494.4 L742.7,494.5 L742.8,494.6 L743.0,494.7 L743.1,494.8 L743.2,494.9 L743.4,495.0 L743.5,495.0 L743.7,495.1 L743.8,495.2 L744.0,495.2 L744.1,495.3 L744.2,495.3 L744.4,495.4 L744.5,495.4 L744.7,495.4 L744.8,495.5 L744.9,495.5 L745.1,495.4 L745.2,495.4 L745.4,495.4 L745.5,495.4 L745.6,495.3 L745.8,495.3 L745.9,495.2 L746.1,495.2 L746.2,495.1 L746.4,495.0 L746.5,495.0 L746.6,494.9 L746.8,494.8 L746.9,494.7 L747.1,494.6 L747.2,494.5 L747.3,494.4 L747.5,494.4 L747.6,494.3 L747.8,494.2 L747.9,494.1 L748.0,494.0 L748.2,493.9 L748.3,493.8 L748.5,493.7 L748.6,493.7 L748.8,493.6 L748.9,493.5 L749.0,493.3 L749.2,493.2 L749.3,493.1 L749.5,493.0 L749.6,492.9 L749.7,492.8 L749.9,492.7 L750.0,492.6 L750.2,492.5 L750.3,492.4 L750.4,492.4 L750.6,492.4 L750.7,492.4 L750.9,492.4 L751.0,492.4 L751.2,492.5 L751.3,492.5 L751.4,492.5 L751.6,492.6 L751.7,492.6 L751.9,492.7 L752.0,492.7 L752.1,492.8 L752.3,492.9 L752.4,492.9 L752.6,493.0 L752.7,493.1 L752.8,493.1 L753.0,493.2 L753.1,493.3 L753.3,493.3 L753.4,493.4 L753.6,493.5 L753.7,493.5 L753.8,493.6 L754.0,493.7 L754.1,493.7 L754.3,493.8 L754.4,493.8 L754.5,493.9 L754.7,494.0 L754.8,494.0 L755.0,494.1 L755.1,494.2 L755.2,494.3 L755.4,494.3 L755.5,494.4 L755.7,494.5 L755.8,494.5 L756.0,494.6 L756.1,494.7 L756.2,494.7 L756.4,494.7 L756.5,494.8 L756.7,494.8 L756.8,494.8 L756.9,494.8 L757.1,494.8 L757.2,494.8 L757.4,494.7 L757.5,494.7 L757.6,494.7 L757.8,494.6 L757.9,494.5 L758.1,494.5 L758.2,494.4 L758.4,494.3 L758.5,494.3 L758.6,494.2 L758.8,494.1 L758.9,494.1 L759.1,494.0 L759.2,493.9 L759.3,493.8 L759.5,493.8 L759.6,493.7 L759.8,493.6 L759.9,493.6 L760.1,493.5 L760.2,493.4 L760.3,493.3 L760.5,493.2 L760.6,493.1 L760.8,493.0 L760.9,492.9 L761.0,492.8 L761.2,492.7 L761.3,492.6 L761.5,492.6 L761.6,492.5 L761.7,492.5 L761.9,492.4 L762.0,492.4 L762.2,492.4 L762.3,492.4 L762.5,492.4 L762.6,492.5 L762.7,492.5 L762.9,492.5 L763.0,492.6 L763.2,492.7 L763.3,492.7 L763.4,492.8 L763.6,492.9 L763.7,493.0 L763.9,493.1 L764.0,493.2 L764.1,493.3 L764.3,493.3 L764.4,493.4 L764.6,493.5 L764.7,493.6 L764.9,493.7 L765.0,493.7 L765.1,493.8 L765.3,493.9 L765.4,493.9 L765.6,494.0 L765.7,494.1 L765.8,494.2 L766.0,494.3 L766.1,494.4 L766.3,494.4 L766.4,494.5 L766.5,494.6 L766.7,494.7 L766.8,494.8 L767.0,494.8 L767.1,494.9 L767.3,494.9 L767.4,495.0 L767.5,495.0 L767.7,495.0 L767.8,495.1 L768.0,495.1 L768.1,495.1 L768.2,495.0 L768.4,495.0 L768.5,494.9 L768.7,494.9 L768.8,494.8 L768.9,494.8 L769.1,494.7 L769.2,494.6 L769.4,494.5 L769.5,494.4 L769.7,494.3 L769.8,494.2 L769.9,494.1 L770.1,494.0 L770.2,493.9 L770.4,493.9 L770.5,493.8 L770.6,493.7 L770.8,493.6 L770.9,493.6 L771.1,493.5 L771.2,493.4 L771.3,493.3 L771.5,493.2 L771.6,493.1 L771.8,493.1 L771.9,493.0 L772.1,492.9 L772.2,492.8 L772.3,492.7 L772.5,492.7 L772.6,492.6 L772.8,492.6 L772.9,492.5 L773.0,492.5 L773.2,492.4 L773.3,492.4 L773.5,492.4 L773.6,492.4 L773.7,492.4 L773.9,492.4 L774.0,492.5 L774.2,492.5 L774.3,492.5 L774.5,492.6 L774.6,492.6 L774.7,492.7 L774.9,492.7 L775.0,492.8 L775.2,492.9 L775.3,493.0 L775.4,493.0 L775.6,493.1 L775.7,493.2 L775.9,493.3 L776.0,493.3 L776.2,493.4 L776.3,493.5 L776.4,493.5 L776.6,493.6 L776.7,493.7 L776.9,493.7 L777.0,493.8 L777.1,493.8 L777.3,493.9 L777.4,494.0 L777.6,494.1 L777.7,494.1 L777.8,494.2 L778.0,494.3 L778.1,494.4 L778.3,494.4 L778.4,494.5 L778.6,494.6 L778.7,494.7 L778.8,494.7 L779.0,494.8 L779.1,494.8 L779.3,494.9 L779.4,494.9 L779.5,495.0 L779.7,495.0 L779.8,495.1 L780.0,495.1 L780.1,495.1 L780.2,495.1 L780.4,495.1 L780.5,495.1 L780.7,495.1 L780.8,495.1 L781.0,495.0 L781.1,495.0 L781.2,494.9 L781.4,494.8 L781.5,494.7 L781.7,494.7 L781.8,494.6 L781.9,494.5 L782.1,494.4 L782.2,494.3 L782.4,494.2 L782.5,494.1 L782.6,494.1 L782.8,494.0 L782.9,493.9 L783.1,493.8 L783.2,493.8 L783.4,493.7 L783.5,493.6 L783.6,493.6 L783.8,493.5 L783.9,493.5 L784.1,493.4 L784.2,493.4 L784.3,493.3 L784.5,493.3 L784.6,493.2 L784.8,493.2 L784.9,493.1 L785.0,493.1 L785.2,493.0 L785.3,493.0 L785.5,492.9 L785.6,492.9 L785.8,492.9 L785.9,492.8" fill="none" stroke="#77ac30" stroke-width="1.2"/><path d="M703.1,494.3 L703.2,494.3 L703.3,493.5 L703.5,493.7 L703.6,493.9 L703.7,493.6 L703.8,493.5 L703.9,493.8 L704.0,493.8 L704.1,493.6 L704.2,493.7 L704.3,494.0 L704.4,493.9 L704.5,494.0 L704.6,493.7 L704.7,493.5 L704.8,493.7 L704.9,493.6 L705.0,494.1 L705.1,493.9 L705.3,493.6 L705.4,494.0 L705.5,493.8 L705.6,494.1 L705.7,493.6 L705.8,493.5 L705.9,493.6 L706.0,493.6 L706.1,493.5 L706.2,493.8 L706.3,493.7 L706.4,493.6 L706.5,493.7 L706.6,493.9 L706.7,493.8 L706.8,493.8 L707.0,493.9 L707.1,493.6 L707.2,493.7 L707.3,493.8 L707.4,493.7 L707.5,493.7 L707.6,493.8 L707.7,493.8 L707.8,493.8 L707.9,493.7 L708.0,493.7 L708.1,493.6 L708.2,493.7 L708.3,493.7 L708.4,493.7 L708.5,493.6 L708.6,493.8 L708.8,493.7 L708.9,493.7 L709.0,493.7 L709.1,493.8 L709.2,493.7 L709.3,493.7 L709.4,493.6 L709.5,493.7 L709.6,493.7 L709.7,493.7 L709.8,493.8 L709.9,493.7 L710.0,493.6 L710.1,493.7 L710.2,493.6 L710.3,493.7 L710.4,493.7 L710.6,493.8 L710.7,493.6 L710.8,493.7 L710.9,493.6 L711.0,493.7 L711.1,493.7 L711.2,493.6 L711.3,493.7 L711.4,493.8 L711.5,493.8 L711.6,493.8 L711.7,493.6 L711.8,493.7 L711.9,493.7 L712.0,493.7 L712.1,493.7 L712.2,493.7 L712.4,493.6 L712.5,493.7 L712.6,493.8 L712.7,493.6 L712.8,493.6 L712.9,493.7 L713.0,493.6 L713.1,493.7 L713.2,493.8 L713.3,493.6 L713.4,493.7 L713.5,493.6 L713.6,493.7 L713.7,493.7 L713.8,493.6 L713.9,493.8 L714.0,493.7 L714.2,493.7 L714.3,493.7 L714.4,493.8 L714.5,493.8 L714.6,493.7 L714.7,493.7 L714.8,493.7 L714.9,493.8 L715.0,493.6 L715.1,493.7 L715.2,493.6 L715.3,493.7 L715.4,493.7 L715.5,493.7 L715.6,493.7 L715.7,493.7 L715.8,493.7 L716.0,493.7 L716.1,493.7 L716.2,493.8 L716.3,493.7 L716.4,493.7 L716.5,493.7 L716.6,493.8 L716.7,493.8 L716.8,493.6 L716.9,493.6 L717.0,493.6 L717.1,493.7 L717.2,493.7 L717.3,493.7 L717.4,493.7 L717.5,493.7 L717.6,493.6 L717.8,493.7 L717.9,493.8 L718.0,493.7 L718.1,493.6 L718.2,493.7 L718.3,493.7 L718.4,493.7 L718.5,493.7 L718.6,493.7 L718.7,493.7 L718.8,493.7 L718.9,493.6 L719.0,493.7 L719.1,493.6 L719.2,493.7 L719.3,493.7 L719.4,493.7 L719.6,493.7 L719.7,493.7 L719.8,493.7 L719.9,493.7 L720.0,493.7 L720.1,493.8 L720.2,493.7 L720.3,493.7 L720.4,493.6 L720.5,493.7 L720.6,493.7 L720.7,493.7 L720.8,493.6 L720.9,493.6 L721.0,493.7 L721.1,493.7 L721.2,493.7 L721.4,493.7 L721.5,493.6 L721.6,493.7 L721.7,493.7 L721.8,493.7 L721.9,493.7 L722.0,493.6 L722.1,493.7 L722.2,493.7 L722.3,493.7 L722.4,493.8 L722.5,493.7 L722.6,493.7 L722.7,493.8 L722.8,493.7 L722.9,493.7 L723.0,493.7 L723.2,493.7 L723.3,493.7 L723.4,493.7 L723.5,493.6 L723.6,493.8 L723.7,493.7 L723.8,493.7 L723.9,493.7 L724.0,493.7 L724.1,493.8 L724.2,493.7 L724.3,493.7 L724.4,493.7 L724.5,493.7 L724.6,493.8 L724.7,493.7 L724.9,493.7 L725.0,493.6 L725.1,493.8 L725.2,493.7 L725.3,493.7 L725.4,493.7 L725.5,493.7 L725.6,493.7 L725.7,493.7 L725.8,493.7 L725.9,493.6 L726.0,493.7 L726.1,493.8 L726.2,493.7 L726.3,493.8 L726.4,493.7 L726.5,493.7 L726.7,493.6 L726.8,493.7 L726.9,493.8 L727.0,493.7 L727.1,493.7 L727.2,493.7 L727.3,493.7 L727.4,493.7 L727.5,493.7 L727.6,493.8 L727.7,493.7 L727.8,493.8 L727.9,493.7 L728.0,493.8 L728.1,493.8 L728.2,493.7 L728.3,493.7 L728.5,493.7 L728.6,493.7 L728.7,493.8 L728.8,493.6 L728.9,493.8 L729.0,493.6 L729.1,493.7 L729.2,493.9 L729.3,493.7 L729.4,493.1 L729.5,493.7 L729.6,493.9 L729.7,494.0 L729.8,493.8 L729.9,493.8 L730.0,494.2 L730.1,493.1 L730.3,493.1 L730.4,493.3 L730.5,494.3 L730.6,493.4 L730.7,492.9 L730.8,493.6 L730.9,493.2 L731.0,494.2 L731.1,493.6 L731.2,493.6 L731.3,493.2 L731.4,494.1 L731.5,493.1 L731.6,494.1 L731.7,493.6 L731.8,494.0 L731.9,493.8 L732.1,493.9 L732.2,493.2 L732.3,492.9 L732.4,494.4 L732.5,494.0 L732.6,494.2 L732.7,493.4 L732.8,493.8 L732.9,494.2 L733.0,493.2 L733.1,494.0 L733.2,494.5 L733.3,494.5 L733.4,493.6 L733.5,493.2 L733.6,494.4 L733.7,493.4 L733.9,494.0 L734.0,493.5 L734.1,493.4 L734.2,493.5 L734.3,494.0 L734.4,494.0 L734.5,493.4 L734.6,493.1 L734.7,494.1 L734.8,493.6 L734.9,494.1 L735.0,492.9 L735.1,493.8 L735.2,494.0 L735.3,493.1 L735.4,493.8 L735.5,494.7 L735.7,494.6 L735.8,494.0 L735.9,493.7 L736.0,494.0 L736.1,493.7 L736.2,493.7 L736.3,493.7 L736.4,493.6 L736.5,494.0 L736.6,493.3 L736.7,494.2 L736.8,493.2 L736.9,493.6 L737.0,494.2 L737.1,494.8 L737.2,494.0 L737.3,493.3 L737.5,493.7 L737.6,493.5 L737.7,493.9 L737.8,493.5 L737.9,493.5 L738.0,493.8 L738.1,493.5 L738.2,493.7 L738.3,493.5 L738.4,494.0 L738.5,493.5 L738.6,493.7 L738.7,493.9 L738.8,493.8 L738.9,493.9 L739.0,493.8 L739.1,493.6 L739.3,493.8 L739.4,493.5 L739.5,493.8 L739.6,493.5 L739.7,493.7 L739.8,493.7 L739.9,494.0 L740.0,493.6 L740.1,493.5 L740.2,493.8 L740.3,493.8 L740.4,493.7 L740.5,493.5 L740.6,493.7 L740.7,493.7 L740.8,493.5 L741.0,493.6 L741.1,493.8 L741.2,493.5 L741.3,493.6 L741.4,493.6 L741.5,493.8 L741.6,493.8 L741.7,493.6 L741.8,493.7 L741.9,493.7 L742.0,493.6 L742.1,493.8 L742.2,493.8 L742.3,493.8 L742.4,493.7 L742.5,493.7 L742.6,493.7 L742.8,493.6 L742.9,493.6 L743.0,493.6 L743.1,493.8 L743.2,493.6 L743.3,493.8 L743.4,493.7 L743.5,494.1 L743.6,493.3 L743.7,493.9 L743.8,493.5 L743.9,494.1 L744.0,492.6 L744.1,493.8 L744.2,494.0 L744.3,493.3 L744.4,493.9 L744.6,493.6 L744.7,494.0 L744.8,494.5 L744.9,494.1 L745.0,493.3 L745.1,493.7 L745.2,493.7 L745.3,494.4 L745.4,493.4 L745.5,494.0 L745.6,493.4 L745.7,494.3 L745.8,493.5 L745.9,493.0 L746.0,492.7 L746.1,494.1 L746.2,494.1 L746.4,493.3 L746.5,494.4 L746.6,494.5 L746.7,493.2 L746.8,493.4 L746.9,492.9 L747.0,493.6 L747.1,493.3 L747.2,493.8 L747.3,494.3 L747.4,493.3 L747.5,493.4 L747.6,493.2 L747.7,492.6 L747.8,493.1 L747.9,493.6 L748.0,493.1 L748.2,493.8 L748.3,493.7 L748.4,494.0 L748.5,493.2 L748.6,493.4 L748.7,493.6 L748.8,493.6 L748.9,493.4 L749.0,493.5 L749.1,493.9 L749.2,493.9 L749.3,493.5 L749.4,493.5 L749.5,493.5 L749.6,494.0 L749.7,493.5 L749.8,493.6 L750.0,493.6 L750.1,493.9 L750.2,493.9 L750.3,493.5 L750.4,493.8 L750.5,493.6 L750.6,493.7 L750.7,493.8 L750.8,493.6 L750.9,493.6 L751.0,493.8 L751.1,493.8 L751.2,493.6 L751.3,493.5 L751.4,493.8 L751.5,493.6 L751.6,493.6 L751.8,493.6 L751.9,493.6 L752.0,493.6 L752.1,493.7 L752.2,493.7 L752.3,493.6 L752.4,493.8 L752.5,493.8 L752.6,493.8 L752.7,493.7 L752.8,493.8 L752.9,493.7 L753.0,493.8 L753.1,493.8 L753.2,493.7 L753.3,493.6 L753.4,493.7 L753.6,493.7 L753.7,493.8 L753.8,493.7 L753.9,493.7 L754.0,493.8 L754.1,493.8 L754.2,493.7 L754.3,493.6 L754.4,493.8 L754.5,493.7 L754.6,493.7 L754.7,493.7 L754.8,493.7 L754.9,493.8 L755.0,493.7 L755.1,493.6 L755.2,493.7 L755.4,493.6 L755.5,493.8 L755.6,493.8 L755.7,493.6 L755.8,493.8 L755.9,493.7 L756.0,493.8 L756.1,493.6 L756.2,493.8 L756.3,493.8 L756.4,493.7 L756.5,493.7 L756.6,493.8 L756.7,493.7 L756.8,493.7 L756.9,493.7 L757.0,493.6 L757.2,493.7 L757.3,493.7 L757.4,493.7 L757.5,493.7 L757.6,493.8 L757.7,493.8 L757.8,493.7 L757.9,493.7 L758.0,493.7 L758.1,493.6 L758.2,493.6 L758.3,493.6 L758.4,493.7 L758.5,493.7 L758.6,493.6 L758.7,493.8 L758.9,493.7 L759.0,493.6 L759.1,493.8 L759.2,493.8 L759.3,493.8 L759.4,493.8 L759.5,493.6 L759.6,493.6 L759.7,493.9 L759.8,493.8 L759.9,493.7 L760.0,493.8 L760.1,493.7 L760.2,493.7 L760.3,493.6 L760.4,493.6 L760.5,493.6 L760.7,493.8 L760.8,493.6 L760.9,493.8 L761.0,493.7 L761.1,493.7 L761.2,493.8 L761.3,493.6 L761.4,493.6 L761.5,493.7 L761.6,493.7 L761.7,493.8 L761.8,493.6 L761.9,493.7 L762.0,493.6 L762.1,493.8 L762.2,493.7 L762.3,493.8 L762.5,493.6 L762.6,493.7 L762.7,493.6 L762.8,493.6 L762.9,493.8 L763.0,493.7 L763.1,493.8 L763.2,493.6 L763.3,493.8 L763.4,493.8 L763.5,493.7 L763.6,493.7 L763.7,493.7 L763.8,493.8 L763.9,493.6 L764.0,493.7 L764.1,493.8 L764.3,493.7 L764.4,493.7 L764.5,493.7 L764.6,493.6 L764.7,493.7 L764.8,493.8 L764.9,493.8 L765.0,493.6 L765.1,493.7 L765.2,493.7 L765.3,493.8 L765.4,493.7 L765.5,493.8 L765.6,493.8 L765.7,493.6 L765.8,493.6 L765.9,493.6 L766.1,493.7 L766.2,493.7 L766.3,493.8 L766.4,493.7 L766.5,493.9 L766.6,493.7 L766.7,493.7 L766.8,493.8 L766.9,493.8 L767.0,493.6 L767.1,493.7 L767.2,493.7 L767.3,493.7 L767.4,493.8 L767.5,493.6 L767.6,493.7 L767.7,493.8 L767.9,493.6 L768.0,493.7 L768.1,493.6 L768.2,493.8 L768.3,493.8 L768.4,493.7 L768.5,493.5 L768.6,493.7 L768.7,493.8 L768.8,493.7 L768.9,493.8 L769.0,493.6 L769.1,493.7 L769.2,493.6 L769.3,493.6 L769.4,493.8 L769.5,493.9 L769.7,493.7 L769.8,493.8 L769.9,493.6 L770.0,493.6 L770.1,493.6 L770.2,493.7 L770.3,493.6 L770.4,493.8 L770.5,493.6 L770.6,493.8 L770.7,493.6 L770.8,493.6 L770.9,493.7 L771.0,493.7 L771.1,493.8 L771.2,493.8 L771.3,493.8 L771.5,493.6 L771.6,493.6 L771.7,493.6 L771.8,493.6 L771.9,493.5 L772.0,493.7 L772.1,493.5 L772.2,493.6 L772.3,493.7 L772.4,493.9 L772.5,493.9 L772.6,493.7 L772.7,493.7 L772.8,493.6 L772.9,493.8 L773.0,493.6 L773.1,493.9 L773.3,493.8 L773.4,493.6 L773.5,493.6 L773.6,493.9 L773.7,493.8 L773.8,493.7 L773.9,493.6 L774.0,493.6 L774.1,493.9 L774.2,493.5 L774.3,493.8 L774.4,493.6 L774.5,493.6 L774.6,493.8 L774.7,493.7 L774.8,493.8 L775.0,493.8 L775.1,493.9 L775.2,493.8 L775.3,493.7 L775.4,493.9 L775.5,493.7 L775.6,493.7 L775.7,493.6 L775.8,493.8 L775.9,493.6 L776.0,493.6 L776.1,493.6 L776.2,493.6 L776.3,493.8 L776.4,493.6 L776.5,493.7 L776.6,493.7 L776.8,493.6 L776.9,493.5 L777.0,493.8 L777.1,493.8 L777.2,493.6 L777.3,493.6 L777.4,493.7 L777.5,493.7 L777.6,493.7 L777.7,493.6 L777.8,493.7 L777.9,493.6 L778.0,493.7 L778.1,493.7 L778.2,493.6 L778.3,493.7 L778.4,493.6 L778.6,493.8 L778.7,493.7 L778.8,493.6 L778.9,493.8 L779.0,493.7 L779.1,493.6 L779.2,493.8 L779.3,493.6 L779.4,493.6 L779.5,493.6 L779.6,493.7 L779.7,493.7 L779.8,493.6 L779.9,493.7 L780.0,493.6 L780.1,493.7 L780.2,493.6 L780.4,493.6 L780.5,493.7 L780.6,493.6 L780.7,493.6 L780.8,493.8 L780.9,493.8 L781.0,493.6 L781.1,493.6 L781.2,493.6 L781.3,493.8 L781.4,493.8 L781.5,493.6 L781.6,493.6 L781.7,493.9 L781.8,493.7 L781.9,493.8 L782.0,493.7 L782.2,493.5 L782.3,493.8 L782.4,493.6 L782.5,493.6 L782.6,493.9 L782.7,493.6 L782.8,493.8 L782.9,493.8 L783.0,493.8 L783.1,493.8 L783.2,493.5 L783.3,493.7 L783.4,493.5 L783.5,493.7 L783.6,493.8 L783.7,493.8 L783.8,493.5 L784.0,493.8 L784.1,493.9 L784.2,493.8 L784.3,493.6 L784.4,493.7 L784.5,493.7 L784.6,493.8 L784.7,493.8 L784.8,493.8 L784.9,493.6 L785.0,493.9 L785.1,493.8 L785.2,493.6 L785.3,493.6 L785.4,493.7 L785.5,493.6 L785.6,493.6 L785.8,493.8 L785.9,493.9" fill="none" stroke="#ff6b2c" stroke-width="1.3"/></g><rect x="364.5" y="473.5" width="587" height="36" fill="none" stroke="#111" stroke-width="1"/><line x1="703.5" y1="473.5" x2="703.5" y2="509.5" stroke="#111" stroke-width="1.3"/><line x1="786.5" y1="473.5" x2="786.5" y2="509.5" stroke="#111" stroke-width="1.3"/><line x1="364.5" y1="509.5" x2="364.5" y2="513" stroke="#222"/><text x="364.5" y="522" font-size="10.5" text-anchor="middle" fill="#222">0</text><line x1="442.5" y1="509.5" x2="442.5" y2="513" stroke="#222"/><text x="442.5" y="522" font-size="10.5" text-anchor="middle" fill="#222">2</text><line x1="520.5" y1="509.5" x2="520.5" y2="513" stroke="#222"/><text x="520.5" y="522" font-size="10.5" text-anchor="middle" fill="#222">4</text><line x1="598.5" y1="509.5" x2="598.5" y2="513" stroke="#222"/><text x="598.5" y="522" font-size="10.5" text-anchor="middle" fill="#222">6</text><line x1="676.5" y1="509.5" x2="676.5" y2="513" stroke="#222"/><text x="676.5" y="522" font-size="10.5" text-anchor="middle" fill="#222">8</text><line x1="754.5" y1="509.5" x2="754.5" y2="513" stroke="#222"/><text x="754.5" y="522" font-size="10.5" text-anchor="middle" fill="#222">10</text><line x1="832.5" y1="509.5" x2="832.5" y2="513" stroke="#222"/><text x="832.5" y="522" font-size="10.5" text-anchor="middle" fill="#222">12</text><line x1="910.5" y1="509.5" x2="910.5" y2="513" stroke="#222"/><text x="910.5" y="522" font-size="10.5" text-anchor="middle" fill="#222">14</text><line x1="361" y1="473.5" x2="364" y2="473.5" stroke="#222"/><text x="357.5" y="477.3" font-size="10.5" text-anchor="end" fill="#222">1</text><line x1="361" y1="491.5" x2="364" y2="491.5" stroke="#222"/><text x="357.5" y="495.3" font-size="10.5" text-anchor="end" fill="#222">0</text><line x1="361" y1="509.5" x2="364" y2="509.5" stroke="#222"/><text x="357.5" y="513.3" font-size="10.5" text-anchor="end" fill="#222">-1</text><text x="650" y="544" font-size="10" text-anchor="middle" fill="#222">Time (minutes)</text></svg>
</body></html>
